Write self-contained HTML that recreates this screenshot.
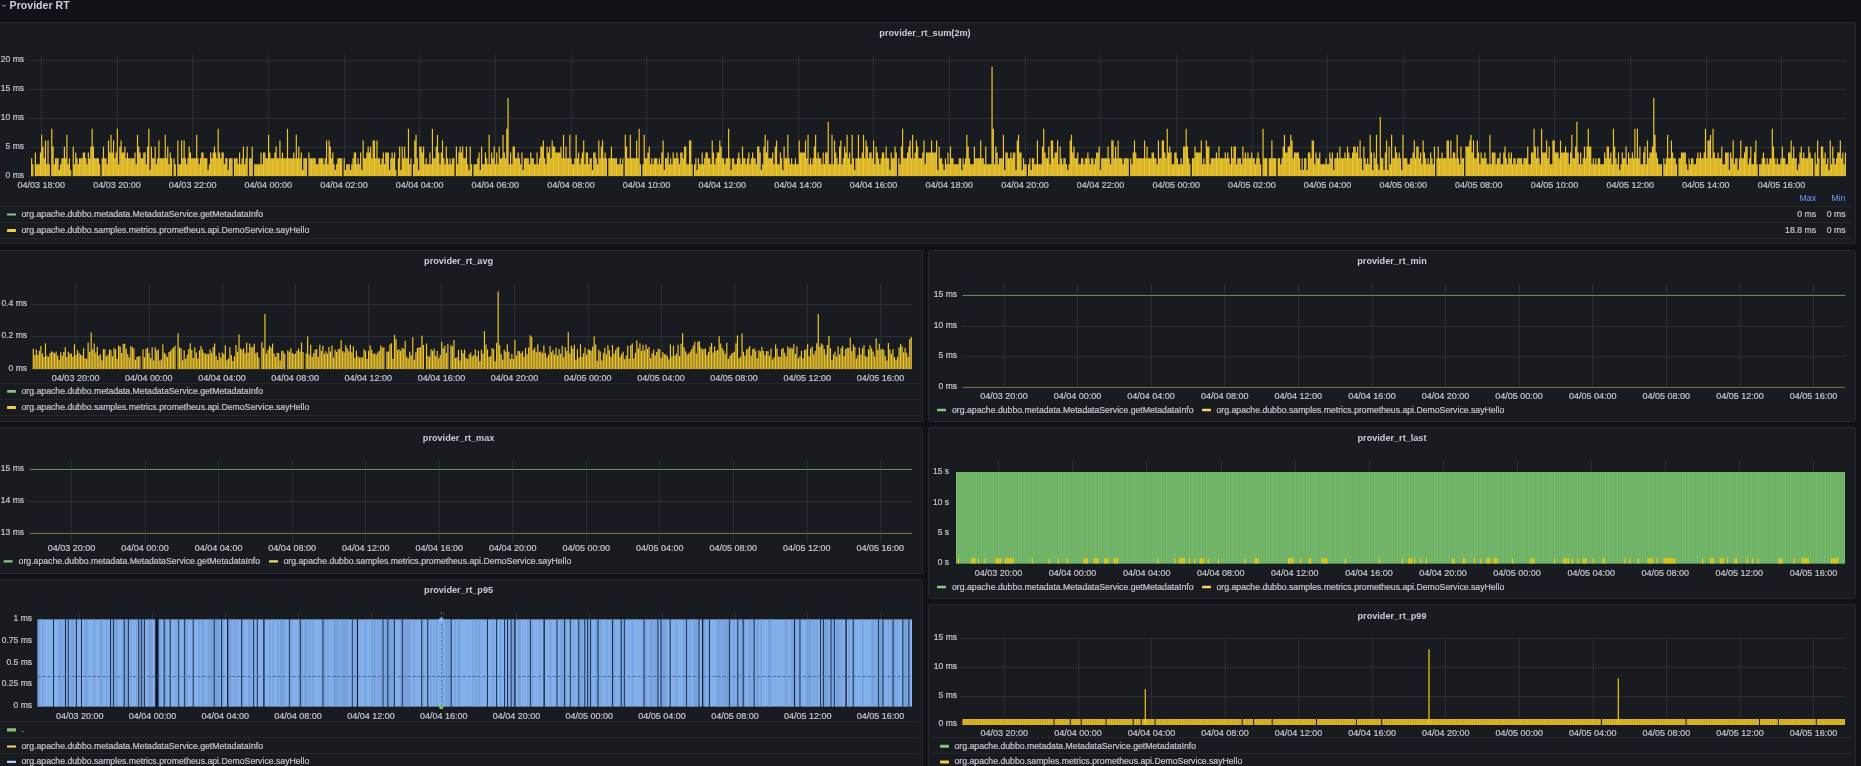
<!DOCTYPE html>
<html><head><meta charset="utf-8"><style>
html,body{margin:0;padding:0;background:#111217;width:1861px;height:766px;overflow:hidden}
</style></head><body>
<svg width="1861" height="766" viewBox="0 0 1861 766" font-family="'Liberation Sans', sans-serif" style="position:absolute;left:0;top:0;will-change:transform"><rect width="1861" height="766" fill="#111217"/><path d="M2.2 4.8 L4 6.6 L5.8 4.8" fill="none" stroke="#ccccdc" stroke-width="0.9"/><text x="9.6" y="9" font-size="10.6" font-weight="bold" fill="#ccccdc">Provider RT</text><rect x="-5.5" y="22.5" width="1861" height="221" rx="1.5" fill="#181b1f" stroke="#26282d" stroke-width="1"/><text x="925" y="36.3" font-size="9.15" font-weight="bold" text-anchor="middle" fill="#ccccdc">provider_rt_sum(2m)</text><line x1="28" y1="60.5" x2="1846.5" y2="60.5" stroke="#2c2e33" stroke-width="1"/><text x="24" y="59.1" font-size="8.5" text-anchor="end" fill="#c4c4cf" stroke="#c4c4cf" stroke-width="0.22" font-weight="normal" dominant-baseline="central">20 ms</text><line x1="28" y1="89.5" x2="1846.5" y2="89.5" stroke="#2c2e33" stroke-width="1"/><text x="24" y="88.1" font-size="8.5" text-anchor="end" fill="#c4c4cf" stroke="#c4c4cf" stroke-width="0.22" font-weight="normal" dominant-baseline="central">15 ms</text><line x1="28" y1="118.5" x2="1846.5" y2="118.5" stroke="#2c2e33" stroke-width="1"/><text x="24" y="117.1" font-size="8.5" text-anchor="end" fill="#c4c4cf" stroke="#c4c4cf" stroke-width="0.22" font-weight="normal" dominant-baseline="central">10 ms</text><line x1="28" y1="147.5" x2="1846.5" y2="147.5" stroke="#2c2e33" stroke-width="1"/><text x="24" y="146.1" font-size="8.5" text-anchor="end" fill="#c4c4cf" stroke="#c4c4cf" stroke-width="0.22" font-weight="normal" dominant-baseline="central">5 ms</text><line x1="28" y1="176.5" x2="1846.5" y2="176.5" stroke="#2c2e33" stroke-width="1"/><text x="24" y="175.1" font-size="8.5" text-anchor="end" fill="#c4c4cf" stroke="#c4c4cf" stroke-width="0.22" font-weight="normal" dominant-baseline="central">0 ms</text><line x1="41.5" y1="55" x2="41.5" y2="176" stroke="#2c2e33" stroke-width="1"/><text x="41.320000000000164" y="185" font-size="9" text-anchor="middle" fill="#c4c4cf" stroke="#c4c4cf" stroke-width="0.22" font-weight="normal" dominant-baseline="central">04/03 18:00</text><line x1="117.5" y1="55" x2="117.5" y2="176" stroke="#2c2e33" stroke-width="1"/><text x="116.98000000000002" y="185" font-size="9" text-anchor="middle" fill="#c4c4cf" stroke="#c4c4cf" stroke-width="0.22" font-weight="normal" dominant-baseline="central">04/03 20:00</text><line x1="192.5" y1="55" x2="192.5" y2="176" stroke="#2c2e33" stroke-width="1"/><text x="192.6400000000001" y="185" font-size="9" text-anchor="middle" fill="#c4c4cf" stroke="#c4c4cf" stroke-width="0.22" font-weight="normal" dominant-baseline="central">04/03 22:00</text><line x1="268.5" y1="55" x2="268.5" y2="176" stroke="#2c2e33" stroke-width="1"/><text x="268.3000000000002" y="185" font-size="9" text-anchor="middle" fill="#c4c4cf" stroke="#c4c4cf" stroke-width="0.22" font-weight="normal" dominant-baseline="central">04/04 00:00</text><line x1="344.5" y1="55" x2="344.5" y2="176" stroke="#2c2e33" stroke-width="1"/><text x="343.96000000000004" y="185" font-size="9" text-anchor="middle" fill="#c4c4cf" stroke="#c4c4cf" stroke-width="0.22" font-weight="normal" dominant-baseline="central">04/04 02:00</text><line x1="419.5" y1="55" x2="419.5" y2="176" stroke="#2c2e33" stroke-width="1"/><text x="419.6200000000001" y="185" font-size="9" text-anchor="middle" fill="#c4c4cf" stroke="#c4c4cf" stroke-width="0.22" font-weight="normal" dominant-baseline="central">04/04 04:00</text><line x1="495.5" y1="55" x2="495.5" y2="176" stroke="#2c2e33" stroke-width="1"/><text x="495.28" y="185" font-size="9" text-anchor="middle" fill="#c4c4cf" stroke="#c4c4cf" stroke-width="0.22" font-weight="normal" dominant-baseline="central">04/04 06:00</text><line x1="571.5" y1="55" x2="571.5" y2="176" stroke="#2c2e33" stroke-width="1"/><text x="570.94" y="185" font-size="9" text-anchor="middle" fill="#c4c4cf" stroke="#c4c4cf" stroke-width="0.22" font-weight="normal" dominant-baseline="central">04/04 08:00</text><line x1="646.5" y1="55" x2="646.5" y2="176" stroke="#2c2e33" stroke-width="1"/><text x="646.6000000000001" y="185" font-size="9" text-anchor="middle" fill="#c4c4cf" stroke="#c4c4cf" stroke-width="0.22" font-weight="normal" dominant-baseline="central">04/04 10:00</text><line x1="722.5" y1="55" x2="722.5" y2="176" stroke="#2c2e33" stroke-width="1"/><text x="722.26" y="185" font-size="9" text-anchor="middle" fill="#c4c4cf" stroke="#c4c4cf" stroke-width="0.22" font-weight="normal" dominant-baseline="central">04/04 12:00</text><line x1="798.5" y1="55" x2="798.5" y2="176" stroke="#2c2e33" stroke-width="1"/><text x="797.9200000000001" y="185" font-size="9" text-anchor="middle" fill="#c4c4cf" stroke="#c4c4cf" stroke-width="0.22" font-weight="normal" dominant-baseline="central">04/04 14:00</text><line x1="873.5" y1="55" x2="873.5" y2="176" stroke="#2c2e33" stroke-width="1"/><text x="873.58" y="185" font-size="9" text-anchor="middle" fill="#c4c4cf" stroke="#c4c4cf" stroke-width="0.22" font-weight="normal" dominant-baseline="central">04/04 16:00</text><line x1="949.5" y1="55" x2="949.5" y2="176" stroke="#2c2e33" stroke-width="1"/><text x="949.24" y="185" font-size="9" text-anchor="middle" fill="#c4c4cf" stroke="#c4c4cf" stroke-width="0.22" font-weight="normal" dominant-baseline="central">04/04 18:00</text><line x1="1025.5" y1="55" x2="1025.5" y2="176" stroke="#2c2e33" stroke-width="1"/><text x="1024.9" y="185" font-size="9" text-anchor="middle" fill="#c4c4cf" stroke="#c4c4cf" stroke-width="0.22" font-weight="normal" dominant-baseline="central">04/04 20:00</text><line x1="1100.5" y1="55" x2="1100.5" y2="176" stroke="#2c2e33" stroke-width="1"/><text x="1100.56" y="185" font-size="9" text-anchor="middle" fill="#c4c4cf" stroke="#c4c4cf" stroke-width="0.22" font-weight="normal" dominant-baseline="central">04/04 22:00</text><line x1="1176.5" y1="55" x2="1176.5" y2="176" stroke="#2c2e33" stroke-width="1"/><text x="1176.22" y="185" font-size="9" text-anchor="middle" fill="#c4c4cf" stroke="#c4c4cf" stroke-width="0.22" font-weight="normal" dominant-baseline="central">04/05 00:00</text><line x1="1252.5" y1="55" x2="1252.5" y2="176" stroke="#2c2e33" stroke-width="1"/><text x="1251.88" y="185" font-size="9" text-anchor="middle" fill="#c4c4cf" stroke="#c4c4cf" stroke-width="0.22" font-weight="normal" dominant-baseline="central">04/05 02:00</text><line x1="1327.5" y1="55" x2="1327.5" y2="176" stroke="#2c2e33" stroke-width="1"/><text x="1327.54" y="185" font-size="9" text-anchor="middle" fill="#c4c4cf" stroke="#c4c4cf" stroke-width="0.22" font-weight="normal" dominant-baseline="central">04/05 04:00</text><line x1="1403.5" y1="55" x2="1403.5" y2="176" stroke="#2c2e33" stroke-width="1"/><text x="1403.2" y="185" font-size="9" text-anchor="middle" fill="#c4c4cf" stroke="#c4c4cf" stroke-width="0.22" font-weight="normal" dominant-baseline="central">04/05 06:00</text><line x1="1479.5" y1="55" x2="1479.5" y2="176" stroke="#2c2e33" stroke-width="1"/><text x="1478.8600000000001" y="185" font-size="9" text-anchor="middle" fill="#c4c4cf" stroke="#c4c4cf" stroke-width="0.22" font-weight="normal" dominant-baseline="central">04/05 08:00</text><line x1="1554.5" y1="55" x2="1554.5" y2="176" stroke="#2c2e33" stroke-width="1"/><text x="1554.52" y="185" font-size="9" text-anchor="middle" fill="#c4c4cf" stroke="#c4c4cf" stroke-width="0.22" font-weight="normal" dominant-baseline="central">04/05 10:00</text><line x1="1630.5" y1="55" x2="1630.5" y2="176" stroke="#2c2e33" stroke-width="1"/><text x="1630.18" y="185" font-size="9" text-anchor="middle" fill="#c4c4cf" stroke="#c4c4cf" stroke-width="0.22" font-weight="normal" dominant-baseline="central">04/05 12:00</text><line x1="1706.5" y1="55" x2="1706.5" y2="176" stroke="#2c2e33" stroke-width="1"/><text x="1705.84" y="185" font-size="9" text-anchor="middle" fill="#c4c4cf" stroke="#c4c4cf" stroke-width="0.22" font-weight="normal" dominant-baseline="central">04/05 14:00</text><line x1="1781.5" y1="55" x2="1781.5" y2="176" stroke="#2c2e33" stroke-width="1"/><text x="1781.5" y="185" font-size="9" text-anchor="middle" fill="#c4c4cf" stroke="#c4c4cf" stroke-width="0.22" font-weight="normal" dominant-baseline="central">04/05 16:00</text><path d="M31.04 176V158.30h1.18V176ZM32.30 176V164.20h1.18V176ZM34.82 176V152.40h1.18V176ZM36.08 176V164.20h1.18V176ZM37.34 176V164.20h1.18V176ZM38.60 176V164.20h1.18V176ZM39.86 176V152.40h1.18V176ZM41.12 176V134.70h1.18V176ZM42.38 176V146.50h1.18V176ZM43.64 176V158.30h1.18V176ZM44.90 176V140.60h1.18V176ZM46.17 176V164.20h1.18V176ZM47.43 176V140.60h1.18V176ZM48.69 176V164.20h1.18V176ZM51.21 176V128.80h1.18V176ZM52.47 176V146.50h1.18V176ZM53.73 176V164.20h1.18V176ZM54.99 176V158.30h1.18V176ZM56.25 176V158.30h1.18V176ZM57.51 176V158.30h1.18V176ZM58.77 176V170.10h1.18V176ZM60.03 176V164.20h1.18V176ZM61.29 176V158.30h1.18V176ZM62.55 176V158.30h1.18V176ZM63.81 176V146.50h1.18V176ZM65.07 176V158.30h1.18V176ZM66.33 176V134.70h1.18V176ZM67.59 176V164.20h1.18V176ZM68.85 176V158.30h1.18V176ZM70.11 176V170.10h1.18V176ZM72.63 176V146.50h1.18V176ZM73.89 176V164.20h1.18V176ZM75.15 176V152.40h1.18V176ZM76.42 176V158.30h1.18V176ZM77.68 176V164.20h1.18V176ZM78.94 176V158.30h1.18V176ZM80.20 176V158.30h1.18V176ZM81.46 176V158.30h1.18V176ZM82.72 176V152.40h1.18V176ZM83.98 176V152.40h1.18V176ZM85.24 176V158.30h1.18V176ZM86.50 176V164.20h1.18V176ZM87.76 176V152.40h1.18V176ZM89.02 176V158.30h1.18V176ZM90.28 176V146.50h1.18V176ZM91.54 176V128.80h1.18V176ZM92.80 176V146.50h1.18V176ZM94.06 176V158.30h1.18V176ZM95.32 176V158.30h1.18V176ZM96.58 176V158.30h1.18V176ZM97.84 176V158.30h1.18V176ZM99.10 176V164.20h1.18V176ZM101.62 176V158.30h1.18V176ZM102.88 176V146.50h1.18V176ZM104.14 176V158.30h1.18V176ZM105.40 176V158.30h1.18V176ZM106.67 176V164.20h1.18V176ZM107.93 176V140.60h1.18V176ZM109.19 176V152.40h1.18V176ZM110.45 176V134.70h1.18V176ZM111.71 176V152.40h1.18V176ZM112.97 176V140.60h1.18V176ZM114.23 176V158.30h1.18V176ZM115.49 176V152.40h1.18V176ZM116.75 176V128.80h1.18V176ZM118.01 176V164.20h1.18V176ZM119.27 176V146.50h1.18V176ZM120.53 176V140.60h1.18V176ZM121.79 176V152.40h1.18V176ZM123.05 176V152.40h1.18V176ZM124.31 176V146.50h1.18V176ZM125.57 176V158.30h1.18V176ZM126.83 176V152.40h1.18V176ZM128.09 176V158.30h1.18V176ZM129.35 176V158.30h1.18V176ZM130.61 176V158.30h1.18V176ZM131.87 176V158.30h1.18V176ZM133.13 176V158.30h1.18V176ZM134.39 176V152.40h1.18V176ZM135.65 176V164.20h1.18V176ZM136.92 176V134.70h1.18V176ZM138.18 176V146.50h1.18V176ZM139.44 176V152.40h1.18V176ZM140.70 176V158.30h1.18V176ZM141.96 176V158.30h1.18V176ZM143.22 176V152.40h1.18V176ZM144.48 176V152.40h1.18V176ZM145.74 176V164.20h1.18V176ZM147.00 176V146.50h1.18V176ZM148.26 176V128.80h1.18V176ZM149.52 176V170.10h1.18V176ZM150.78 176V146.50h1.18V176ZM152.04 176V158.30h1.18V176ZM153.30 176V158.30h1.18V176ZM154.56 176V146.50h1.18V176ZM155.82 176V164.20h1.18V176ZM157.08 176V158.30h1.18V176ZM158.34 176V140.60h1.18V176ZM159.60 176V158.30h1.18V176ZM160.86 176V158.30h1.18V176ZM162.12 176V158.30h1.18V176ZM163.38 176V158.30h1.18V176ZM164.64 176V134.70h1.18V176ZM165.90 176V158.30h1.18V176ZM167.17 176V146.50h1.18V176ZM168.43 176V164.20h1.18V176ZM169.69 176V152.40h1.18V176ZM170.95 176V158.30h1.18V176ZM173.47 176V158.30h1.18V176ZM174.73 176V164.20h1.18V176ZM177.25 176V140.60h1.18V176ZM178.51 176V164.20h1.18V176ZM179.77 176V164.20h1.18V176ZM181.03 176V140.60h1.18V176ZM182.29 176V158.30h1.18V176ZM183.55 176V140.60h1.18V176ZM184.81 176V158.30h1.18V176ZM186.07 176V164.20h1.18V176ZM187.33 176V158.30h1.18V176ZM188.59 176V146.50h1.18V176ZM189.85 176V152.40h1.18V176ZM191.11 176V158.30h1.18V176ZM192.37 176V158.30h1.18V176ZM193.63 176V158.30h1.18V176ZM194.89 176V158.30h1.18V176ZM196.15 176V134.70h1.18V176ZM197.42 176V158.30h1.18V176ZM198.68 176V164.20h1.18V176ZM199.94 176V158.30h1.18V176ZM201.20 176V152.40h1.18V176ZM202.46 176V152.40h1.18V176ZM203.72 176V158.30h1.18V176ZM204.98 176V158.30h1.18V176ZM206.24 176V158.30h1.18V176ZM207.50 176V170.10h1.18V176ZM208.76 176V164.20h1.18V176ZM210.02 176V152.40h1.18V176ZM211.28 176V158.30h1.18V176ZM212.54 176V152.40h1.18V176ZM213.80 176V146.50h1.18V176ZM215.06 176V152.40h1.18V176ZM216.32 176V158.30h1.18V176ZM217.58 176V128.80h1.18V176ZM218.84 176V152.40h1.18V176ZM220.10 176V158.30h1.18V176ZM221.36 176V152.40h1.18V176ZM222.62 176V152.40h1.18V176ZM223.88 176V164.20h1.18V176ZM225.14 176V158.30h1.18V176ZM226.40 176V158.30h1.18V176ZM227.67 176V170.10h1.18V176ZM228.93 176V158.30h1.18V176ZM230.19 176V158.30h1.18V176ZM231.45 176V158.30h1.18V176ZM233.97 176V158.30h1.18V176ZM235.23 176V158.30h1.18V176ZM236.49 176V158.30h1.18V176ZM237.75 176V164.20h1.18V176ZM239.01 176V152.40h1.18V176ZM240.27 176V164.20h1.18V176ZM241.53 176V158.30h1.18V176ZM242.79 176V146.50h1.18V176ZM244.05 176V164.20h1.18V176ZM245.31 176V158.30h1.18V176ZM246.57 176V146.50h1.18V176ZM249.09 176V158.30h1.18V176ZM250.35 176V158.30h1.18V176ZM251.61 176V146.50h1.18V176ZM254.13 176V164.20h1.18V176ZM255.39 176V164.20h1.18V176ZM256.65 176V164.20h1.18V176ZM257.92 176V164.20h1.18V176ZM259.18 176V164.20h1.18V176ZM260.44 176V152.40h1.18V176ZM261.70 176V164.20h1.18V176ZM262.96 176V152.40h1.18V176ZM264.22 176V152.40h1.18V176ZM265.48 176V158.30h1.18V176ZM266.74 176V158.30h1.18V176ZM268.00 176V134.70h1.18V176ZM269.26 176V152.40h1.18V176ZM270.52 176V158.30h1.18V176ZM271.78 176V158.30h1.18V176ZM273.04 176V158.30h1.18V176ZM274.30 176V152.40h1.18V176ZM275.56 176V146.50h1.18V176ZM276.82 176V158.30h1.18V176ZM278.08 176V158.30h1.18V176ZM279.34 176V140.60h1.18V176ZM280.60 176V158.30h1.18V176ZM281.86 176V152.40h1.18V176ZM283.12 176V158.30h1.18V176ZM284.38 176V158.30h1.18V176ZM285.64 176V158.30h1.18V176ZM286.90 176V128.80h1.18V176ZM288.17 176V158.30h1.18V176ZM289.43 176V158.30h1.18V176ZM290.69 176V158.30h1.18V176ZM291.95 176V158.30h1.18V176ZM293.21 176V152.40h1.18V176ZM294.47 176V158.30h1.18V176ZM295.73 176V134.70h1.18V176ZM296.99 176V158.30h1.18V176ZM298.25 176V146.50h1.18V176ZM299.51 176V158.30h1.18V176ZM300.77 176V152.40h1.18V176ZM302.03 176V170.10h1.18V176ZM303.29 176V158.30h1.18V176ZM304.55 176V158.30h1.18V176ZM305.81 176V158.30h1.18V176ZM308.33 176V152.40h1.18V176ZM309.59 176V158.30h1.18V176ZM310.85 176V158.30h1.18V176ZM312.11 176V158.30h1.18V176ZM313.37 176V158.30h1.18V176ZM314.63 176V158.30h1.18V176ZM315.89 176V164.20h1.18V176ZM317.15 176V164.20h1.18V176ZM318.42 176V158.30h1.18V176ZM319.68 176V158.30h1.18V176ZM320.94 176V158.30h1.18V176ZM322.20 176V158.30h1.18V176ZM323.46 176V164.20h1.18V176ZM324.72 176V158.30h1.18V176ZM325.98 176V140.60h1.18V176ZM327.24 176V164.20h1.18V176ZM328.50 176V140.60h1.18V176ZM329.76 176V146.50h1.18V176ZM331.02 176V158.30h1.18V176ZM332.28 176V152.40h1.18V176ZM333.54 176V164.20h1.18V176ZM334.80 176V170.10h1.18V176ZM336.06 176V164.20h1.18V176ZM337.32 176V158.30h1.18V176ZM338.58 176V158.30h1.18V176ZM339.84 176V158.30h1.18V176ZM341.10 176V158.30h1.18V176ZM343.62 176V158.30h1.18V176ZM344.88 176V170.10h1.18V176ZM346.14 176V164.20h1.18V176ZM347.40 176V164.20h1.18V176ZM348.67 176V164.20h1.18V176ZM349.93 176V170.10h1.18V176ZM351.19 176V164.20h1.18V176ZM352.45 176V158.30h1.18V176ZM353.71 176V152.40h1.18V176ZM354.97 176V152.40h1.18V176ZM356.23 176V164.20h1.18V176ZM357.49 176V158.30h1.18V176ZM358.75 176V164.20h1.18V176ZM360.01 176V152.40h1.18V176ZM361.27 176V170.10h1.18V176ZM362.53 176V140.60h1.18V176ZM363.79 176V158.30h1.18V176ZM365.05 176V158.30h1.18V176ZM366.31 176V152.40h1.18V176ZM367.57 176V146.50h1.18V176ZM368.83 176V152.40h1.18V176ZM370.09 176V146.50h1.18V176ZM371.35 176V158.30h1.18V176ZM372.61 176V140.60h1.18V176ZM373.87 176V140.60h1.18V176ZM375.13 176V158.30h1.18V176ZM376.39 176V140.60h1.18V176ZM377.65 176V158.30h1.18V176ZM378.92 176V158.30h1.18V176ZM380.18 176V164.20h1.18V176ZM381.44 176V158.30h1.18V176ZM382.70 176V152.40h1.18V176ZM383.96 176V164.20h1.18V176ZM385.22 176V152.40h1.18V176ZM386.48 176V152.40h1.18V176ZM387.74 176V152.40h1.18V176ZM389.00 176V170.10h1.18V176ZM390.26 176V158.30h1.18V176ZM391.52 176V152.40h1.18V176ZM392.78 176V158.30h1.18V176ZM394.04 176V152.40h1.18V176ZM395.30 176V170.10h1.18V176ZM397.82 176V158.30h1.18V176ZM399.08 176V146.50h1.18V176ZM400.34 176V170.10h1.18V176ZM401.60 176V146.50h1.18V176ZM402.86 176V158.30h1.18V176ZM404.12 176V146.50h1.18V176ZM405.38 176V158.30h1.18V176ZM406.64 176V158.30h1.18V176ZM407.90 176V128.80h1.18V176ZM409.17 176V164.20h1.18V176ZM410.43 176V158.30h1.18V176ZM412.95 176V164.20h1.18V176ZM414.21 176V140.60h1.18V176ZM415.47 176V134.70h1.18V176ZM416.73 176V158.30h1.18V176ZM417.99 176V170.10h1.18V176ZM419.25 176V146.50h1.18V176ZM420.51 176V146.50h1.18V176ZM421.77 176V152.40h1.18V176ZM423.03 176V146.50h1.18V176ZM424.29 176V164.20h1.18V176ZM425.55 176V158.30h1.18V176ZM426.81 176V164.20h1.18V176ZM428.07 176V164.20h1.18V176ZM429.33 176V152.40h1.18V176ZM430.59 176V164.20h1.18V176ZM431.85 176V128.80h1.18V176ZM433.11 176V158.30h1.18V176ZM434.37 176V158.30h1.18V176ZM435.63 176V146.50h1.18V176ZM436.89 176V134.70h1.18V176ZM438.15 176V152.40h1.18V176ZM439.42 176V164.20h1.18V176ZM440.68 176V152.40h1.18V176ZM441.94 176V140.60h1.18V176ZM443.20 176V158.30h1.18V176ZM444.46 176V164.20h1.18V176ZM445.72 176V146.50h1.18V176ZM446.98 176V158.30h1.18V176ZM448.24 176V164.20h1.18V176ZM449.50 176V158.30h1.18V176ZM450.76 176V164.20h1.18V176ZM452.02 176V158.30h1.18V176ZM453.28 176V158.30h1.18V176ZM455.80 176V146.50h1.18V176ZM457.06 176V164.20h1.18V176ZM458.32 176V152.40h1.18V176ZM459.58 176V146.50h1.18V176ZM460.84 176V152.40h1.18V176ZM462.10 176V146.50h1.18V176ZM463.36 176V158.30h1.18V176ZM464.62 176V158.30h1.18V176ZM465.88 176V146.50h1.18V176ZM467.14 176V164.20h1.18V176ZM468.40 176V170.10h1.18V176ZM469.67 176V146.50h1.18V176ZM470.93 176V164.20h1.18V176ZM473.45 176V164.20h1.18V176ZM474.71 176V164.20h1.18V176ZM475.97 176V164.20h1.18V176ZM477.23 176V158.30h1.18V176ZM478.49 176V152.40h1.18V176ZM479.75 176V170.10h1.18V176ZM481.01 176V146.50h1.18V176ZM482.27 176V164.20h1.18V176ZM483.53 176V164.20h1.18V176ZM484.79 176V152.40h1.18V176ZM486.05 176V158.30h1.18V176ZM487.31 176V164.20h1.18V176ZM488.57 176V134.70h1.18V176ZM489.83 176V164.20h1.18V176ZM491.09 176V152.40h1.18V176ZM492.35 176V158.30h1.18V176ZM493.61 176V146.50h1.18V176ZM494.87 176V164.20h1.18V176ZM496.13 176V152.40h1.18V176ZM497.39 176V164.20h1.18V176ZM498.65 176V146.50h1.18V176ZM499.92 176V158.30h1.18V176ZM501.18 176V158.30h1.18V176ZM502.44 176V134.70h1.18V176ZM503.70 176V152.40h1.18V176ZM504.96 176V158.30h1.18V176ZM506.22 176V128.80h1.18V176ZM507.48 176V98.12h1.18V176ZM508.74 176V164.20h1.18V176ZM510.00 176V152.40h1.18V176ZM511.26 176V164.20h1.18V176ZM512.52 176V146.50h1.18V176ZM513.78 176V146.50h1.18V176ZM515.04 176V158.30h1.18V176ZM516.30 176V158.30h1.18V176ZM517.56 176V152.40h1.18V176ZM518.82 176V158.30h1.18V176ZM520.08 176V164.20h1.18V176ZM521.34 176V152.40h1.18V176ZM522.60 176V170.10h1.18V176ZM523.86 176V158.30h1.18V176ZM525.12 176V158.30h1.18V176ZM526.38 176V158.30h1.18V176ZM527.64 176V158.30h1.18V176ZM528.90 176V164.20h1.18V176ZM530.17 176V152.40h1.18V176ZM531.43 176V158.30h1.18V176ZM532.69 176V158.30h1.18V176ZM533.95 176V164.20h1.18V176ZM535.21 176V164.20h1.18V176ZM536.47 176V152.40h1.18V176ZM537.73 176V164.20h1.18V176ZM538.99 176V158.30h1.18V176ZM540.25 176V146.50h1.18V176ZM541.51 176V146.50h1.18V176ZM542.77 176V140.60h1.18V176ZM544.03 176V158.30h1.18V176ZM545.29 176V164.20h1.18V176ZM546.55 176V146.50h1.18V176ZM547.81 176V152.40h1.18V176ZM549.07 176V146.50h1.18V176ZM550.33 176V158.30h1.18V176ZM551.59 176V140.60h1.18V176ZM552.85 176V146.50h1.18V176ZM554.11 176V146.50h1.18V176ZM555.37 176V152.40h1.18V176ZM556.63 176V152.40h1.18V176ZM557.89 176V152.40h1.18V176ZM559.15 176V152.40h1.18V176ZM560.42 176V146.50h1.18V176ZM561.68 176V158.30h1.18V176ZM562.94 176V134.70h1.18V176ZM564.20 176V158.30h1.18V176ZM565.46 176V146.50h1.18V176ZM566.72 176V158.30h1.18V176ZM567.98 176V158.30h1.18V176ZM569.24 176V134.70h1.18V176ZM570.50 176V158.30h1.18V176ZM571.76 176V164.20h1.18V176ZM573.02 176V164.20h1.18V176ZM574.28 176V158.30h1.18V176ZM575.54 176V134.70h1.18V176ZM576.80 176V158.30h1.18V176ZM578.06 176V152.40h1.18V176ZM579.32 176V164.20h1.18V176ZM580.58 176V158.30h1.18V176ZM581.84 176V152.40h1.18V176ZM583.10 176V140.60h1.18V176ZM584.36 176V164.20h1.18V176ZM585.62 176V152.40h1.18V176ZM586.88 176V152.40h1.18V176ZM588.14 176V164.20h1.18V176ZM589.40 176V158.30h1.18V176ZM590.67 176V158.30h1.18V176ZM591.93 176V170.10h1.18V176ZM593.19 176V152.40h1.18V176ZM594.45 176V152.40h1.18V176ZM595.71 176V158.30h1.18V176ZM596.97 176V164.20h1.18V176ZM598.23 176V140.60h1.18V176ZM599.49 176V158.30h1.18V176ZM600.75 176V146.50h1.18V176ZM602.01 176V140.60h1.18V176ZM603.27 176V158.30h1.18V176ZM604.53 176V152.40h1.18V176ZM605.79 176V158.30h1.18V176ZM608.31 176V158.30h1.18V176ZM609.57 176V158.30h1.18V176ZM610.83 176V146.50h1.18V176ZM612.09 176V158.30h1.18V176ZM613.35 176V158.30h1.18V176ZM614.61 176V158.30h1.18V176ZM615.87 176V158.30h1.18V176ZM617.13 176V164.20h1.18V176ZM618.39 176V164.20h1.18V176ZM619.65 176V158.30h1.18V176ZM620.92 176V164.20h1.18V176ZM622.18 176V158.30h1.18V176ZM624.70 176V134.70h1.18V176ZM625.96 176V146.50h1.18V176ZM627.22 176V158.30h1.18V176ZM628.48 176V158.30h1.18V176ZM629.74 176V134.70h1.18V176ZM631.00 176V158.30h1.18V176ZM632.26 176V158.30h1.18V176ZM633.52 176V158.30h1.18V176ZM634.78 176V158.30h1.18V176ZM636.04 176V140.60h1.18V176ZM637.30 176V158.30h1.18V176ZM638.56 176V128.80h1.18V176ZM639.82 176V164.20h1.18V176ZM642.34 176V164.20h1.18V176ZM643.60 176V134.70h1.18V176ZM644.86 176V158.30h1.18V176ZM646.12 176V158.30h1.18V176ZM647.38 176V152.40h1.18V176ZM648.64 176V146.50h1.18V176ZM649.90 176V164.20h1.18V176ZM651.17 176V158.30h1.18V176ZM652.43 176V164.20h1.18V176ZM653.69 176V158.30h1.18V176ZM654.95 176V158.30h1.18V176ZM656.21 176V158.30h1.18V176ZM657.47 176V164.20h1.18V176ZM658.73 176V158.30h1.18V176ZM659.99 176V164.20h1.18V176ZM661.25 176V152.40h1.18V176ZM662.51 176V140.60h1.18V176ZM663.77 176V170.10h1.18V176ZM665.03 176V158.30h1.18V176ZM666.29 176V158.30h1.18V176ZM667.55 176V152.40h1.18V176ZM668.81 176V164.20h1.18V176ZM670.07 176V158.30h1.18V176ZM671.33 176V164.20h1.18V176ZM672.59 176V152.40h1.18V176ZM673.85 176V158.30h1.18V176ZM675.11 176V158.30h1.18V176ZM676.37 176V152.40h1.18V176ZM677.63 176V158.30h1.18V176ZM678.89 176V164.20h1.18V176ZM680.15 176V152.40h1.18V176ZM681.42 176V152.40h1.18V176ZM682.68 176V158.30h1.18V176ZM683.94 176V146.50h1.18V176ZM685.20 176V146.50h1.18V176ZM686.46 176V164.20h1.18V176ZM687.72 176V164.20h1.18V176ZM688.98 176V140.60h1.18V176ZM690.24 176V140.60h1.18V176ZM691.50 176V164.20h1.18V176ZM694.02 176V164.20h1.18V176ZM695.28 176V158.30h1.18V176ZM696.54 176V170.10h1.18V176ZM697.80 176V158.30h1.18V176ZM699.06 176V164.20h1.18V176ZM700.32 176V164.20h1.18V176ZM701.58 176V152.40h1.18V176ZM702.84 176V164.20h1.18V176ZM704.10 176V158.30h1.18V176ZM705.36 176V152.40h1.18V176ZM706.62 176V152.40h1.18V176ZM707.88 176V158.30h1.18V176ZM709.14 176V158.30h1.18V176ZM710.40 176V164.20h1.18V176ZM711.67 176V140.60h1.18V176ZM712.93 176V152.40h1.18V176ZM714.19 176V164.20h1.18V176ZM715.45 176V158.30h1.18V176ZM716.71 176V152.40h1.18V176ZM717.97 176V152.40h1.18V176ZM719.23 176V140.60h1.18V176ZM720.49 176V146.50h1.18V176ZM721.75 176V158.30h1.18V176ZM723.01 176V158.30h1.18V176ZM724.27 176V164.20h1.18V176ZM725.53 176V158.30h1.18V176ZM726.79 176V158.30h1.18V176ZM728.05 176V128.80h1.18V176ZM729.31 176V158.30h1.18V176ZM730.57 176V170.10h1.18V176ZM731.83 176V158.30h1.18V176ZM733.09 176V158.30h1.18V176ZM734.35 176V164.20h1.18V176ZM735.61 176V164.20h1.18V176ZM736.87 176V158.30h1.18V176ZM738.13 176V152.40h1.18V176ZM739.39 176V158.30h1.18V176ZM740.65 176V164.20h1.18V176ZM741.92 176V146.50h1.18V176ZM743.18 176V158.30h1.18V176ZM744.44 176V158.30h1.18V176ZM745.70 176V164.20h1.18V176ZM746.96 176V158.30h1.18V176ZM748.22 176V152.40h1.18V176ZM749.48 176V164.20h1.18V176ZM750.74 176V158.30h1.18V176ZM752.00 176V152.40h1.18V176ZM753.26 176V158.30h1.18V176ZM754.52 176V158.30h1.18V176ZM755.78 176V164.20h1.18V176ZM757.04 176V146.50h1.18V176ZM758.30 176V146.50h1.18V176ZM759.56 176V152.40h1.18V176ZM760.82 176V170.10h1.18V176ZM762.08 176V164.20h1.18V176ZM763.34 176V146.50h1.18V176ZM764.60 176V134.70h1.18V176ZM765.86 176V152.40h1.18V176ZM767.12 176V140.60h1.18V176ZM768.38 176V158.30h1.18V176ZM769.64 176V158.30h1.18V176ZM770.90 176V158.30h1.18V176ZM772.17 176V152.40h1.18V176ZM773.43 176V164.20h1.18V176ZM774.69 176V146.50h1.18V176ZM775.95 176V140.60h1.18V176ZM777.21 176V164.20h1.18V176ZM778.47 176V164.20h1.18V176ZM779.73 176V152.40h1.18V176ZM780.99 176V158.30h1.18V176ZM782.25 176V170.10h1.18V176ZM783.51 176V146.50h1.18V176ZM784.77 176V158.30h1.18V176ZM786.03 176V158.30h1.18V176ZM787.29 176V134.70h1.18V176ZM788.55 176V158.30h1.18V176ZM789.81 176V164.20h1.18V176ZM791.07 176V158.30h1.18V176ZM792.33 176V164.20h1.18V176ZM793.59 176V164.20h1.18V176ZM794.85 176V158.30h1.18V176ZM796.11 176V164.20h1.18V176ZM797.37 176V164.20h1.18V176ZM798.63 176V140.60h1.18V176ZM799.89 176V152.40h1.18V176ZM801.15 176V152.40h1.18V176ZM802.42 176V152.40h1.18V176ZM803.68 176V152.40h1.18V176ZM804.94 176V140.60h1.18V176ZM806.20 176V158.30h1.18V176ZM807.46 176V134.70h1.18V176ZM808.72 176V164.20h1.18V176ZM809.98 176V158.30h1.18V176ZM811.24 176V164.20h1.18V176ZM812.50 176V158.30h1.18V176ZM813.76 176V146.50h1.18V176ZM815.02 176V134.70h1.18V176ZM816.28 176V158.30h1.18V176ZM817.54 176V152.40h1.18V176ZM818.80 176V158.30h1.18V176ZM820.06 176V158.30h1.18V176ZM821.32 176V164.20h1.18V176ZM822.58 176V152.40h1.18V176ZM823.84 176V164.20h1.18V176ZM825.10 176V152.40h1.18V176ZM826.36 176V152.40h1.18V176ZM827.62 176V121.72h1.18V176ZM828.88 176V164.20h1.18V176ZM830.14 176V164.20h1.18V176ZM831.40 176V134.70h1.18V176ZM832.67 176V164.20h1.18V176ZM833.93 176V140.60h1.18V176ZM835.19 176V152.40h1.18V176ZM836.45 176V158.30h1.18V176ZM837.71 176V164.20h1.18V176ZM838.97 176V146.50h1.18V176ZM840.23 176V140.60h1.18V176ZM841.49 176V164.20h1.18V176ZM842.75 176V158.30h1.18V176ZM844.01 176V146.50h1.18V176ZM845.27 176V152.40h1.18V176ZM846.53 176V134.70h1.18V176ZM847.79 176V158.30h1.18V176ZM849.05 176V152.40h1.18V176ZM850.31 176V164.20h1.18V176ZM851.57 176V134.70h1.18V176ZM852.83 176V158.30h1.18V176ZM854.09 176V170.10h1.18V176ZM855.35 176V158.30h1.18V176ZM856.61 176V158.30h1.18V176ZM857.87 176V134.70h1.18V176ZM859.13 176V158.30h1.18V176ZM860.39 176V158.30h1.18V176ZM861.65 176V152.40h1.18V176ZM862.92 176V134.70h1.18V176ZM864.18 176V158.30h1.18V176ZM865.44 176V140.60h1.18V176ZM866.70 176V146.50h1.18V176ZM867.96 176V158.30h1.18V176ZM869.22 176V152.40h1.18V176ZM870.48 176V152.40h1.18V176ZM871.74 176V158.30h1.18V176ZM873.00 176V140.60h1.18V176ZM874.26 176V164.20h1.18V176ZM875.52 176V146.50h1.18V176ZM876.78 176V152.40h1.18V176ZM878.04 176V158.30h1.18V176ZM879.30 176V164.20h1.18V176ZM880.56 176V158.30h1.18V176ZM881.82 176V152.40h1.18V176ZM883.08 176V152.40h1.18V176ZM884.34 176V158.30h1.18V176ZM885.60 176V146.50h1.18V176ZM886.86 176V158.30h1.18V176ZM888.12 176V158.30h1.18V176ZM889.38 176V170.10h1.18V176ZM890.64 176V152.40h1.18V176ZM891.90 176V158.30h1.18V176ZM893.17 176V158.30h1.18V176ZM894.43 176V146.50h1.18V176ZM895.69 176V152.40h1.18V176ZM898.21 176V158.30h1.18V176ZM899.47 176V164.20h1.18V176ZM900.73 176V146.50h1.18V176ZM901.99 176V128.80h1.18V176ZM903.25 176V158.30h1.18V176ZM904.51 176V158.30h1.18V176ZM905.77 176V158.30h1.18V176ZM907.03 176V152.40h1.18V176ZM908.29 176V146.50h1.18V176ZM909.55 176V140.60h1.18V176ZM910.81 176V158.30h1.18V176ZM912.07 176V134.70h1.18V176ZM913.33 176V158.30h1.18V176ZM914.59 176V152.40h1.18V176ZM915.85 176V140.60h1.18V176ZM917.11 176V146.50h1.18V176ZM918.37 176V158.30h1.18V176ZM919.63 176V158.30h1.18V176ZM920.89 176V158.30h1.18V176ZM922.15 176V152.40h1.18V176ZM923.42 176V140.60h1.18V176ZM924.68 176V164.20h1.18V176ZM925.94 176V152.40h1.18V176ZM927.20 176V152.40h1.18V176ZM928.46 176V152.40h1.18V176ZM929.72 176V152.40h1.18V176ZM930.98 176V140.60h1.18V176ZM932.24 176V152.40h1.18V176ZM933.50 176V152.40h1.18V176ZM934.76 176V152.40h1.18V176ZM936.02 176V140.60h1.18V176ZM937.28 176V170.10h1.18V176ZM938.54 176V146.50h1.18V176ZM939.80 176V158.30h1.18V176ZM941.06 176V158.30h1.18V176ZM942.32 176V164.20h1.18V176ZM943.58 176V170.10h1.18V176ZM944.84 176V158.30h1.18V176ZM946.10 176V164.20h1.18V176ZM947.36 176V152.40h1.18V176ZM948.62 176V164.20h1.18V176ZM949.88 176V146.50h1.18V176ZM951.14 176V158.30h1.18V176ZM952.40 176V158.30h1.18V176ZM953.67 176V164.20h1.18V176ZM954.93 176V164.20h1.18V176ZM956.19 176V164.20h1.18V176ZM957.45 176V164.20h1.18V176ZM958.71 176V158.30h1.18V176ZM959.97 176V158.30h1.18V176ZM961.23 176V170.10h1.18V176ZM962.49 176V158.30h1.18V176ZM963.75 176V164.20h1.18V176ZM965.01 176V158.30h1.18V176ZM966.27 176V134.70h1.18V176ZM967.53 176V146.50h1.18V176ZM968.79 176V158.30h1.18V176ZM970.05 176V164.20h1.18V176ZM971.31 176V164.20h1.18V176ZM972.57 176V164.20h1.18V176ZM973.83 176V146.50h1.18V176ZM975.09 176V158.30h1.18V176ZM976.35 176V158.30h1.18V176ZM977.61 176V158.30h1.18V176ZM978.87 176V158.30h1.18V176ZM980.13 176V140.60h1.18V176ZM981.39 176V158.30h1.18V176ZM982.65 176V158.30h1.18V176ZM983.92 176V164.20h1.18V176ZM985.18 176V146.50h1.18V176ZM986.44 176V164.20h1.18V176ZM987.70 176V164.20h1.18V176ZM988.96 176V164.20h1.18V176ZM990.22 176V164.20h1.18V176ZM991.48 176V66.85h1.18V176ZM992.74 176V128.80h1.18V176ZM994.00 176V164.20h1.18V176ZM995.26 176V146.50h1.18V176ZM996.52 176V152.40h1.18V176ZM997.78 176V164.20h1.18V176ZM999.04 176V158.30h1.18V176ZM1000.30 176V158.30h1.18V176ZM1001.56 176V158.30h1.18V176ZM1002.82 176V134.70h1.18V176ZM1004.08 176V170.10h1.18V176ZM1005.34 176V152.40h1.18V176ZM1006.60 176V152.40h1.18V176ZM1007.86 176V158.30h1.18V176ZM1009.12 176V158.30h1.18V176ZM1010.38 176V152.40h1.18V176ZM1011.64 176V158.30h1.18V176ZM1012.90 176V152.40h1.18V176ZM1014.17 176V152.40h1.18V176ZM1015.43 176V170.10h1.18V176ZM1016.69 176V140.60h1.18V176ZM1017.95 176V134.70h1.18V176ZM1019.21 176V152.40h1.18V176ZM1020.47 176V152.40h1.18V176ZM1021.73 176V170.10h1.18V176ZM1022.99 176V158.30h1.18V176ZM1024.25 176V164.20h1.18V176ZM1025.51 176V164.20h1.18V176ZM1028.03 176V164.20h1.18V176ZM1029.29 176V158.30h1.18V176ZM1030.55 176V170.10h1.18V176ZM1031.81 176V158.30h1.18V176ZM1033.07 176V158.30h1.18V176ZM1034.33 176V164.20h1.18V176ZM1035.59 176V164.20h1.18V176ZM1036.85 176V140.60h1.18V176ZM1038.11 176V164.20h1.18V176ZM1039.37 176V164.20h1.18V176ZM1040.63 176V164.20h1.18V176ZM1041.89 176V146.50h1.18V176ZM1043.15 176V128.80h1.18V176ZM1044.42 176V152.40h1.18V176ZM1045.68 176V158.30h1.18V176ZM1046.94 176V158.30h1.18V176ZM1048.20 176V146.50h1.18V176ZM1049.46 176V164.20h1.18V176ZM1050.72 176V140.60h1.18V176ZM1051.98 176V140.60h1.18V176ZM1053.24 176V158.30h1.18V176ZM1054.50 176V152.40h1.18V176ZM1055.76 176V152.40h1.18V176ZM1057.02 176V140.60h1.18V176ZM1058.28 176V164.20h1.18V176ZM1059.54 176V146.50h1.18V176ZM1060.80 176V158.30h1.18V176ZM1062.06 176V164.20h1.18V176ZM1063.32 176V158.30h1.18V176ZM1064.58 176V158.30h1.18V176ZM1065.84 176V164.20h1.18V176ZM1067.10 176V170.10h1.18V176ZM1068.36 176V164.20h1.18V176ZM1069.62 176V140.60h1.18V176ZM1070.88 176V134.70h1.18V176ZM1072.14 176V152.40h1.18V176ZM1073.40 176V146.50h1.18V176ZM1074.67 176V158.30h1.18V176ZM1075.93 176V158.30h1.18V176ZM1077.19 176V152.40h1.18V176ZM1078.45 176V164.20h1.18V176ZM1079.71 176V164.20h1.18V176ZM1080.97 176V158.30h1.18V176ZM1082.23 176V158.30h1.18V176ZM1083.49 176V164.20h1.18V176ZM1084.75 176V158.30h1.18V176ZM1086.01 176V158.30h1.18V176ZM1087.27 176V152.40h1.18V176ZM1088.53 176V158.30h1.18V176ZM1089.79 176V164.20h1.18V176ZM1091.05 176V158.30h1.18V176ZM1092.31 176V158.30h1.18V176ZM1093.57 176V164.20h1.18V176ZM1094.83 176V158.30h1.18V176ZM1096.09 176V152.40h1.18V176ZM1097.35 176V152.40h1.18V176ZM1098.61 176V146.50h1.18V176ZM1099.87 176V170.10h1.18V176ZM1101.13 176V158.30h1.18V176ZM1102.39 176V158.30h1.18V176ZM1103.65 176V158.30h1.18V176ZM1104.92 176V158.30h1.18V176ZM1106.18 176V158.30h1.18V176ZM1107.44 176V146.50h1.18V176ZM1108.70 176V158.30h1.18V176ZM1109.96 176V164.20h1.18V176ZM1111.22 176V140.60h1.18V176ZM1112.48 176V140.60h1.18V176ZM1113.74 176V158.30h1.18V176ZM1115.00 176V146.50h1.18V176ZM1116.26 176V158.30h1.18V176ZM1117.52 176V140.60h1.18V176ZM1118.78 176V158.30h1.18V176ZM1120.04 176V158.30h1.18V176ZM1121.30 176V158.30h1.18V176ZM1122.56 176V164.20h1.18V176ZM1123.82 176V158.30h1.18V176ZM1125.08 176V158.30h1.18V176ZM1126.34 176V158.30h1.18V176ZM1127.60 176V158.30h1.18V176ZM1130.12 176V158.30h1.18V176ZM1131.38 176V164.20h1.18V176ZM1132.64 176V152.40h1.18V176ZM1133.90 176V140.60h1.18V176ZM1135.17 176V152.40h1.18V176ZM1136.43 176V158.30h1.18V176ZM1137.69 176V158.30h1.18V176ZM1138.95 176V158.30h1.18V176ZM1140.21 176V158.30h1.18V176ZM1141.47 176V158.30h1.18V176ZM1142.73 176V158.30h1.18V176ZM1143.99 176V140.60h1.18V176ZM1145.25 176V158.30h1.18V176ZM1146.51 176V146.50h1.18V176ZM1147.77 176V158.30h1.18V176ZM1149.03 176V158.30h1.18V176ZM1150.29 176V158.30h1.18V176ZM1151.55 176V152.40h1.18V176ZM1152.81 176V152.40h1.18V176ZM1154.07 176V158.30h1.18V176ZM1155.33 176V158.30h1.18V176ZM1156.59 176V164.20h1.18V176ZM1157.85 176V140.60h1.18V176ZM1159.11 176V158.30h1.18V176ZM1160.37 176V158.30h1.18V176ZM1161.63 176V140.60h1.18V176ZM1162.89 176V140.60h1.18V176ZM1164.15 176V152.40h1.18V176ZM1165.42 176V158.30h1.18V176ZM1166.68 176V128.80h1.18V176ZM1167.94 176V152.40h1.18V176ZM1169.20 176V146.50h1.18V176ZM1170.46 176V152.40h1.18V176ZM1171.72 176V164.20h1.18V176ZM1172.98 176V164.20h1.18V176ZM1174.24 176V152.40h1.18V176ZM1175.50 176V152.40h1.18V176ZM1176.76 176V158.30h1.18V176ZM1178.02 176V164.20h1.18V176ZM1179.28 176V164.20h1.18V176ZM1180.54 176V158.30h1.18V176ZM1181.80 176V164.20h1.18V176ZM1183.06 176V146.50h1.18V176ZM1184.32 176V146.50h1.18V176ZM1185.58 176V128.80h1.18V176ZM1186.84 176V146.50h1.18V176ZM1188.10 176V158.30h1.18V176ZM1189.36 176V164.20h1.18V176ZM1191.88 176V158.30h1.18V176ZM1193.14 176V158.30h1.18V176ZM1194.40 176V146.50h1.18V176ZM1195.67 176V152.40h1.18V176ZM1196.93 176V152.40h1.18V176ZM1198.19 176V152.40h1.18V176ZM1199.45 176V152.40h1.18V176ZM1200.71 176V140.60h1.18V176ZM1201.97 176V164.20h1.18V176ZM1203.23 176V158.30h1.18V176ZM1204.49 176V164.20h1.18V176ZM1205.75 176V140.60h1.18V176ZM1207.01 176V146.50h1.18V176ZM1208.27 176V146.50h1.18V176ZM1209.53 176V164.20h1.18V176ZM1210.79 176V158.30h1.18V176ZM1212.05 176V158.30h1.18V176ZM1213.31 176V158.30h1.18V176ZM1214.57 176V158.30h1.18V176ZM1215.83 176V152.40h1.18V176ZM1217.09 176V158.30h1.18V176ZM1218.35 176V146.50h1.18V176ZM1219.61 176V158.30h1.18V176ZM1220.87 176V158.30h1.18V176ZM1222.13 176V158.30h1.18V176ZM1223.39 176V158.30h1.18V176ZM1224.65 176V152.40h1.18V176ZM1225.92 176V158.30h1.18V176ZM1227.18 176V152.40h1.18V176ZM1228.44 176V158.30h1.18V176ZM1229.70 176V164.20h1.18V176ZM1230.96 176V146.50h1.18V176ZM1232.22 176V158.30h1.18V176ZM1233.48 176V146.50h1.18V176ZM1234.74 176V146.50h1.18V176ZM1236.00 176V164.20h1.18V176ZM1237.26 176V158.30h1.18V176ZM1238.52 176V158.30h1.18V176ZM1239.78 176V158.30h1.18V176ZM1241.04 176V164.20h1.18V176ZM1242.30 176V146.50h1.18V176ZM1243.56 176V158.30h1.18V176ZM1244.82 176V152.40h1.18V176ZM1246.08 176V158.30h1.18V176ZM1247.34 176V152.40h1.18V176ZM1248.60 176V158.30h1.18V176ZM1249.86 176V158.30h1.18V176ZM1251.12 176V152.40h1.18V176ZM1252.38 176V158.30h1.18V176ZM1253.64 176V158.30h1.18V176ZM1254.90 176V164.20h1.18V176ZM1256.17 176V158.30h1.18V176ZM1257.43 176V152.40h1.18V176ZM1258.69 176V158.30h1.18V176ZM1259.95 176V164.20h1.18V176ZM1262.47 176V128.80h1.18V176ZM1263.73 176V158.30h1.18V176ZM1264.99 176V158.30h1.18V176ZM1266.25 176V158.30h1.18V176ZM1268.77 176V158.30h1.18V176ZM1270.03 176V158.30h1.18V176ZM1271.29 176V140.60h1.18V176ZM1272.55 176V158.30h1.18V176ZM1273.81 176V158.30h1.18V176ZM1275.07 176V158.30h1.18V176ZM1277.59 176V158.30h1.18V176ZM1278.85 176V158.30h1.18V176ZM1280.11 176V164.20h1.18V176ZM1281.37 176V158.30h1.18V176ZM1282.63 176V146.50h1.18V176ZM1283.89 176V134.70h1.18V176ZM1285.15 176V152.40h1.18V176ZM1286.42 176V152.40h1.18V176ZM1287.68 176V146.50h1.18V176ZM1288.94 176V146.50h1.18V176ZM1290.20 176V134.70h1.18V176ZM1291.46 176V140.60h1.18V176ZM1292.72 176V158.30h1.18V176ZM1293.98 176V152.40h1.18V176ZM1295.24 176V152.40h1.18V176ZM1296.50 176V152.40h1.18V176ZM1297.76 176V152.40h1.18V176ZM1299.02 176V158.30h1.18V176ZM1300.28 176V170.10h1.18V176ZM1301.54 176V158.30h1.18V176ZM1302.80 176V170.10h1.18V176ZM1304.06 176V158.30h1.18V176ZM1305.32 176V158.30h1.18V176ZM1306.58 176V170.10h1.18V176ZM1307.84 176V152.40h1.18V176ZM1309.10 176V152.40h1.18V176ZM1310.36 176V158.30h1.18V176ZM1311.62 176V140.60h1.18V176ZM1312.88 176V140.60h1.18V176ZM1314.14 176V164.20h1.18V176ZM1315.40 176V152.40h1.18V176ZM1316.67 176V158.30h1.18V176ZM1317.93 176V158.30h1.18V176ZM1319.19 176V152.40h1.18V176ZM1320.45 176V164.20h1.18V176ZM1321.71 176V164.20h1.18V176ZM1322.97 176V164.20h1.18V176ZM1324.23 176V164.20h1.18V176ZM1325.49 176V158.30h1.18V176ZM1326.75 176V164.20h1.18V176ZM1328.01 176V164.20h1.18V176ZM1329.27 176V152.40h1.18V176ZM1330.53 176V158.30h1.18V176ZM1331.79 176V152.40h1.18V176ZM1333.05 176V170.10h1.18V176ZM1334.31 176V158.30h1.18V176ZM1335.57 176V158.30h1.18V176ZM1336.83 176V152.40h1.18V176ZM1338.09 176V158.30h1.18V176ZM1339.35 176V146.50h1.18V176ZM1340.61 176V158.30h1.18V176ZM1341.87 176V158.30h1.18V176ZM1343.13 176V158.30h1.18V176ZM1344.39 176V152.40h1.18V176ZM1345.65 176V158.30h1.18V176ZM1346.92 176V146.50h1.18V176ZM1348.18 176V152.40h1.18V176ZM1349.44 176V158.30h1.18V176ZM1350.70 176V158.30h1.18V176ZM1351.96 176V152.40h1.18V176ZM1353.22 176V146.50h1.18V176ZM1354.48 176V146.50h1.18V176ZM1355.74 176V152.40h1.18V176ZM1357.00 176V146.50h1.18V176ZM1358.26 176V158.30h1.18V176ZM1359.52 176V140.60h1.18V176ZM1360.78 176V158.30h1.18V176ZM1362.04 176V170.10h1.18V176ZM1363.30 176V146.50h1.18V176ZM1364.56 176V158.30h1.18V176ZM1365.82 176V164.20h1.18V176ZM1367.08 176V158.30h1.18V176ZM1368.34 176V164.20h1.18V176ZM1369.60 176V134.70h1.18V176ZM1370.86 176V152.40h1.18V176ZM1372.12 176V170.10h1.18V176ZM1373.38 176V152.40h1.18V176ZM1374.64 176V158.30h1.18V176ZM1375.90 176V134.70h1.18V176ZM1377.17 176V164.20h1.18V176ZM1378.43 176V170.10h1.18V176ZM1379.69 176V117.00h1.18V176ZM1380.95 176V158.30h1.18V176ZM1382.21 176V158.30h1.18V176ZM1383.47 176V170.10h1.18V176ZM1384.73 176V152.40h1.18V176ZM1385.99 176V140.60h1.18V176ZM1387.25 176V170.10h1.18V176ZM1388.51 176V146.50h1.18V176ZM1389.77 176V164.20h1.18V176ZM1391.03 176V134.70h1.18V176ZM1392.29 176V158.30h1.18V176ZM1393.55 176V158.30h1.18V176ZM1394.81 176V146.50h1.18V176ZM1396.07 176V152.40h1.18V176ZM1397.33 176V158.30h1.18V176ZM1398.59 176V152.40h1.18V176ZM1399.85 176V158.30h1.18V176ZM1401.11 176V170.10h1.18V176ZM1402.37 176V134.70h1.18V176ZM1403.63 176V158.30h1.18V176ZM1404.89 176V158.30h1.18V176ZM1406.15 176V158.30h1.18V176ZM1407.42 176V164.20h1.18V176ZM1408.68 176V164.20h1.18V176ZM1409.94 176V158.30h1.18V176ZM1411.20 176V158.30h1.18V176ZM1412.46 176V152.40h1.18V176ZM1413.72 176V140.60h1.18V176ZM1414.98 176V158.30h1.18V176ZM1416.24 176V146.50h1.18V176ZM1417.50 176V146.50h1.18V176ZM1418.76 176V158.30h1.18V176ZM1420.02 176V152.40h1.18V176ZM1421.28 176V164.20h1.18V176ZM1422.54 176V140.60h1.18V176ZM1423.80 176V152.40h1.18V176ZM1425.06 176V158.30h1.18V176ZM1426.32 176V164.20h1.18V176ZM1427.58 176V158.30h1.18V176ZM1428.84 176V164.20h1.18V176ZM1430.10 176V152.40h1.18V176ZM1431.36 176V158.30h1.18V176ZM1432.62 176V164.20h1.18V176ZM1433.88 176V146.50h1.18V176ZM1436.40 176V158.30h1.18V176ZM1437.67 176V146.50h1.18V176ZM1438.93 176V158.30h1.18V176ZM1440.19 176V158.30h1.18V176ZM1441.45 176V152.40h1.18V176ZM1442.71 176V158.30h1.18V176ZM1443.97 176V158.30h1.18V176ZM1445.23 176V158.30h1.18V176ZM1446.49 176V140.60h1.18V176ZM1447.75 176V140.60h1.18V176ZM1449.01 176V158.30h1.18V176ZM1450.27 176V140.60h1.18V176ZM1451.53 176V158.30h1.18V176ZM1452.79 176V152.40h1.18V176ZM1454.05 176V152.40h1.18V176ZM1455.31 176V158.30h1.18V176ZM1456.57 176V134.70h1.18V176ZM1457.83 176V158.30h1.18V176ZM1459.09 176V164.20h1.18V176ZM1460.35 176V146.50h1.18V176ZM1461.61 176V158.30h1.18V176ZM1462.87 176V158.30h1.18V176ZM1465.39 176V146.50h1.18V176ZM1466.65 176V146.50h1.18V176ZM1467.92 176V146.50h1.18V176ZM1469.18 176V140.60h1.18V176ZM1470.44 176V134.70h1.18V176ZM1471.70 176V152.40h1.18V176ZM1472.96 176V140.60h1.18V176ZM1474.22 176V158.30h1.18V176ZM1475.48 176V158.30h1.18V176ZM1476.74 176V140.60h1.18V176ZM1478.00 176V152.40h1.18V176ZM1479.26 176V164.20h1.18V176ZM1480.52 176V152.40h1.18V176ZM1481.78 176V158.30h1.18V176ZM1483.04 176V158.30h1.18V176ZM1484.30 176V152.40h1.18V176ZM1485.56 176V158.30h1.18V176ZM1486.82 176V164.20h1.18V176ZM1488.08 176V164.20h1.18V176ZM1489.34 176V134.70h1.18V176ZM1490.60 176V164.20h1.18V176ZM1491.86 176V152.40h1.18V176ZM1493.12 176V152.40h1.18V176ZM1494.38 176V152.40h1.18V176ZM1495.64 176V164.20h1.18V176ZM1496.90 176V158.30h1.18V176ZM1498.17 176V158.30h1.18V176ZM1499.43 176V152.40h1.18V176ZM1500.69 176V164.20h1.18V176ZM1501.95 176V164.20h1.18V176ZM1503.21 176V152.40h1.18V176ZM1504.47 176V146.50h1.18V176ZM1505.73 176V158.30h1.18V176ZM1506.99 176V164.20h1.18V176ZM1508.25 176V152.40h1.18V176ZM1509.51 176V158.30h1.18V176ZM1510.77 176V152.40h1.18V176ZM1512.03 176V164.20h1.18V176ZM1513.29 176V158.30h1.18V176ZM1514.55 176V158.30h1.18V176ZM1515.81 176V164.20h1.18V176ZM1517.07 176V158.30h1.18V176ZM1518.33 176V158.30h1.18V176ZM1519.59 176V158.30h1.18V176ZM1520.85 176V158.30h1.18V176ZM1522.11 176V164.20h1.18V176ZM1523.37 176V158.30h1.18V176ZM1524.63 176V158.30h1.18V176ZM1525.89 176V158.30h1.18V176ZM1527.15 176V146.50h1.18V176ZM1528.42 176V164.20h1.18V176ZM1529.68 176V164.20h1.18V176ZM1530.94 176V152.40h1.18V176ZM1532.20 176V152.40h1.18V176ZM1533.46 176V128.80h1.18V176ZM1534.72 176V146.50h1.18V176ZM1535.98 176V158.30h1.18V176ZM1537.24 176V146.50h1.18V176ZM1538.50 176V158.30h1.18V176ZM1539.76 176V164.20h1.18V176ZM1541.02 176V128.80h1.18V176ZM1542.28 176V152.40h1.18V176ZM1543.54 176V152.40h1.18V176ZM1544.80 176V152.40h1.18V176ZM1546.06 176V140.60h1.18V176ZM1547.32 176V158.30h1.18V176ZM1548.58 176V146.50h1.18V176ZM1549.84 176V164.20h1.18V176ZM1551.10 176V164.20h1.18V176ZM1552.36 176V140.60h1.18V176ZM1553.62 176V140.60h1.18V176ZM1554.88 176V152.40h1.18V176ZM1556.14 176V152.40h1.18V176ZM1557.40 176V152.40h1.18V176ZM1558.67 176V158.30h1.18V176ZM1559.93 176V140.60h1.18V176ZM1561.19 176V152.40h1.18V176ZM1562.45 176V152.40h1.18V176ZM1563.71 176V152.40h1.18V176ZM1564.97 176V146.50h1.18V176ZM1566.23 176V152.40h1.18V176ZM1567.49 176V152.40h1.18V176ZM1568.75 176V164.20h1.18V176ZM1570.01 176V152.40h1.18V176ZM1571.27 176V134.70h1.18V176ZM1572.53 176V158.30h1.18V176ZM1573.79 176V158.30h1.18V176ZM1575.05 176V146.50h1.18V176ZM1576.31 176V121.72h1.18V176ZM1577.57 176V152.40h1.18V176ZM1578.83 176V164.20h1.18V176ZM1580.09 176V152.40h1.18V176ZM1581.35 176V164.20h1.18V176ZM1582.61 176V158.30h1.18V176ZM1583.87 176V146.50h1.18V176ZM1585.13 176V158.30h1.18V176ZM1586.39 176V146.50h1.18V176ZM1587.65 176V128.80h1.18V176ZM1588.92 176V146.50h1.18V176ZM1590.18 176V146.50h1.18V176ZM1591.44 176V164.20h1.18V176ZM1592.70 176V158.30h1.18V176ZM1593.96 176V164.20h1.18V176ZM1595.22 176V158.30h1.18V176ZM1596.48 176V164.20h1.18V176ZM1597.74 176V158.30h1.18V176ZM1599.00 176V158.30h1.18V176ZM1600.26 176V164.20h1.18V176ZM1601.52 176V164.20h1.18V176ZM1602.78 176V164.20h1.18V176ZM1604.04 176V152.40h1.18V176ZM1605.30 176V158.30h1.18V176ZM1606.56 176V146.50h1.18V176ZM1607.82 176V146.50h1.18V176ZM1609.08 176V158.30h1.18V176ZM1610.34 176V152.40h1.18V176ZM1611.60 176V164.20h1.18V176ZM1612.86 176V128.80h1.18V176ZM1614.12 176V146.50h1.18V176ZM1615.38 176V158.30h1.18V176ZM1616.64 176V164.20h1.18V176ZM1617.90 176V152.40h1.18V176ZM1619.17 176V170.10h1.18V176ZM1620.43 176V164.20h1.18V176ZM1621.69 176V152.40h1.18V176ZM1622.95 176V158.30h1.18V176ZM1624.21 176V158.30h1.18V176ZM1625.47 176V146.50h1.18V176ZM1626.73 176V164.20h1.18V176ZM1627.99 176V152.40h1.18V176ZM1629.25 176V158.30h1.18V176ZM1630.51 176V158.30h1.18V176ZM1631.77 176V152.40h1.18V176ZM1633.03 176V158.30h1.18V176ZM1634.29 176V128.80h1.18V176ZM1635.55 176V158.30h1.18V176ZM1636.81 176V128.80h1.18V176ZM1638.07 176V158.30h1.18V176ZM1639.33 176V146.50h1.18V176ZM1640.59 176V164.20h1.18V176ZM1641.85 176V164.20h1.18V176ZM1643.11 176V152.40h1.18V176ZM1644.37 176V146.50h1.18V176ZM1645.63 176V164.20h1.18V176ZM1646.89 176V140.60h1.18V176ZM1648.15 176V158.30h1.18V176ZM1649.42 176V152.40h1.18V176ZM1650.68 176V152.40h1.18V176ZM1651.94 176V146.50h1.18V176ZM1653.20 176V98.12h1.18V176ZM1654.46 176V134.70h1.18V176ZM1655.72 176V152.40h1.18V176ZM1656.98 176V158.30h1.18V176ZM1658.24 176V164.20h1.18V176ZM1659.50 176V164.20h1.18V176ZM1660.76 176V164.20h1.18V176ZM1663.28 176V158.30h1.18V176ZM1664.54 176V164.20h1.18V176ZM1665.80 176V158.30h1.18V176ZM1667.06 176V134.70h1.18V176ZM1668.32 176V158.30h1.18V176ZM1669.58 176V158.30h1.18V176ZM1670.84 176V140.60h1.18V176ZM1672.10 176V152.40h1.18V176ZM1673.36 176V158.30h1.18V176ZM1674.62 176V158.30h1.18V176ZM1675.88 176V164.20h1.18V176ZM1678.40 176V158.30h1.18V176ZM1679.67 176V158.30h1.18V176ZM1680.93 176V152.40h1.18V176ZM1682.19 176V152.40h1.18V176ZM1683.45 176V152.40h1.18V176ZM1684.71 176V152.40h1.18V176ZM1685.97 176V164.20h1.18V176ZM1687.23 176V170.10h1.18V176ZM1688.49 176V158.30h1.18V176ZM1689.75 176V164.20h1.18V176ZM1691.01 176V158.30h1.18V176ZM1692.27 176V158.30h1.18V176ZM1693.53 176V164.20h1.18V176ZM1694.79 176V164.20h1.18V176ZM1696.05 176V158.30h1.18V176ZM1697.31 176V152.40h1.18V176ZM1698.57 176V158.30h1.18V176ZM1699.83 176V152.40h1.18V176ZM1701.09 176V158.30h1.18V176ZM1702.35 176V158.30h1.18V176ZM1703.61 176V152.40h1.18V176ZM1704.87 176V128.80h1.18V176ZM1706.13 176V158.30h1.18V176ZM1707.39 176V140.60h1.18V176ZM1708.65 176V140.60h1.18V176ZM1709.92 176V134.70h1.18V176ZM1711.18 176V158.30h1.18V176ZM1712.44 176V128.80h1.18V176ZM1713.70 176V152.40h1.18V176ZM1714.96 176V158.30h1.18V176ZM1716.22 176V158.30h1.18V176ZM1717.48 176V152.40h1.18V176ZM1718.74 176V158.30h1.18V176ZM1720.00 176V158.30h1.18V176ZM1721.26 176V146.50h1.18V176ZM1722.52 176V164.20h1.18V176ZM1723.78 176V164.20h1.18V176ZM1725.04 176V152.40h1.18V176ZM1726.30 176V152.40h1.18V176ZM1727.56 176V152.40h1.18V176ZM1728.82 176V170.10h1.18V176ZM1730.08 176V152.40h1.18V176ZM1731.34 176V158.30h1.18V176ZM1732.60 176V140.60h1.18V176ZM1733.86 176V164.20h1.18V176ZM1735.12 176V158.30h1.18V176ZM1736.38 176V158.30h1.18V176ZM1737.64 176V170.10h1.18V176ZM1738.90 176V158.30h1.18V176ZM1740.17 176V140.60h1.18V176ZM1741.43 176V158.30h1.18V176ZM1742.69 176V158.30h1.18V176ZM1743.95 176V152.40h1.18V176ZM1745.21 176V146.50h1.18V176ZM1746.47 176V146.50h1.18V176ZM1747.73 176V164.20h1.18V176ZM1748.99 176V158.30h1.18V176ZM1750.25 176V146.50h1.18V176ZM1751.51 176V164.20h1.18V176ZM1752.77 176V164.20h1.18V176ZM1754.03 176V152.40h1.18V176ZM1755.29 176V140.60h1.18V176ZM1756.55 176V164.20h1.18V176ZM1759.07 176V164.20h1.18V176ZM1760.33 176V164.20h1.18V176ZM1761.59 176V158.30h1.18V176ZM1762.85 176V152.40h1.18V176ZM1764.11 176V158.30h1.18V176ZM1765.37 176V164.20h1.18V176ZM1766.63 176V158.30h1.18V176ZM1767.89 176V164.20h1.18V176ZM1769.15 176V158.30h1.18V176ZM1770.42 176V158.30h1.18V176ZM1771.68 176V128.80h1.18V176ZM1772.94 176V146.50h1.18V176ZM1774.20 176V158.30h1.18V176ZM1775.46 176V164.20h1.18V176ZM1776.72 176V158.30h1.18V176ZM1777.98 176V164.20h1.18V176ZM1779.24 176V164.20h1.18V176ZM1780.50 176V158.30h1.18V176ZM1781.76 176V146.50h1.18V176ZM1783.02 176V158.30h1.18V176ZM1784.28 176V158.30h1.18V176ZM1785.54 176V164.20h1.18V176ZM1786.80 176V164.20h1.18V176ZM1788.06 176V152.40h1.18V176ZM1789.32 176V152.40h1.18V176ZM1790.58 176V140.60h1.18V176ZM1791.84 176V158.30h1.18V176ZM1793.10 176V146.50h1.18V176ZM1794.36 176V158.30h1.18V176ZM1795.62 176V158.30h1.18V176ZM1796.88 176V170.10h1.18V176ZM1798.14 176V164.20h1.18V176ZM1799.40 176V152.40h1.18V176ZM1800.67 176V146.50h1.18V176ZM1801.93 176V158.30h1.18V176ZM1803.19 176V152.40h1.18V176ZM1804.45 176V158.30h1.18V176ZM1805.71 176V158.30h1.18V176ZM1806.97 176V158.30h1.18V176ZM1808.23 176V146.50h1.18V176ZM1809.49 176V152.40h1.18V176ZM1810.75 176V158.30h1.18V176ZM1812.01 176V158.30h1.18V176ZM1814.53 176V152.40h1.18V176ZM1815.79 176V164.20h1.18V176ZM1817.05 176V140.60h1.18V176ZM1818.31 176V158.30h1.18V176ZM1820.83 176V146.50h1.18V176ZM1822.09 176V146.50h1.18V176ZM1823.35 176V158.30h1.18V176ZM1824.61 176V152.40h1.18V176ZM1825.87 176V164.20h1.18V176ZM1827.13 176V158.30h1.18V176ZM1828.39 176V170.10h1.18V176ZM1829.65 176V140.60h1.18V176ZM1830.92 176V164.20h1.18V176ZM1832.18 176V146.50h1.18V176ZM1833.44 176V158.30h1.18V176ZM1834.70 176V164.20h1.18V176ZM1835.96 176V158.30h1.18V176ZM1837.22 176V152.40h1.18V176ZM1838.48 176V152.40h1.18V176ZM1839.74 176V140.60h1.18V176ZM1841.00 176V158.30h1.18V176ZM1842.26 176V152.40h1.18V176ZM1843.52 176V164.20h1.18V176ZM1844.78 176V152.40h1.18V176Z" fill="#ECC52E"/><text x="1816" y="198.3" font-size="8.7" text-anchor="end" fill="#6E9FFF" dominant-baseline="central">Max</text><text x="1845.5" y="198.3" font-size="8.7" text-anchor="end" fill="#6E9FFF" dominant-baseline="central">Min</text><line x1="0" y1="206.5" x2="1851" y2="206.5" stroke="#24262b" stroke-width="1"/><line x1="0" y1="222.5" x2="1851" y2="222.5" stroke="#24262b" stroke-width="1"/><line x1="0" y1="238.5" x2="1851" y2="238.5" stroke="#24262b" stroke-width="1"/><rect x="7" y="213.4" width="9" height="2.2" rx="0.4" fill="#8cc585"/><text x="21.5" y="213.7" font-size="8.7" text-anchor="start" fill="#c4c4cf" stroke="#c4c4cf" stroke-width="0.22" font-weight="normal" dominant-baseline="central">org.apache.dubbo.metadata.MetadataService.getMetadataInfo</text><rect x="7" y="229.0" width="9" height="3" rx="0.4" fill="#f0cf48"/><text x="21.5" y="229.7" font-size="8.7" text-anchor="start" fill="#c4c4cf" stroke="#c4c4cf" stroke-width="0.22" font-weight="normal" dominant-baseline="central">org.apache.dubbo.samples.metrics.prometheus.api.DemoService.sayHello</text><text x="1816" y="213.8" font-size="8.7" text-anchor="end" fill="#c4c4cf" stroke="#c4c4cf" stroke-width="0.22" font-weight="normal" dominant-baseline="central">0 ms</text><text x="1845.5" y="213.8" font-size="8.7" text-anchor="end" fill="#c4c4cf" stroke="#c4c4cf" stroke-width="0.22" font-weight="normal" dominant-baseline="central">0 ms</text><text x="1816" y="229.8" font-size="8.7" text-anchor="end" fill="#c4c4cf" stroke="#c4c4cf" stroke-width="0.22" font-weight="normal" dominant-baseline="central">18.8 ms</text><text x="1845.5" y="229.8" font-size="8.7" text-anchor="end" fill="#c4c4cf" stroke="#c4c4cf" stroke-width="0.22" font-weight="normal" dominant-baseline="central">0 ms</text><rect x="-5.5" y="250.5" width="928" height="171" rx="1.5" fill="#181b1f" stroke="#26282d" stroke-width="1"/><text x="458.6" y="264" font-size="9.15" font-weight="bold" text-anchor="middle" fill="#ccccdc">provider_rt_avg</text><line x1="31" y1="304.5" x2="912" y2="304.5" stroke="#2c2e33" stroke-width="1"/><text x="27" y="303.1" font-size="8.5" text-anchor="end" fill="#c4c4cf" stroke="#c4c4cf" stroke-width="0.22" font-weight="normal" dominant-baseline="central">0.4 ms</text><line x1="31" y1="336.5" x2="912" y2="336.5" stroke="#2c2e33" stroke-width="1"/><text x="27" y="335.1" font-size="8.5" text-anchor="end" fill="#c4c4cf" stroke="#c4c4cf" stroke-width="0.22" font-weight="normal" dominant-baseline="central">0.2 ms</text><line x1="31" y1="369.5" x2="912" y2="369.5" stroke="#2c2e33" stroke-width="1"/><text x="27" y="368.1" font-size="8.5" text-anchor="end" fill="#c4c4cf" stroke="#c4c4cf" stroke-width="0.22" font-weight="normal" dominant-baseline="central">0 ms</text><line x1="75.5" y1="283" x2="75.5" y2="369" stroke="#2c2e33" stroke-width="1"/><text x="75.63999999999999" y="377.7" font-size="9" text-anchor="middle" fill="#c4c4cf" stroke="#c4c4cf" stroke-width="0.22" font-weight="normal" dominant-baseline="central">04/03 20:00</text><line x1="149.5" y1="283" x2="149.5" y2="369" stroke="#2c2e33" stroke-width="1"/><text x="148.80000000000007" y="377.7" font-size="9" text-anchor="middle" fill="#c4c4cf" stroke="#c4c4cf" stroke-width="0.22" font-weight="normal" dominant-baseline="central">04/04 00:00</text><line x1="222.5" y1="283" x2="222.5" y2="369" stroke="#2c2e33" stroke-width="1"/><text x="221.96000000000004" y="377.7" font-size="9" text-anchor="middle" fill="#c4c4cf" stroke="#c4c4cf" stroke-width="0.22" font-weight="normal" dominant-baseline="central">04/04 04:00</text><line x1="295.5" y1="283" x2="295.5" y2="369" stroke="#2c2e33" stroke-width="1"/><text x="295.12" y="377.7" font-size="9" text-anchor="middle" fill="#c4c4cf" stroke="#c4c4cf" stroke-width="0.22" font-weight="normal" dominant-baseline="central">04/04 08:00</text><line x1="368.5" y1="283" x2="368.5" y2="369" stroke="#2c2e33" stroke-width="1"/><text x="368.28" y="377.7" font-size="9" text-anchor="middle" fill="#c4c4cf" stroke="#c4c4cf" stroke-width="0.22" font-weight="normal" dominant-baseline="central">04/04 12:00</text><line x1="441.5" y1="283" x2="441.5" y2="369" stroke="#2c2e33" stroke-width="1"/><text x="441.44" y="377.7" font-size="9" text-anchor="middle" fill="#c4c4cf" stroke="#c4c4cf" stroke-width="0.22" font-weight="normal" dominant-baseline="central">04/04 16:00</text><line x1="514.5" y1="283" x2="514.5" y2="369" stroke="#2c2e33" stroke-width="1"/><text x="514.6" y="377.7" font-size="9" text-anchor="middle" fill="#c4c4cf" stroke="#c4c4cf" stroke-width="0.22" font-weight="normal" dominant-baseline="central">04/04 20:00</text><line x1="588.5" y1="283" x2="588.5" y2="369" stroke="#2c2e33" stroke-width="1"/><text x="587.76" y="377.7" font-size="9" text-anchor="middle" fill="#c4c4cf" stroke="#c4c4cf" stroke-width="0.22" font-weight="normal" dominant-baseline="central">04/05 00:00</text><line x1="661.5" y1="283" x2="661.5" y2="369" stroke="#2c2e33" stroke-width="1"/><text x="660.92" y="377.7" font-size="9" text-anchor="middle" fill="#c4c4cf" stroke="#c4c4cf" stroke-width="0.22" font-weight="normal" dominant-baseline="central">04/05 04:00</text><line x1="734.5" y1="283" x2="734.5" y2="369" stroke="#2c2e33" stroke-width="1"/><text x="734.0799999999999" y="377.7" font-size="9" text-anchor="middle" fill="#c4c4cf" stroke="#c4c4cf" stroke-width="0.22" font-weight="normal" dominant-baseline="central">04/05 08:00</text><line x1="807.5" y1="283" x2="807.5" y2="369" stroke="#2c2e33" stroke-width="1"/><text x="807.24" y="377.7" font-size="9" text-anchor="middle" fill="#c4c4cf" stroke="#c4c4cf" stroke-width="0.22" font-weight="normal" dominant-baseline="central">04/05 12:00</text><line x1="880.5" y1="283" x2="880.5" y2="369" stroke="#2c2e33" stroke-width="1"/><text x="880.4" y="377.7" font-size="9" text-anchor="middle" fill="#c4c4cf" stroke="#c4c4cf" stroke-width="0.22" font-weight="normal" dominant-baseline="central">04/05 16:00</text><path d="M32.66 369V348.63h1.20V369ZM34.19 369V355.08h1.20V369ZM35.71 369V349.59h1.20V369ZM37.23 369V354.75h1.20V369ZM38.76 369V350.86h1.20V369ZM40.28 369V346.00h1.20V369ZM41.81 369V353.42h1.20V369ZM43.33 369V357.11h1.20V369ZM44.86 369V343.16h1.20V369ZM46.38 369V355.87h1.20V369ZM47.90 369V356.82h1.20V369ZM49.43 369V352.95h1.20V369ZM50.95 369V351.17h1.20V369ZM52.48 369V352.13h1.20V369ZM54.00 369V353.34h1.20V369ZM55.53 369V351.48h1.20V369ZM57.05 369V355.41h1.20V369ZM58.57 369V359.76h1.20V369ZM60.10 369V352.19h1.20V369ZM61.62 369V355.62h1.20V369ZM63.15 369V352.03h1.20V369ZM64.67 369V347.15h1.20V369ZM66.20 369V356.91h1.20V369ZM67.72 369V351.65h1.20V369ZM69.24 369V353.52h1.20V369ZM70.77 369V353.48h1.20V369ZM72.29 369V356.82h1.20V369ZM73.82 369V344.34h1.20V369ZM75.34 369V354.90h1.20V369ZM76.87 369V350.03h1.20V369ZM78.39 369V352.85h1.20V369ZM79.91 369V354.48h1.20V369ZM81.44 369V355.51h1.20V369ZM82.96 369V348.28h1.20V369ZM84.49 369V358.22h1.20V369ZM86.01 369V358.73h1.20V369ZM87.54 369V342.56h1.20V369ZM89.06 369V351.72h1.20V369ZM90.58 369V332.60h1.20V369ZM92.11 369V349.25h1.20V369ZM93.63 369V343.50h1.20V369ZM95.16 369V352.86h1.20V369ZM96.68 369V346.84h1.20V369ZM98.21 369V355.68h1.20V369ZM99.73 369V354.13h1.20V369ZM101.25 369V360.20h1.20V369ZM102.78 369V349.22h1.20V369ZM104.30 369V349.36h1.20V369ZM105.83 369V356.22h1.20V369ZM107.35 369V354.79h1.20V369ZM108.88 369V349.14h1.20V369ZM110.40 369V350.22h1.20V369ZM111.92 369V356.16h1.20V369ZM113.45 369V347.93h1.20V369ZM114.97 369V349.27h1.20V369ZM116.50 369V358.78h1.20V369ZM118.02 369V345.53h1.20V369ZM119.55 369V346.42h1.20V369ZM121.07 369V352.92h1.20V369ZM122.59 369V343.71h1.20V369ZM124.12 369V343.79h1.20V369ZM125.64 369V348.85h1.20V369ZM127.17 369V353.88h1.20V369ZM128.69 369V357.28h1.20V369ZM130.21 369V346.22h1.20V369ZM131.74 369V347.11h1.20V369ZM133.26 369V348.40h1.20V369ZM134.79 369V359.84h1.20V369ZM136.31 369V356.77h1.20V369ZM137.84 369V356.57h1.20V369ZM139.36 369V356.03h1.20V369ZM142.41 369V349.19h1.20V369ZM143.93 369V357.18h1.20V369ZM145.46 369V348.82h1.20V369ZM146.98 369V347.85h1.20V369ZM148.51 369V353.08h1.20V369ZM150.03 369V358.28h1.20V369ZM151.55 369V347.18h1.20V369ZM153.08 369V360.41h1.20V369ZM154.60 369V347.22h1.20V369ZM156.13 369V350.59h1.20V369ZM157.65 369V349.43h1.20V369ZM159.18 369V360.49h1.20V369ZM160.70 369V359.50h1.20V369ZM162.22 369V344.35h1.20V369ZM163.75 369V352.75h1.20V369ZM165.27 369V354.29h1.20V369ZM166.80 369V357.01h1.20V369ZM168.32 369V352.10h1.20V369ZM169.85 369V351.02h1.20V369ZM171.37 369V348.78h1.20V369ZM172.89 369V347.60h1.20V369ZM174.42 369V345.67h1.20V369ZM177.47 369V333.14h1.20V369ZM178.99 369V347.22h1.20V369ZM180.52 369V348.54h1.20V369ZM182.04 369V360.19h1.20V369ZM183.56 369V350.15h1.20V369ZM185.09 369V358.71h1.20V369ZM186.61 369V354.63h1.20V369ZM188.14 369V349.14h1.20V369ZM189.66 369V343.29h1.20V369ZM191.19 369V349.68h1.20V369ZM192.71 369V358.07h1.20V369ZM194.23 369V347.56h1.20V369ZM195.76 369V352.60h1.20V369ZM197.28 369V358.55h1.20V369ZM198.81 369V350.24h1.20V369ZM200.33 369V346.11h1.20V369ZM201.86 369V349.36h1.20V369ZM203.38 369V352.74h1.20V369ZM204.90 369V354.00h1.20V369ZM206.43 369V353.71h1.20V369ZM207.95 369V354.30h1.20V369ZM209.48 369V349.38h1.20V369ZM211.00 369V352.82h1.20V369ZM212.53 369V347.08h1.20V369ZM214.05 369V343.55h1.20V369ZM215.57 369V355.70h1.20V369ZM217.10 369V359.96h1.20V369ZM218.62 369V352.87h1.20V369ZM220.15 369V357.46h1.20V369ZM221.67 369V352.45h1.20V369ZM223.20 369V354.08h1.20V369ZM224.72 369V345.13h1.20V369ZM226.24 369V360.28h1.20V369ZM227.77 369V358.41h1.20V369ZM229.29 369V347.20h1.20V369ZM230.82 369V354.88h1.20V369ZM232.34 369V361.01h1.20V369ZM233.86 369V356.13h1.20V369ZM235.39 369V345.02h1.20V369ZM236.91 369V351.84h1.20V369ZM238.44 369V334.41h1.20V369ZM239.96 369V348.49h1.20V369ZM241.49 369V349.65h1.20V369ZM243.01 369V348.26h1.20V369ZM244.53 369V353.23h1.20V369ZM246.06 369V342.51h1.20V369ZM247.58 369V352.51h1.20V369ZM249.11 369V343.46h1.20V369ZM250.63 369V347.52h1.20V369ZM252.16 369V346.69h1.20V369ZM253.68 369V343.67h1.20V369ZM255.20 369V353.14h1.20V369ZM256.73 369V352.17h1.20V369ZM258.25 369V357.55h1.20V369ZM261.30 369V342.34h1.20V369ZM262.83 369V347.95h1.20V369ZM264.35 369V314.00h1.20V369ZM265.87 369V353.44h1.20V369ZM267.40 369V349.58h1.20V369ZM268.92 369V345.72h1.20V369ZM270.45 369V347.44h1.20V369ZM271.97 369V343.59h1.20V369ZM273.50 369V353.54h1.20V369ZM275.02 369V356.63h1.20V369ZM276.54 369V352.69h1.20V369ZM278.07 369V352.91h1.20V369ZM279.59 369V360.59h1.20V369ZM281.12 369V350.67h1.20V369ZM282.64 369V351.30h1.20V369ZM284.17 369V353.83h1.20V369ZM287.21 369V350.34h1.20V369ZM288.74 369V351.66h1.20V369ZM290.26 369V348.15h1.20V369ZM291.79 369V353.12h1.20V369ZM293.31 369V354.03h1.20V369ZM294.84 369V353.70h1.20V369ZM296.36 369V350.92h1.20V369ZM297.88 369V348.54h1.20V369ZM299.41 369V351.51h1.20V369ZM300.93 369V342.45h1.20V369ZM302.46 369V351.96h1.20V369ZM305.51 369V353.25h1.20V369ZM307.03 369V336.38h1.20V369ZM308.55 369V354.47h1.20V369ZM310.08 369V344.63h1.20V369ZM311.60 369V356.67h1.20V369ZM313.13 369V352.96h1.20V369ZM314.65 369V349.59h1.20V369ZM316.18 369V349.20h1.20V369ZM317.70 369V356.75h1.20V369ZM319.22 369V344.74h1.20V369ZM320.75 369V350.76h1.20V369ZM322.27 369V345.65h1.20V369ZM323.80 369V353.83h1.20V369ZM325.32 369V351.23h1.20V369ZM326.84 369V353.46h1.20V369ZM328.37 369V347.05h1.20V369ZM329.89 369V351.54h1.20V369ZM331.42 369V345.50h1.20V369ZM332.94 369V357.43h1.20V369ZM334.47 369V349.70h1.20V369ZM335.99 369V352.03h1.20V369ZM337.51 369V349.29h1.20V369ZM339.04 369V348.87h1.20V369ZM340.56 369V340.33h1.20V369ZM342.09 369V350.91h1.20V369ZM343.61 369V352.42h1.20V369ZM345.14 369V345.32h1.20V369ZM346.66 369V348.22h1.20V369ZM348.18 369V351.19h1.20V369ZM349.71 369V344.81h1.20V369ZM351.23 369V352.27h1.20V369ZM352.76 369V346.18h1.20V369ZM354.28 369V357.66h1.20V369ZM355.81 369V350.74h1.20V369ZM357.33 369V356.31h1.20V369ZM358.85 369V357.48h1.20V369ZM360.38 369V357.17h1.20V369ZM361.90 369V357.38h1.20V369ZM363.43 369V349.36h1.20V369ZM364.95 369V351.01h1.20V369ZM366.48 369V358.99h1.20V369ZM368.00 369V351.04h1.20V369ZM369.52 369V345.31h1.20V369ZM371.05 369V349.57h1.20V369ZM372.57 369V353.63h1.20V369ZM374.10 369V353.36h1.20V369ZM375.62 369V354.74h1.20V369ZM377.15 369V352.58h1.20V369ZM378.67 369V350.71h1.20V369ZM380.19 369V345.60h1.20V369ZM381.72 369V347.66h1.20V369ZM383.24 369V347.21h1.20V369ZM386.29 369V351.62h1.20V369ZM387.82 369V351.40h1.20V369ZM389.34 369V344.54h1.20V369ZM390.86 369V343.34h1.20V369ZM392.39 369V358.63h1.20V369ZM393.91 369V334.72h1.20V369ZM395.44 369V338.96h1.20V369ZM396.96 369V349.93h1.20V369ZM398.49 369V349.35h1.20V369ZM400.01 369V350.85h1.20V369ZM401.53 369V347.78h1.20V369ZM403.06 369V348.83h1.20V369ZM404.58 369V340.64h1.20V369ZM406.11 369V356.81h1.20V369ZM407.63 369V358.29h1.20V369ZM409.16 369V351.74h1.20V369ZM410.68 369V355.27h1.20V369ZM412.20 369V337.37h1.20V369ZM413.73 369V359.65h1.20V369ZM415.25 369V352.37h1.20V369ZM416.78 369V347.90h1.20V369ZM418.30 369V347.54h1.20V369ZM419.83 369V347.15h1.20V369ZM421.35 369V335.85h1.20V369ZM422.87 369V344.95h1.20V369ZM425.92 369V343.38h1.20V369ZM427.45 369V355.68h1.20V369ZM428.97 369V356.73h1.20V369ZM430.49 369V349.28h1.20V369ZM432.02 369V350.94h1.20V369ZM433.54 369V348.56h1.20V369ZM435.07 369V356.01h1.20V369ZM436.59 369V350.81h1.20V369ZM438.12 369V358.20h1.20V369ZM439.64 369V355.09h1.20V369ZM441.16 369V341.86h1.20V369ZM442.69 369V348.31h1.20V369ZM444.21 369V345.81h1.20V369ZM445.74 369V352.76h1.20V369ZM447.26 369V343.85h1.20V369ZM450.31 369V345.34h1.20V369ZM451.83 369V346.46h1.20V369ZM453.36 369V340.07h1.20V369ZM454.88 369V357.91h1.20V369ZM456.41 369V357.34h1.20V369ZM457.93 369V349.81h1.20V369ZM459.46 369V360.43h1.20V369ZM460.98 369V349.69h1.20V369ZM462.50 369V353.28h1.20V369ZM464.03 369V349.45h1.20V369ZM465.55 369V358.05h1.20V369ZM467.08 369V358.93h1.20V369ZM468.60 369V354.48h1.20V369ZM470.13 369V352.60h1.20V369ZM471.65 369V356.62h1.20V369ZM473.17 369V355.07h1.20V369ZM474.70 369V349.20h1.20V369ZM476.22 369V356.29h1.20V369ZM477.75 369V350.75h1.20V369ZM479.27 369V360.94h1.20V369ZM480.80 369V349.69h1.20V369ZM482.32 369V353.51h1.20V369ZM483.84 369V331.17h1.20V369ZM485.37 369V344.43h1.20V369ZM486.89 369V349.58h1.20V369ZM488.42 369V356.89h1.20V369ZM489.94 369V355.97h1.20V369ZM491.47 369V347.97h1.20V369ZM492.99 369V348.99h1.20V369ZM494.51 369V361.35h1.20V369ZM496.04 369V342.95h1.20V369ZM497.56 369V291.50h1.20V369ZM499.09 369V344.89h1.20V369ZM500.61 369V353.93h1.20V369ZM502.14 369V359.64h1.20V369ZM503.66 369V349.64h1.20V369ZM505.18 369V351.75h1.20V369ZM506.71 369V344.27h1.20V369ZM508.23 369V351.75h1.20V369ZM509.76 369V358.94h1.20V369ZM511.28 369V353.71h1.20V369ZM512.81 369V359.01h1.20V369ZM514.33 369V339.97h1.20V369ZM515.85 369V355.55h1.20V369ZM517.38 369V350.77h1.20V369ZM518.90 369V351.19h1.20V369ZM520.43 369V353.27h1.20V369ZM521.95 369V351.28h1.20V369ZM523.47 369V356.72h1.20V369ZM525.00 369V348.08h1.20V369ZM526.52 369V354.20h1.20V369ZM528.05 369V347.52h1.20V369ZM529.57 369V335.23h1.20V369ZM531.10 369V336.66h1.20V369ZM532.62 369V349.98h1.20V369ZM534.14 369V347.80h1.20V369ZM535.67 369V352.18h1.20V369ZM537.19 369V344.19h1.20V369ZM538.72 369V351.71h1.20V369ZM540.24 369V351.49h1.20V369ZM541.77 369V353.23h1.20V369ZM543.29 369V345.49h1.20V369ZM544.81 369V352.91h1.20V369ZM546.34 369V357.48h1.20V369ZM547.86 369V354.66h1.20V369ZM549.39 369V346.06h1.20V369ZM550.91 369V352.18h1.20V369ZM552.44 369V350.03h1.20V369ZM553.96 369V354.38h1.20V369ZM555.48 369V347.51h1.20V369ZM557.01 369V355.58h1.20V369ZM558.53 369V349.04h1.20V369ZM560.06 369V353.72h1.20V369ZM561.58 369V345.68h1.20V369ZM563.11 369V357.21h1.20V369ZM564.63 369V347.36h1.20V369ZM566.15 369V351.04h1.20V369ZM567.68 369V332.37h1.20V369ZM569.20 369V353.58h1.20V369ZM570.73 369V345.84h1.20V369ZM572.25 369V348.43h1.20V369ZM573.78 369V344.81h1.20V369ZM575.30 369V359.72h1.20V369ZM576.82 369V349.22h1.20V369ZM578.35 369V357.61h1.20V369ZM579.87 369V344.22h1.20V369ZM581.40 369V356.63h1.20V369ZM582.92 369V353.33h1.20V369ZM584.45 369V347.46h1.20V369ZM585.97 369V354.76h1.20V369ZM587.49 369V349.19h1.20V369ZM589.02 369V349.78h1.20V369ZM590.54 369V350.64h1.20V369ZM592.07 369V346.83h1.20V369ZM593.59 369V336.49h1.20V369ZM595.12 369V344.54h1.20V369ZM596.64 369V360.75h1.20V369ZM598.16 369V349.69h1.20V369ZM599.69 369V351.55h1.20V369ZM601.21 369V360.45h1.20V369ZM602.74 369V352.65h1.20V369ZM604.26 369V347.73h1.20V369ZM605.79 369V354.28h1.20V369ZM607.31 369V345.18h1.20V369ZM608.83 369V350.23h1.20V369ZM610.36 369V356.67h1.20V369ZM611.88 369V344.98h1.20V369ZM613.41 369V353.79h1.20V369ZM614.93 369V350.17h1.20V369ZM616.46 369V347.82h1.20V369ZM617.98 369V346.69h1.20V369ZM619.50 369V356.71h1.20V369ZM621.03 369V353.75h1.20V369ZM622.55 369V351.83h1.20V369ZM624.08 369V359.13h1.20V369ZM625.60 369V355.49h1.20V369ZM627.12 369V345.87h1.20V369ZM628.65 369V358.74h1.20V369ZM630.17 369V345.21h1.20V369ZM631.70 369V343.41h1.20V369ZM633.22 369V358.28h1.20V369ZM634.75 369V352.64h1.20V369ZM636.27 369V340.58h1.20V369ZM637.79 369V348.45h1.20V369ZM639.32 369V343.37h1.20V369ZM640.84 369V350.73h1.20V369ZM642.37 369V344.76h1.20V369ZM643.89 369V350.43h1.20V369ZM645.42 369V344.48h1.20V369ZM646.94 369V348.75h1.20V369ZM648.46 369V347.08h1.20V369ZM649.99 369V358.28h1.20V369ZM651.51 369V353.23h1.20V369ZM653.04 369V349.52h1.20V369ZM654.56 369V355.24h1.20V369ZM656.09 369V352.12h1.20V369ZM657.61 369V348.71h1.20V369ZM659.13 369V349.31h1.20V369ZM660.66 369V357.96h1.20V369ZM662.18 369V352.01h1.20V369ZM663.71 369V354.45h1.20V369ZM665.23 369V353.90h1.20V369ZM666.76 369V355.90h1.20V369ZM668.28 369V359.37h1.20V369ZM669.80 369V344.48h1.20V369ZM671.33 369V356.55h1.20V369ZM672.85 369V345.85h1.20V369ZM674.38 369V355.45h1.20V369ZM675.90 369V353.38h1.20V369ZM677.43 369V344.86h1.20V369ZM678.95 369V356.10h1.20V369ZM680.47 369V343.83h1.20V369ZM682.00 369V333.03h1.20V369ZM683.52 369V347.60h1.20V369ZM685.05 369V351.33h1.20V369ZM686.57 369V354.54h1.20V369ZM688.10 369V353.40h1.20V369ZM689.62 369V351.49h1.20V369ZM691.14 369V349.02h1.20V369ZM692.67 369V345.57h1.20V369ZM694.19 369V341.69h1.20V369ZM695.72 369V353.39h1.20V369ZM697.24 369V341.87h1.20V369ZM698.77 369V340.88h1.20V369ZM700.29 369V347.43h1.20V369ZM701.81 369V349.47h1.20V369ZM703.34 369V349.09h1.20V369ZM704.86 369V348.46h1.20V369ZM706.39 369V355.15h1.20V369ZM707.91 369V351.79h1.20V369ZM709.44 369V346.48h1.20V369ZM710.96 369V343.06h1.20V369ZM712.48 369V352.54h1.20V369ZM714.01 369V346.62h1.20V369ZM715.53 369V351.10h1.20V369ZM717.06 369V350.03h1.20V369ZM718.58 369V336.20h1.20V369ZM720.10 369V343.46h1.20V369ZM721.63 369V348.06h1.20V369ZM723.15 369V350.38h1.20V369ZM724.68 369V354.09h1.20V369ZM726.20 369V342.77h1.20V369ZM727.73 369V358.97h1.20V369ZM729.25 369V356.07h1.20V369ZM730.77 369V353.81h1.20V369ZM732.30 369V352.63h1.20V369ZM733.82 369V351.82h1.20V369ZM735.35 369V343.15h1.20V369ZM736.87 369V335.41h1.20V369ZM738.40 369V358.30h1.20V369ZM739.92 369V356.63h1.20V369ZM741.44 369V333.40h1.20V369ZM742.97 369V351.71h1.20V369ZM744.49 369V355.70h1.20V369ZM746.02 369V349.36h1.20V369ZM747.54 369V348.49h1.20V369ZM749.07 369V345.94h1.20V369ZM750.59 369V355.43h1.20V369ZM752.11 369V349.01h1.20V369ZM753.64 369V348.47h1.20V369ZM755.16 369V350.68h1.20V369ZM756.69 369V358.14h1.20V369ZM758.21 369V350.17h1.20V369ZM759.74 369V351.23h1.20V369ZM761.26 369V346.68h1.20V369ZM762.78 369V350.75h1.20V369ZM764.31 369V355.26h1.20V369ZM765.83 369V351.05h1.20V369ZM767.36 369V351.28h1.20V369ZM768.88 369V355.80h1.20V369ZM770.41 369V348.56h1.20V369ZM771.93 369V359.49h1.20V369ZM773.45 369V357.34h1.20V369ZM774.98 369V344.45h1.20V369ZM776.50 369V348.61h1.20V369ZM778.03 369V356.56h1.20V369ZM779.55 369V356.66h1.20V369ZM781.08 369V348.93h1.20V369ZM782.60 369V347.90h1.20V369ZM784.12 369V352.72h1.20V369ZM785.65 369V356.35h1.20V369ZM787.17 369V346.16h1.20V369ZM788.70 369V348.52h1.20V369ZM790.22 369V347.75h1.20V369ZM791.75 369V348.48h1.20V369ZM793.27 369V344.21h1.20V369ZM794.79 369V353.88h1.20V369ZM796.32 369V346.28h1.20V369ZM797.84 369V358.20h1.20V369ZM799.37 369V355.94h1.20V369ZM800.89 369V350.79h1.20V369ZM802.42 369V358.31h1.20V369ZM803.94 369V349.98h1.20V369ZM805.46 369V349.28h1.20V369ZM806.99 369V344.33h1.20V369ZM808.51 369V356.29h1.20V369ZM810.04 369V348.28h1.20V369ZM811.56 369V346.55h1.20V369ZM813.09 369V354.52h1.20V369ZM814.61 369V350.93h1.20V369ZM816.13 369V343.36h1.20V369ZM817.66 369V314.00h1.20V369ZM819.18 369V346.66h1.20V369ZM820.71 369V343.40h1.20V369ZM822.23 369V344.80h1.20V369ZM823.75 369V349.15h1.20V369ZM825.28 369V354.58h1.20V369ZM826.80 369V344.95h1.20V369ZM828.33 369V335.98h1.20V369ZM829.85 369V348.14h1.20V369ZM831.38 369V359.92h1.20V369ZM832.90 369V354.27h1.20V369ZM834.42 369V351.48h1.20V369ZM835.95 369V356.50h1.20V369ZM837.47 369V346.33h1.20V369ZM839.00 369V354.56h1.20V369ZM840.52 369V348.00h1.20V369ZM842.05 369V345.93h1.20V369ZM843.57 369V356.22h1.20V369ZM845.09 369V348.90h1.20V369ZM846.62 369V347.78h1.20V369ZM848.14 369V348.02h1.20V369ZM849.67 369V337.63h1.20V369ZM851.19 369V351.14h1.20V369ZM852.72 369V344.48h1.20V369ZM854.24 369V347.03h1.20V369ZM855.76 369V358.45h1.20V369ZM857.29 369V355.23h1.20V369ZM858.81 369V347.59h1.20V369ZM860.34 369V354.56h1.20V369ZM861.86 369V348.13h1.20V369ZM863.39 369V345.27h1.20V369ZM864.91 369V355.99h1.20V369ZM866.43 369V356.90h1.20V369ZM867.96 369V349.52h1.20V369ZM869.48 369V345.31h1.20V369ZM871.01 369V348.26h1.20V369ZM872.53 369V351.62h1.20V369ZM874.06 369V356.53h1.20V369ZM875.58 369V338.34h1.20V369ZM877.10 369V349.91h1.20V369ZM878.63 369V343.70h1.20V369ZM880.15 369V349.45h1.20V369ZM881.68 369V348.77h1.20V369ZM883.20 369V350.03h1.20V369ZM884.73 369V355.65h1.20V369ZM886.25 369V360.48h1.20V369ZM887.77 369V343.08h1.20V369ZM889.30 369V349.45h1.20V369ZM890.82 369V353.82h1.20V369ZM892.35 369V349.32h1.20V369ZM893.87 369V356.99h1.20V369ZM895.40 369V359.72h1.20V369ZM896.92 369V356.77h1.20V369ZM898.44 369V347.55h1.20V369ZM899.97 369V344.12h1.20V369ZM901.49 369V346.32h1.20V369ZM903.02 369V352.27h1.20V369ZM904.54 369V347.63h1.20V369ZM906.07 369V352.80h1.20V369ZM907.59 369V356.79h1.20V369ZM909.11 369V339.30h1.20V369ZM910.64 369V337.03h1.20V369Z" fill="#ECC52E"/><line x1="0" y1="383.5" x2="919" y2="383.5" stroke="#24262b" stroke-width="1"/><line x1="0" y1="399.5" x2="919" y2="399.5" stroke="#24262b" stroke-width="1"/><line x1="0" y1="415.5" x2="919" y2="415.5" stroke="#24262b" stroke-width="1"/><rect x="7" y="390.09999999999997" width="9" height="2.6" rx="0.4" fill="#84c47c"/><text x="21.5" y="390.59999999999997" font-size="8.7" text-anchor="start" fill="#c4c4cf" stroke="#c4c4cf" stroke-width="0.22" font-weight="normal" dominant-baseline="central">org.apache.dubbo.metadata.MetadataService.getMetadataInfo</text><rect x="7" y="406.0" width="9" height="3" rx="0.4" fill="#f0cf48"/><text x="21.5" y="406.7" font-size="8.7" text-anchor="start" fill="#c4c4cf" stroke="#c4c4cf" stroke-width="0.22" font-weight="normal" dominant-baseline="central">org.apache.dubbo.samples.metrics.prometheus.api.DemoService.sayHello</text><rect x="928.5" y="250.5" width="927" height="171" rx="1.5" fill="#181b1f" stroke="#26282d" stroke-width="1"/><text x="1392" y="264" font-size="9.15" font-weight="bold" text-anchor="middle" fill="#ccccdc">provider_rt_min</text><line x1="961" y1="295.5" x2="1845" y2="295.5" stroke="#2c2e33" stroke-width="1"/><text x="957" y="294.1" font-size="8.5" text-anchor="end" fill="#c4c4cf" stroke="#c4c4cf" stroke-width="0.22" font-weight="normal" dominant-baseline="central">15 ms</text><line x1="961" y1="326.5" x2="1845" y2="326.5" stroke="#2c2e33" stroke-width="1"/><text x="957" y="325.1" font-size="8.5" text-anchor="end" fill="#c4c4cf" stroke="#c4c4cf" stroke-width="0.22" font-weight="normal" dominant-baseline="central">10 ms</text><line x1="961" y1="356.5" x2="1845" y2="356.5" stroke="#2c2e33" stroke-width="1"/><text x="957" y="355.1" font-size="8.5" text-anchor="end" fill="#c4c4cf" stroke="#c4c4cf" stroke-width="0.22" font-weight="normal" dominant-baseline="central">5 ms</text><line x1="961" y1="387.5" x2="1845" y2="387.5" stroke="#2c2e33" stroke-width="1"/><text x="957" y="386.1" font-size="8.5" text-anchor="end" fill="#c4c4cf" stroke="#c4c4cf" stroke-width="0.22" font-weight="normal" dominant-baseline="central">0 ms</text><line x1="1004.5" y1="283" x2="1004.5" y2="387" stroke="#2c2e33" stroke-width="1"/><text x="1003.9000000000001" y="396.3" font-size="9" text-anchor="middle" fill="#c4c4cf" stroke="#c4c4cf" stroke-width="0.22" font-weight="normal" dominant-baseline="central">04/03 20:00</text><line x1="1077.5" y1="283" x2="1077.5" y2="387" stroke="#2c2e33" stroke-width="1"/><text x="1077.5" y="396.3" font-size="9" text-anchor="middle" fill="#c4c4cf" stroke="#c4c4cf" stroke-width="0.22" font-weight="normal" dominant-baseline="central">04/04 00:00</text><line x1="1151.5" y1="283" x2="1151.5" y2="387" stroke="#2c2e33" stroke-width="1"/><text x="1151.1" y="396.3" font-size="9" text-anchor="middle" fill="#c4c4cf" stroke="#c4c4cf" stroke-width="0.22" font-weight="normal" dominant-baseline="central">04/04 04:00</text><line x1="1224.5" y1="283" x2="1224.5" y2="387" stroke="#2c2e33" stroke-width="1"/><text x="1224.7" y="396.3" font-size="9" text-anchor="middle" fill="#c4c4cf" stroke="#c4c4cf" stroke-width="0.22" font-weight="normal" dominant-baseline="central">04/04 08:00</text><line x1="1298.5" y1="283" x2="1298.5" y2="387" stroke="#2c2e33" stroke-width="1"/><text x="1298.3000000000002" y="396.3" font-size="9" text-anchor="middle" fill="#c4c4cf" stroke="#c4c4cf" stroke-width="0.22" font-weight="normal" dominant-baseline="central">04/04 12:00</text><line x1="1372.5" y1="283" x2="1372.5" y2="387" stroke="#2c2e33" stroke-width="1"/><text x="1371.9" y="396.3" font-size="9" text-anchor="middle" fill="#c4c4cf" stroke="#c4c4cf" stroke-width="0.22" font-weight="normal" dominant-baseline="central">04/04 16:00</text><line x1="1445.5" y1="283" x2="1445.5" y2="387" stroke="#2c2e33" stroke-width="1"/><text x="1445.5" y="396.3" font-size="9" text-anchor="middle" fill="#c4c4cf" stroke="#c4c4cf" stroke-width="0.22" font-weight="normal" dominant-baseline="central">04/04 20:00</text><line x1="1519.5" y1="283" x2="1519.5" y2="387" stroke="#2c2e33" stroke-width="1"/><text x="1519.1" y="396.3" font-size="9" text-anchor="middle" fill="#c4c4cf" stroke="#c4c4cf" stroke-width="0.22" font-weight="normal" dominant-baseline="central">04/05 00:00</text><line x1="1592.5" y1="283" x2="1592.5" y2="387" stroke="#2c2e33" stroke-width="1"/><text x="1592.7" y="396.3" font-size="9" text-anchor="middle" fill="#c4c4cf" stroke="#c4c4cf" stroke-width="0.22" font-weight="normal" dominant-baseline="central">04/05 04:00</text><line x1="1666.5" y1="283" x2="1666.5" y2="387" stroke="#2c2e33" stroke-width="1"/><text x="1666.3" y="396.3" font-size="9" text-anchor="middle" fill="#c4c4cf" stroke="#c4c4cf" stroke-width="0.22" font-weight="normal" dominant-baseline="central">04/05 08:00</text><line x1="1740.5" y1="283" x2="1740.5" y2="387" stroke="#2c2e33" stroke-width="1"/><text x="1739.9" y="396.3" font-size="9" text-anchor="middle" fill="#c4c4cf" stroke="#c4c4cf" stroke-width="0.22" font-weight="normal" dominant-baseline="central">04/05 12:00</text><line x1="1813.5" y1="283" x2="1813.5" y2="387" stroke="#2c2e33" stroke-width="1"/><text x="1813.5" y="396.3" font-size="9" text-anchor="middle" fill="#c4c4cf" stroke="#c4c4cf" stroke-width="0.22" font-weight="normal" dominant-baseline="central">04/05 16:00</text><line x1="963" y1="294.5" x2="1845" y2="294.5" stroke="#1e2c20" stroke-width="1"/><line x1="963" y1="295.5" x2="1845" y2="295.5" stroke="#66846a" stroke-width="1"/><line x1="963" y1="386.5" x2="1845" y2="386.5" stroke="#2a2614" stroke-width="1"/><line x1="963" y1="387.5" x2="1845" y2="387.5" stroke="#736842" stroke-width="1"/><rect x="937" y="408.8" width="9" height="2.4" rx="0.4" fill="#8ac884"/><text x="952" y="410" font-size="8.7" text-anchor="start" fill="#c4c4cf" stroke="#c4c4cf" stroke-width="0.22" font-weight="normal" dominant-baseline="central">org.apache.dubbo.metadata.MetadataService.getMetadataInfo</text><rect x="1202" y="408.8" width="9" height="2.4" rx="0.4" fill="#f0d870"/><text x="1216.5" y="410" font-size="8.7" text-anchor="start" fill="#c4c4cf" stroke="#c4c4cf" stroke-width="0.22" font-weight="normal" dominant-baseline="central">org.apache.dubbo.samples.metrics.prometheus.api.DemoService.sayHello</text><rect x="-5.5" y="427.5" width="928" height="146" rx="1.5" fill="#181b1f" stroke="#26282d" stroke-width="1"/><text x="458.6" y="441" font-size="9.15" font-weight="bold" text-anchor="middle" fill="#ccccdc">provider_rt_max</text><line x1="28.5" y1="469.5" x2="912" y2="469.5" stroke="#2c2e33" stroke-width="1"/><text x="24" y="468.1" font-size="8.5" text-anchor="end" fill="#c4c4cf" stroke="#c4c4cf" stroke-width="0.22" font-weight="normal" dominant-baseline="central">15 ms</text><line x1="28.5" y1="501.5" x2="912" y2="501.5" stroke="#2c2e33" stroke-width="1"/><text x="24" y="500.1" font-size="8.5" text-anchor="end" fill="#c4c4cf" stroke="#c4c4cf" stroke-width="0.22" font-weight="normal" dominant-baseline="central">14 ms</text><line x1="28.5" y1="533.5" x2="912" y2="533.5" stroke="#2c2e33" stroke-width="1"/><text x="24" y="532.1" font-size="8.5" text-anchor="end" fill="#c4c4cf" stroke="#c4c4cf" stroke-width="0.22" font-weight="normal" dominant-baseline="central">13 ms</text><line x1="71.5" y1="460" x2="71.5" y2="543" stroke="#2c2e33" stroke-width="1"/><text x="71.58000000000004" y="548" font-size="9" text-anchor="middle" fill="#c4c4cf" stroke="#c4c4cf" stroke-width="0.22" font-weight="normal" dominant-baseline="central">04/03 20:00</text><line x1="145.5" y1="460" x2="145.5" y2="543" stroke="#2c2e33" stroke-width="1"/><text x="145.10000000000002" y="548" font-size="9" text-anchor="middle" fill="#c4c4cf" stroke="#c4c4cf" stroke-width="0.22" font-weight="normal" dominant-baseline="central">04/04 00:00</text><line x1="218.5" y1="460" x2="218.5" y2="543" stroke="#2c2e33" stroke-width="1"/><text x="218.62" y="548" font-size="9" text-anchor="middle" fill="#c4c4cf" stroke="#c4c4cf" stroke-width="0.22" font-weight="normal" dominant-baseline="central">04/04 04:00</text><line x1="292.5" y1="460" x2="292.5" y2="543" stroke="#2c2e33" stroke-width="1"/><text x="292.14" y="548" font-size="9" text-anchor="middle" fill="#c4c4cf" stroke="#c4c4cf" stroke-width="0.22" font-weight="normal" dominant-baseline="central">04/04 08:00</text><line x1="365.5" y1="460" x2="365.5" y2="543" stroke="#2c2e33" stroke-width="1"/><text x="365.65999999999997" y="548" font-size="9" text-anchor="middle" fill="#c4c4cf" stroke="#c4c4cf" stroke-width="0.22" font-weight="normal" dominant-baseline="central">04/04 12:00</text><line x1="439.5" y1="460" x2="439.5" y2="543" stroke="#2c2e33" stroke-width="1"/><text x="439.17999999999995" y="548" font-size="9" text-anchor="middle" fill="#c4c4cf" stroke="#c4c4cf" stroke-width="0.22" font-weight="normal" dominant-baseline="central">04/04 16:00</text><line x1="512.5" y1="460" x2="512.5" y2="543" stroke="#2c2e33" stroke-width="1"/><text x="512.7" y="548" font-size="9" text-anchor="middle" fill="#c4c4cf" stroke="#c4c4cf" stroke-width="0.22" font-weight="normal" dominant-baseline="central">04/04 20:00</text><line x1="586.5" y1="460" x2="586.5" y2="543" stroke="#2c2e33" stroke-width="1"/><text x="586.22" y="548" font-size="9" text-anchor="middle" fill="#c4c4cf" stroke="#c4c4cf" stroke-width="0.22" font-weight="normal" dominant-baseline="central">04/05 00:00</text><line x1="659.5" y1="460" x2="659.5" y2="543" stroke="#2c2e33" stroke-width="1"/><text x="659.74" y="548" font-size="9" text-anchor="middle" fill="#c4c4cf" stroke="#c4c4cf" stroke-width="0.22" font-weight="normal" dominant-baseline="central">04/05 04:00</text><line x1="733.5" y1="460" x2="733.5" y2="543" stroke="#2c2e33" stroke-width="1"/><text x="733.26" y="548" font-size="9" text-anchor="middle" fill="#c4c4cf" stroke="#c4c4cf" stroke-width="0.22" font-weight="normal" dominant-baseline="central">04/05 08:00</text><line x1="807.5" y1="460" x2="807.5" y2="543" stroke="#2c2e33" stroke-width="1"/><text x="806.78" y="548" font-size="9" text-anchor="middle" fill="#c4c4cf" stroke="#c4c4cf" stroke-width="0.22" font-weight="normal" dominant-baseline="central">04/05 12:00</text><line x1="880.5" y1="460" x2="880.5" y2="543" stroke="#2c2e33" stroke-width="1"/><text x="880.3" y="548" font-size="9" text-anchor="middle" fill="#c4c4cf" stroke="#c4c4cf" stroke-width="0.22" font-weight="normal" dominant-baseline="central">04/05 16:00</text><line x1="30" y1="468.5" x2="912" y2="468.5" stroke="#1e2c20" stroke-width="1"/><line x1="30" y1="469.5" x2="912" y2="469.5" stroke="#66846a" stroke-width="1"/><line x1="30" y1="532.5" x2="912" y2="532.5" stroke="#2a2614" stroke-width="1"/><line x1="30" y1="533.5" x2="912" y2="533.5" stroke="#736842" stroke-width="1"/><rect x="3.6" y="560.1999999999999" width="9" height="2.4" rx="0.4" fill="#8ac884"/><text x="18.6" y="561.4" font-size="8.7" text-anchor="start" fill="#c4c4cf" stroke="#c4c4cf" stroke-width="0.22" font-weight="normal" dominant-baseline="central">org.apache.dubbo.metadata.MetadataService.getMetadataInfo</text><rect x="269" y="560.1999999999999" width="9" height="2.4" rx="0.4" fill="#f0d870"/><text x="283.5" y="561.4" font-size="8.7" text-anchor="start" fill="#c4c4cf" stroke="#c4c4cf" stroke-width="0.22" font-weight="normal" dominant-baseline="central">org.apache.dubbo.samples.metrics.prometheus.api.DemoService.sayHello</text><rect x="928.5" y="427.5" width="927" height="171" rx="1.5" fill="#181b1f" stroke="#26282d" stroke-width="1"/><text x="1392" y="441" font-size="9.15" font-weight="bold" text-anchor="middle" fill="#ccccdc">provider_rt_last</text><line x1="956" y1="472.5" x2="1845" y2="472.5" stroke="#2c2e33" stroke-width="1"/><text x="949" y="471.1" font-size="8.5" text-anchor="end" fill="#c4c4cf" stroke="#c4c4cf" stroke-width="0.22" font-weight="normal" dominant-baseline="central">15 s</text><line x1="956" y1="503.5" x2="1845" y2="503.5" stroke="#2c2e33" stroke-width="1"/><text x="949" y="502.1" font-size="8.5" text-anchor="end" fill="#c4c4cf" stroke="#c4c4cf" stroke-width="0.22" font-weight="normal" dominant-baseline="central">10 s</text><line x1="956" y1="533.5" x2="1845" y2="533.5" stroke="#2c2e33" stroke-width="1"/><text x="949" y="532.1" font-size="8.5" text-anchor="end" fill="#c4c4cf" stroke="#c4c4cf" stroke-width="0.22" font-weight="normal" dominant-baseline="central">5 s</text><line x1="956" y1="563.5" x2="1845" y2="563.5" stroke="#2c2e33" stroke-width="1"/><text x="949" y="562.1" font-size="8.5" text-anchor="end" fill="#c4c4cf" stroke="#c4c4cf" stroke-width="0.22" font-weight="normal" dominant-baseline="central">0 s</text><line x1="998.5" y1="460" x2="998.5" y2="563" stroke="#2c2e33" stroke-width="1"/><text x="998.5200000000001" y="573.3" font-size="9" text-anchor="middle" fill="#c4c4cf" stroke="#c4c4cf" stroke-width="0.22" font-weight="normal" dominant-baseline="central">04/03 20:00</text><line x1="1072.5" y1="460" x2="1072.5" y2="563" stroke="#2c2e33" stroke-width="1"/><text x="1072.6000000000001" y="573.3" font-size="9" text-anchor="middle" fill="#c4c4cf" stroke="#c4c4cf" stroke-width="0.22" font-weight="normal" dominant-baseline="central">04/04 00:00</text><line x1="1146.5" y1="460" x2="1146.5" y2="563" stroke="#2c2e33" stroke-width="1"/><text x="1146.68" y="573.3" font-size="9" text-anchor="middle" fill="#c4c4cf" stroke="#c4c4cf" stroke-width="0.22" font-weight="normal" dominant-baseline="central">04/04 04:00</text><line x1="1221.5" y1="460" x2="1221.5" y2="563" stroke="#2c2e33" stroke-width="1"/><text x="1220.7600000000002" y="573.3" font-size="9" text-anchor="middle" fill="#c4c4cf" stroke="#c4c4cf" stroke-width="0.22" font-weight="normal" dominant-baseline="central">04/04 08:00</text><line x1="1295.5" y1="460" x2="1295.5" y2="563" stroke="#2c2e33" stroke-width="1"/><text x="1294.8400000000001" y="573.3" font-size="9" text-anchor="middle" fill="#c4c4cf" stroke="#c4c4cf" stroke-width="0.22" font-weight="normal" dominant-baseline="central">04/04 12:00</text><line x1="1369.5" y1="460" x2="1369.5" y2="563" stroke="#2c2e33" stroke-width="1"/><text x="1368.92" y="573.3" font-size="9" text-anchor="middle" fill="#c4c4cf" stroke="#c4c4cf" stroke-width="0.22" font-weight="normal" dominant-baseline="central">04/04 16:00</text><line x1="1443.5" y1="460" x2="1443.5" y2="563" stroke="#2c2e33" stroke-width="1"/><text x="1443.0" y="573.3" font-size="9" text-anchor="middle" fill="#c4c4cf" stroke="#c4c4cf" stroke-width="0.22" font-weight="normal" dominant-baseline="central">04/04 20:00</text><line x1="1517.5" y1="460" x2="1517.5" y2="563" stroke="#2c2e33" stroke-width="1"/><text x="1517.0800000000002" y="573.3" font-size="9" text-anchor="middle" fill="#c4c4cf" stroke="#c4c4cf" stroke-width="0.22" font-weight="normal" dominant-baseline="central">04/05 00:00</text><line x1="1591.5" y1="460" x2="1591.5" y2="563" stroke="#2c2e33" stroke-width="1"/><text x="1591.16" y="573.3" font-size="9" text-anchor="middle" fill="#c4c4cf" stroke="#c4c4cf" stroke-width="0.22" font-weight="normal" dominant-baseline="central">04/05 04:00</text><line x1="1665.5" y1="460" x2="1665.5" y2="563" stroke="#2c2e33" stroke-width="1"/><text x="1665.24" y="573.3" font-size="9" text-anchor="middle" fill="#c4c4cf" stroke="#c4c4cf" stroke-width="0.22" font-weight="normal" dominant-baseline="central">04/05 08:00</text><line x1="1739.5" y1="460" x2="1739.5" y2="563" stroke="#2c2e33" stroke-width="1"/><text x="1739.3200000000002" y="573.3" font-size="9" text-anchor="middle" fill="#c4c4cf" stroke="#c4c4cf" stroke-width="0.22" font-weight="normal" dominant-baseline="central">04/05 12:00</text><line x1="1813.5" y1="460" x2="1813.5" y2="563" stroke="#2c2e33" stroke-width="1"/><text x="1813.4" y="573.3" font-size="9" text-anchor="middle" fill="#c4c4cf" stroke="#c4c4cf" stroke-width="0.22" font-weight="normal" dominant-baseline="central">04/05 16:00</text><rect x="956" y="472" width="889" height="91.5" fill="#7DC173"/><path d="M957.54 472V563.5M959.08 472V563.5M960.62 472V563.5M962.16 472V563.5M963.70 472V563.5M965.24 472V563.5M966.79 472V563.5M968.33 472V563.5M969.87 472V563.5M971.41 472V563.5M972.95 472V563.5M974.49 472V563.5M976.03 472V563.5M977.57 472V563.5M979.11 472V563.5M980.65 472V563.5M982.19 472V563.5M983.73 472V563.5M985.27 472V563.5M986.81 472V563.5M988.36 472V563.5M989.90 472V563.5M991.44 472V563.5M992.98 472V563.5M994.52 472V563.5M996.06 472V563.5M997.60 472V563.5M999.14 472V563.5M1000.68 472V563.5M1002.22 472V563.5M1003.76 472V563.5M1005.30 472V563.5M1006.84 472V563.5M1008.38 472V563.5M1009.93 472V563.5M1011.47 472V563.5M1013.01 472V563.5M1014.55 472V563.5M1016.09 472V563.5M1017.63 472V563.5M1019.17 472V563.5M1020.71 472V563.5M1022.25 472V563.5M1023.79 472V563.5M1025.33 472V563.5M1026.87 472V563.5M1028.41 472V563.5M1029.95 472V563.5M1031.50 472V563.5M1033.04 472V563.5M1034.58 472V563.5M1036.12 472V563.5M1037.66 472V563.5M1039.20 472V563.5M1040.74 472V563.5M1042.28 472V563.5M1043.82 472V563.5M1045.36 472V563.5M1046.90 472V563.5M1048.44 472V563.5M1049.98 472V563.5M1051.53 472V563.5M1053.07 472V563.5M1054.61 472V563.5M1056.15 472V563.5M1057.69 472V563.5M1059.23 472V563.5M1060.77 472V563.5M1062.31 472V563.5M1063.85 472V563.5M1065.39 472V563.5M1066.93 472V563.5M1068.47 472V563.5M1070.01 472V563.5M1071.55 472V563.5M1073.10 472V563.5M1074.64 472V563.5M1076.18 472V563.5M1077.72 472V563.5M1079.26 472V563.5M1080.80 472V563.5M1082.34 472V563.5M1083.88 472V563.5M1085.42 472V563.5M1086.96 472V563.5M1088.50 472V563.5M1090.04 472V563.5M1091.58 472V563.5M1093.12 472V563.5M1094.67 472V563.5M1096.21 472V563.5M1097.75 472V563.5M1099.29 472V563.5M1100.83 472V563.5M1102.37 472V563.5M1103.91 472V563.5M1105.45 472V563.5M1106.99 472V563.5M1108.53 472V563.5M1110.07 472V563.5M1111.61 472V563.5M1113.15 472V563.5M1114.69 472V563.5M1116.24 472V563.5M1117.78 472V563.5M1119.32 472V563.5M1120.86 472V563.5M1122.40 472V563.5M1123.94 472V563.5M1125.48 472V563.5M1127.02 472V563.5M1128.56 472V563.5M1130.10 472V563.5M1131.64 472V563.5M1133.18 472V563.5M1134.72 472V563.5M1136.27 472V563.5M1137.81 472V563.5M1139.35 472V563.5M1140.89 472V563.5M1142.43 472V563.5M1143.97 472V563.5M1145.51 472V563.5M1147.05 472V563.5M1148.59 472V563.5M1150.13 472V563.5M1151.67 472V563.5M1153.21 472V563.5M1154.75 472V563.5M1156.29 472V563.5M1157.84 472V563.5M1159.38 472V563.5M1160.92 472V563.5M1162.46 472V563.5M1164.00 472V563.5M1165.54 472V563.5M1167.08 472V563.5M1168.62 472V563.5M1170.16 472V563.5M1171.70 472V563.5M1173.24 472V563.5M1174.78 472V563.5M1176.32 472V563.5M1177.86 472V563.5M1179.41 472V563.5M1180.95 472V563.5M1182.49 472V563.5M1184.03 472V563.5M1185.57 472V563.5M1187.11 472V563.5M1188.65 472V563.5M1190.19 472V563.5M1191.73 472V563.5M1193.27 472V563.5M1194.81 472V563.5M1196.35 472V563.5M1197.89 472V563.5M1199.44 472V563.5M1200.98 472V563.5M1202.52 472V563.5M1204.06 472V563.5M1205.60 472V563.5M1207.14 472V563.5M1208.68 472V563.5M1210.22 472V563.5M1211.76 472V563.5M1213.30 472V563.5M1214.84 472V563.5M1216.38 472V563.5M1217.92 472V563.5M1219.46 472V563.5M1221.01 472V563.5M1222.55 472V563.5M1224.09 472V563.5M1225.63 472V563.5M1227.17 472V563.5M1228.71 472V563.5M1230.25 472V563.5M1231.79 472V563.5M1233.33 472V563.5M1234.87 472V563.5M1236.41 472V563.5M1237.95 472V563.5M1239.49 472V563.5M1241.03 472V563.5M1242.58 472V563.5M1244.12 472V563.5M1245.66 472V563.5M1247.20 472V563.5M1248.74 472V563.5M1250.28 472V563.5M1251.82 472V563.5M1253.36 472V563.5M1254.90 472V563.5M1256.44 472V563.5M1257.98 472V563.5M1259.52 472V563.5M1261.06 472V563.5M1262.60 472V563.5M1264.15 472V563.5M1265.69 472V563.5M1267.23 472V563.5M1268.77 472V563.5M1270.31 472V563.5M1271.85 472V563.5M1273.39 472V563.5M1274.93 472V563.5M1276.47 472V563.5M1278.01 472V563.5M1279.55 472V563.5M1281.09 472V563.5M1282.63 472V563.5M1284.18 472V563.5M1285.72 472V563.5M1287.26 472V563.5M1288.80 472V563.5M1290.34 472V563.5M1291.88 472V563.5M1293.42 472V563.5M1294.96 472V563.5M1296.50 472V563.5M1298.04 472V563.5M1299.58 472V563.5M1301.12 472V563.5M1302.66 472V563.5M1304.20 472V563.5M1305.75 472V563.5M1307.29 472V563.5M1308.83 472V563.5M1310.37 472V563.5M1311.91 472V563.5M1313.45 472V563.5M1314.99 472V563.5M1316.53 472V563.5M1318.07 472V563.5M1319.61 472V563.5M1321.15 472V563.5M1322.69 472V563.5M1324.23 472V563.5M1325.77 472V563.5M1327.32 472V563.5M1328.86 472V563.5M1330.40 472V563.5M1331.94 472V563.5M1333.48 472V563.5M1335.02 472V563.5M1336.56 472V563.5M1338.10 472V563.5M1339.64 472V563.5M1341.18 472V563.5M1342.72 472V563.5M1344.26 472V563.5M1345.80 472V563.5M1347.34 472V563.5M1348.89 472V563.5M1350.43 472V563.5M1351.97 472V563.5M1353.51 472V563.5M1355.05 472V563.5M1356.59 472V563.5M1358.13 472V563.5M1359.67 472V563.5M1361.21 472V563.5M1362.75 472V563.5M1364.29 472V563.5M1365.83 472V563.5M1367.37 472V563.5M1368.92 472V563.5M1370.46 472V563.5M1372.00 472V563.5M1373.54 472V563.5M1375.08 472V563.5M1376.62 472V563.5M1378.16 472V563.5M1379.70 472V563.5M1381.24 472V563.5M1382.78 472V563.5M1384.32 472V563.5M1385.86 472V563.5M1387.40 472V563.5M1388.94 472V563.5M1390.49 472V563.5M1392.03 472V563.5M1393.57 472V563.5M1395.11 472V563.5M1396.65 472V563.5M1398.19 472V563.5M1399.73 472V563.5M1401.27 472V563.5M1402.81 472V563.5M1404.35 472V563.5M1405.89 472V563.5M1407.43 472V563.5M1408.97 472V563.5M1410.51 472V563.5M1412.06 472V563.5M1413.60 472V563.5M1415.14 472V563.5M1416.68 472V563.5M1418.22 472V563.5M1419.76 472V563.5M1421.30 472V563.5M1422.84 472V563.5M1424.38 472V563.5M1425.92 472V563.5M1427.46 472V563.5M1429.00 472V563.5M1430.54 472V563.5M1432.08 472V563.5M1433.63 472V563.5M1435.17 472V563.5M1436.71 472V563.5M1438.25 472V563.5M1439.79 472V563.5M1441.33 472V563.5M1442.87 472V563.5M1444.41 472V563.5M1445.95 472V563.5M1447.49 472V563.5M1449.03 472V563.5M1450.57 472V563.5M1452.11 472V563.5M1453.66 472V563.5M1455.20 472V563.5M1456.74 472V563.5M1458.28 472V563.5M1459.82 472V563.5M1461.36 472V563.5M1462.90 472V563.5M1464.44 472V563.5M1465.98 472V563.5M1467.52 472V563.5M1469.06 472V563.5M1470.60 472V563.5M1472.14 472V563.5M1473.68 472V563.5M1475.23 472V563.5M1476.77 472V563.5M1478.31 472V563.5M1479.85 472V563.5M1481.39 472V563.5M1482.93 472V563.5M1484.47 472V563.5M1486.01 472V563.5M1487.55 472V563.5M1489.09 472V563.5M1490.63 472V563.5M1492.17 472V563.5M1493.71 472V563.5M1495.25 472V563.5M1496.80 472V563.5M1498.34 472V563.5M1499.88 472V563.5M1501.42 472V563.5M1502.96 472V563.5M1504.50 472V563.5M1506.04 472V563.5M1507.58 472V563.5M1509.12 472V563.5M1510.66 472V563.5M1512.20 472V563.5M1513.74 472V563.5M1515.28 472V563.5M1516.82 472V563.5M1518.37 472V563.5M1519.91 472V563.5M1521.45 472V563.5M1522.99 472V563.5M1524.53 472V563.5M1526.07 472V563.5M1527.61 472V563.5M1529.15 472V563.5M1530.69 472V563.5M1532.23 472V563.5M1533.77 472V563.5M1535.31 472V563.5M1536.85 472V563.5M1538.40 472V563.5M1539.94 472V563.5M1541.48 472V563.5M1543.02 472V563.5M1544.56 472V563.5M1546.10 472V563.5M1547.64 472V563.5M1549.18 472V563.5M1550.72 472V563.5M1552.26 472V563.5M1553.80 472V563.5M1555.34 472V563.5M1556.88 472V563.5M1558.42 472V563.5M1559.97 472V563.5M1561.51 472V563.5M1563.05 472V563.5M1564.59 472V563.5M1566.13 472V563.5M1567.67 472V563.5M1569.21 472V563.5M1570.75 472V563.5M1572.29 472V563.5M1573.83 472V563.5M1575.37 472V563.5M1576.91 472V563.5M1578.45 472V563.5M1579.99 472V563.5M1581.54 472V563.5M1583.08 472V563.5M1584.62 472V563.5M1586.16 472V563.5M1587.70 472V563.5M1589.24 472V563.5M1590.78 472V563.5M1592.32 472V563.5M1593.86 472V563.5M1595.40 472V563.5M1596.94 472V563.5M1598.48 472V563.5M1600.02 472V563.5M1601.56 472V563.5M1603.11 472V563.5M1604.65 472V563.5M1606.19 472V563.5M1607.73 472V563.5M1609.27 472V563.5M1610.81 472V563.5M1612.35 472V563.5M1613.89 472V563.5M1615.43 472V563.5M1616.97 472V563.5M1618.51 472V563.5M1620.05 472V563.5M1621.59 472V563.5M1623.14 472V563.5M1624.68 472V563.5M1626.22 472V563.5M1627.76 472V563.5M1629.30 472V563.5M1630.84 472V563.5M1632.38 472V563.5M1633.92 472V563.5M1635.46 472V563.5M1637.00 472V563.5M1638.54 472V563.5M1640.08 472V563.5M1641.62 472V563.5M1643.16 472V563.5M1644.71 472V563.5M1646.25 472V563.5M1647.79 472V563.5M1649.33 472V563.5M1650.87 472V563.5M1652.41 472V563.5M1653.95 472V563.5M1655.49 472V563.5M1657.03 472V563.5M1658.57 472V563.5M1660.11 472V563.5M1661.65 472V563.5M1663.19 472V563.5M1664.73 472V563.5M1666.28 472V563.5M1667.82 472V563.5M1669.36 472V563.5M1670.90 472V563.5M1672.44 472V563.5M1673.98 472V563.5M1675.52 472V563.5M1677.06 472V563.5M1678.60 472V563.5M1680.14 472V563.5M1681.68 472V563.5M1683.22 472V563.5M1684.76 472V563.5M1686.31 472V563.5M1687.85 472V563.5M1689.39 472V563.5M1690.93 472V563.5M1692.47 472V563.5M1694.01 472V563.5M1695.55 472V563.5M1697.09 472V563.5M1698.63 472V563.5M1700.17 472V563.5M1701.71 472V563.5M1703.25 472V563.5M1704.79 472V563.5M1706.33 472V563.5M1707.88 472V563.5M1709.42 472V563.5M1710.96 472V563.5M1712.50 472V563.5M1714.04 472V563.5M1715.58 472V563.5M1717.12 472V563.5M1718.66 472V563.5M1720.20 472V563.5M1721.74 472V563.5M1723.28 472V563.5M1724.82 472V563.5M1726.36 472V563.5M1727.90 472V563.5M1729.45 472V563.5M1730.99 472V563.5M1732.53 472V563.5M1734.07 472V563.5M1735.61 472V563.5M1737.15 472V563.5M1738.69 472V563.5M1740.23 472V563.5M1741.77 472V563.5M1743.31 472V563.5M1744.85 472V563.5M1746.39 472V563.5M1747.93 472V563.5M1749.47 472V563.5M1751.02 472V563.5M1752.56 472V563.5M1754.10 472V563.5M1755.64 472V563.5M1757.18 472V563.5M1758.72 472V563.5M1760.26 472V563.5M1761.80 472V563.5M1763.34 472V563.5M1764.88 472V563.5M1766.42 472V563.5M1767.96 472V563.5M1769.50 472V563.5M1771.05 472V563.5M1772.59 472V563.5M1774.13 472V563.5M1775.67 472V563.5M1777.21 472V563.5M1778.75 472V563.5M1780.29 472V563.5M1781.83 472V563.5M1783.37 472V563.5M1784.91 472V563.5M1786.45 472V563.5M1787.99 472V563.5M1789.53 472V563.5M1791.07 472V563.5M1792.62 472V563.5M1794.16 472V563.5M1795.70 472V563.5M1797.24 472V563.5M1798.78 472V563.5M1800.32 472V563.5M1801.86 472V563.5M1803.40 472V563.5M1804.94 472V563.5M1806.48 472V563.5M1808.02 472V563.5M1809.56 472V563.5M1811.10 472V563.5M1812.64 472V563.5M1814.19 472V563.5M1815.73 472V563.5M1817.27 472V563.5M1818.81 472V563.5M1820.35 472V563.5M1821.89 472V563.5M1823.43 472V563.5M1824.97 472V563.5M1826.51 472V563.5M1828.05 472V563.5M1829.59 472V563.5M1831.13 472V563.5M1832.67 472V563.5M1834.21 472V563.5M1835.76 472V563.5M1837.30 472V563.5M1838.84 472V563.5M1840.38 472V563.5M1841.92 472V563.5M1843.46 472V563.5" stroke="#64A55B" stroke-width="0.7" fill="none"/><path d="M958.00 558h1.1v5.5h-1.1ZM971.30 558h1.1v5.5h-1.1ZM972.83 558h1.1v5.5h-1.1ZM974.36 558h1.1v5.5h-1.1ZM978.00 558h1.1v5.5h-1.1ZM984.50 558h1.1v5.5h-1.1ZM995.50 558h1.1v5.5h-1.1ZM997.03 558h1.1v5.5h-1.1ZM998.56 558h1.1v5.5h-1.1ZM1000.09 558h1.1v5.5h-1.1ZM1005.10 558h1.1v5.5h-1.1ZM1006.63 558h1.1v5.5h-1.1ZM1008.16 558h1.1v5.5h-1.1ZM1009.69 558h1.1v5.5h-1.1ZM1011.22 558h1.1v5.5h-1.1ZM1012.75 558h1.1v5.5h-1.1ZM1031.70 558h1.1v5.5h-1.1ZM1048.60 558h1.1v5.5h-1.1ZM1057.80 558h1.1v5.5h-1.1ZM1066.80 558h1.1v5.5h-1.1ZM1083.70 558h1.1v5.5h-1.1ZM1085.23 558h1.1v5.5h-1.1ZM1086.76 558h1.1v5.5h-1.1ZM1094.10 558h1.1v5.5h-1.1ZM1095.63 558h1.1v5.5h-1.1ZM1097.16 558h1.1v5.5h-1.1ZM1104.20 558h1.1v5.5h-1.1ZM1105.73 558h1.1v5.5h-1.1ZM1107.26 558h1.1v5.5h-1.1ZM1113.90 558h1.1v5.5h-1.1ZM1115.43 558h1.1v5.5h-1.1ZM1116.96 558h1.1v5.5h-1.1ZM1157.50 558h1.1v5.5h-1.1ZM1174.40 558h1.1v5.5h-1.1ZM1179.20 558h1.1v5.5h-1.1ZM1180.73 558h1.1v5.5h-1.1ZM1182.26 558h1.1v5.5h-1.1ZM1183.79 558h1.1v5.5h-1.1ZM1188.90 558h1.1v5.5h-1.1ZM1194.20 558h1.1v5.5h-1.1ZM1199.70 558h1.1v5.5h-1.1ZM1201.23 558h1.1v5.5h-1.1ZM1202.76 558h1.1v5.5h-1.1ZM1207.70 558h1.1v5.5h-1.1ZM1217.90 558h1.1v5.5h-1.1ZM1244.50 558h1.1v5.5h-1.1ZM1254.60 558h1.1v5.5h-1.1ZM1256.13 558h1.1v5.5h-1.1ZM1257.66 558h1.1v5.5h-1.1ZM1288.00 558h1.1v5.5h-1.1ZM1289.53 558h1.1v5.5h-1.1ZM1291.06 558h1.1v5.5h-1.1ZM1292.59 558h1.1v5.5h-1.1ZM1300.10 558h1.1v5.5h-1.1ZM1308.50 558h1.1v5.5h-1.1ZM1310.03 558h1.1v5.5h-1.1ZM1321.80 558h1.1v5.5h-1.1ZM1323.33 558h1.1v5.5h-1.1ZM1324.86 558h1.1v5.5h-1.1ZM1326.39 558h1.1v5.5h-1.1ZM1344.80 558h1.1v5.5h-1.1ZM1378.70 558h1.1v5.5h-1.1ZM1401.83 558h1.1v5.5h-1.1ZM1407.95 558h1.1v5.5h-1.1ZM1409.48 558h1.1v5.5h-1.1ZM1411.01 558h1.1v5.5h-1.1ZM1414.06 558h1.1v5.5h-1.1ZM1420.17 558h1.1v5.5h-1.1ZM1425.80 558h1.1v5.5h-1.1ZM1451.96 558h1.1v5.5h-1.1ZM1453.49 558h1.1v5.5h-1.1ZM1462.96 558h1.1v5.5h-1.1ZM1464.49 558h1.1v5.5h-1.1ZM1473.96 558h1.1v5.5h-1.1ZM1480.07 558h1.1v5.5h-1.1ZM1486.19 558h1.1v5.5h-1.1ZM1487.72 558h1.1v5.5h-1.1ZM1489.25 558h1.1v5.5h-1.1ZM1493.52 558h1.1v5.5h-1.1ZM1495.05 558h1.1v5.5h-1.1ZM1496.58 558h1.1v5.5h-1.1ZM1511.86 558h1.1v5.5h-1.1ZM1530.20 558h1.1v5.5h-1.1ZM1531.73 558h1.1v5.5h-1.1ZM1533.26 558h1.1v5.5h-1.1ZM1553.91 558h1.1v5.5h-1.1ZM1563.20 558h1.1v5.5h-1.1ZM1564.73 558h1.1v5.5h-1.1ZM1566.26 558h1.1v5.5h-1.1ZM1568.09 558h1.1v5.5h-1.1ZM1571.76 558h1.1v5.5h-1.1ZM1577.39 558h1.1v5.5h-1.1ZM1582.76 558h1.1v5.5h-1.1ZM1584.29 558h1.1v5.5h-1.1ZM1585.82 558h1.1v5.5h-1.1ZM1592.54 558h1.1v5.5h-1.1ZM1602.32 558h1.1v5.5h-1.1ZM1603.85 558h1.1v5.5h-1.1ZM1624.33 558h1.1v5.5h-1.1ZM1629.22 558h1.1v5.5h-1.1ZM1637.78 558h1.1v5.5h-1.1ZM1647.56 558h1.1v5.5h-1.1ZM1649.09 558h1.1v5.5h-1.1ZM1650.62 558h1.1v5.5h-1.1ZM1652.15 558h1.1v5.5h-1.1ZM1656.60 558h1.1v5.5h-1.1ZM1663.45 558h1.1v5.5h-1.1ZM1664.98 558h1.1v5.5h-1.1ZM1666.51 558h1.1v5.5h-1.1ZM1668.04 558h1.1v5.5h-1.1ZM1669.57 558h1.1v5.5h-1.1ZM1671.10 558h1.1v5.5h-1.1ZM1672.63 558h1.1v5.5h-1.1ZM1674.16 558h1.1v5.5h-1.1ZM1702.08 558h1.1v5.5h-1.1ZM1709.90 558h1.1v5.5h-1.1ZM1711.43 558h1.1v5.5h-1.1ZM1712.96 558h1.1v5.5h-1.1ZM1719.68 558h1.1v5.5h-1.1ZM1721.21 558h1.1v5.5h-1.1ZM1722.74 558h1.1v5.5h-1.1ZM1727.02 558h1.1v5.5h-1.1ZM1734.35 558h1.1v5.5h-1.1ZM1735.88 558h1.1v5.5h-1.1ZM1746.58 558h1.1v5.5h-1.1ZM1751.96 558h1.1v5.5h-1.1ZM1757.58 558h1.1v5.5h-1.1ZM1778.36 558h1.1v5.5h-1.1ZM1779.89 558h1.1v5.5h-1.1ZM1781.42 558h1.1v5.5h-1.1ZM1793.52 558h1.1v5.5h-1.1ZM1801.59 558h1.1v5.5h-1.1ZM1803.12 558h1.1v5.5h-1.1ZM1804.65 558h1.1v5.5h-1.1ZM1806.18 558h1.1v5.5h-1.1ZM1807.71 558h1.1v5.5h-1.1ZM1830.93 558h1.1v5.5h-1.1ZM1832.46 558h1.1v5.5h-1.1ZM1833.99 558h1.1v5.5h-1.1ZM1835.52 558h1.1v5.5h-1.1ZM1837.05 558h1.1v5.5h-1.1Z" fill="#F2CC0C"/><rect x="937" y="585.8" width="9" height="2.4" rx="0.4" fill="#8ac884"/><text x="952" y="587" font-size="8.7" text-anchor="start" fill="#c4c4cf" stroke="#c4c4cf" stroke-width="0.22" font-weight="normal" dominant-baseline="central">org.apache.dubbo.metadata.MetadataService.getMetadataInfo</text><rect x="1202" y="585.8" width="9" height="2.4" rx="0.4" fill="#f0d870"/><text x="1216.5" y="587" font-size="8.7" text-anchor="start" fill="#c4c4cf" stroke="#c4c4cf" stroke-width="0.22" font-weight="normal" dominant-baseline="central">org.apache.dubbo.samples.metrics.prometheus.api.DemoService.sayHello</text><rect x="-5.5" y="579.5" width="928" height="241" rx="1.5" fill="#181b1f" stroke="#26282d" stroke-width="1"/><text x="458.6" y="593" font-size="9.15" font-weight="bold" text-anchor="middle" fill="#ccccdc">provider_rt_p95</text><line x1="37" y1="619.5" x2="912" y2="619.5" stroke="#2c2e33" stroke-width="1"/><text x="32" y="618.1" font-size="8.5" text-anchor="end" fill="#c4c4cf" stroke="#c4c4cf" stroke-width="0.22" font-weight="normal" dominant-baseline="central">1 ms</text><line x1="37" y1="641.5" x2="912" y2="641.5" stroke="#2c2e33" stroke-width="1"/><text x="32" y="640.1" font-size="8.5" text-anchor="end" fill="#c4c4cf" stroke="#c4c4cf" stroke-width="0.22" font-weight="normal" dominant-baseline="central">0.75 ms</text><line x1="37" y1="663.5" x2="912" y2="663.5" stroke="#2c2e33" stroke-width="1"/><text x="32" y="662.1" font-size="8.5" text-anchor="end" fill="#c4c4cf" stroke="#c4c4cf" stroke-width="0.22" font-weight="normal" dominant-baseline="central">0.5 ms</text><line x1="37" y1="684.5" x2="912" y2="684.5" stroke="#2c2e33" stroke-width="1"/><text x="32" y="683.1" font-size="8.5" text-anchor="end" fill="#c4c4cf" stroke="#c4c4cf" stroke-width="0.22" font-weight="normal" dominant-baseline="central">0.25 ms</text><line x1="37" y1="706.5" x2="912" y2="706.5" stroke="#2c2e33" stroke-width="1"/><text x="32" y="705.1" font-size="8.5" text-anchor="end" fill="#c4c4cf" stroke="#c4c4cf" stroke-width="0.22" font-weight="normal" dominant-baseline="central">0 ms</text><line x1="79.5" y1="612" x2="79.5" y2="706" stroke="#2c2e33" stroke-width="1"/><text x="79.70000000000005" y="715.8" font-size="9" text-anchor="middle" fill="#c4c4cf" stroke="#c4c4cf" stroke-width="0.22" font-weight="normal" dominant-baseline="central">04/03 20:00</text><line x1="152.5" y1="612" x2="152.5" y2="706" stroke="#2c2e33" stroke-width="1"/><text x="152.5" y="715.8" font-size="9" text-anchor="middle" fill="#c4c4cf" stroke="#c4c4cf" stroke-width="0.22" font-weight="normal" dominant-baseline="central">04/04 00:00</text><line x1="225.5" y1="612" x2="225.5" y2="706" stroke="#2c2e33" stroke-width="1"/><text x="225.30000000000007" y="715.8" font-size="9" text-anchor="middle" fill="#c4c4cf" stroke="#c4c4cf" stroke-width="0.22" font-weight="normal" dominant-baseline="central">04/04 04:00</text><line x1="298.5" y1="612" x2="298.5" y2="706" stroke="#2c2e33" stroke-width="1"/><text x="298.1" y="715.8" font-size="9" text-anchor="middle" fill="#c4c4cf" stroke="#c4c4cf" stroke-width="0.22" font-weight="normal" dominant-baseline="central">04/04 08:00</text><line x1="371.5" y1="612" x2="371.5" y2="706" stroke="#2c2e33" stroke-width="1"/><text x="370.90000000000003" y="715.8" font-size="9" text-anchor="middle" fill="#c4c4cf" stroke="#c4c4cf" stroke-width="0.22" font-weight="normal" dominant-baseline="central">04/04 12:00</text><line x1="443.5" y1="612" x2="443.5" y2="706" stroke="#2c2e33" stroke-width="1"/><text x="443.70000000000005" y="715.8" font-size="9" text-anchor="middle" fill="#c4c4cf" stroke="#c4c4cf" stroke-width="0.22" font-weight="normal" dominant-baseline="central">04/04 16:00</text><line x1="516.5" y1="612" x2="516.5" y2="706" stroke="#2c2e33" stroke-width="1"/><text x="516.5" y="715.8" font-size="9" text-anchor="middle" fill="#c4c4cf" stroke="#c4c4cf" stroke-width="0.22" font-weight="normal" dominant-baseline="central">04/04 20:00</text><line x1="589.5" y1="612" x2="589.5" y2="706" stroke="#2c2e33" stroke-width="1"/><text x="589.3" y="715.8" font-size="9" text-anchor="middle" fill="#c4c4cf" stroke="#c4c4cf" stroke-width="0.22" font-weight="normal" dominant-baseline="central">04/05 00:00</text><line x1="662.5" y1="612" x2="662.5" y2="706" stroke="#2c2e33" stroke-width="1"/><text x="662.1" y="715.8" font-size="9" text-anchor="middle" fill="#c4c4cf" stroke="#c4c4cf" stroke-width="0.22" font-weight="normal" dominant-baseline="central">04/05 04:00</text><line x1="735.5" y1="612" x2="735.5" y2="706" stroke="#2c2e33" stroke-width="1"/><text x="734.9" y="715.8" font-size="9" text-anchor="middle" fill="#c4c4cf" stroke="#c4c4cf" stroke-width="0.22" font-weight="normal" dominant-baseline="central">04/05 08:00</text><line x1="807.5" y1="612" x2="807.5" y2="706" stroke="#2c2e33" stroke-width="1"/><text x="807.7" y="715.8" font-size="9" text-anchor="middle" fill="#c4c4cf" stroke="#c4c4cf" stroke-width="0.22" font-weight="normal" dominant-baseline="central">04/05 12:00</text><line x1="880.5" y1="612" x2="880.5" y2="706" stroke="#2c2e33" stroke-width="1"/><text x="880.5" y="715.8" font-size="9" text-anchor="middle" fill="#c4c4cf" stroke="#c4c4cf" stroke-width="0.22" font-weight="normal" dominant-baseline="central">04/05 16:00</text><rect x="37.6" y="619.5" width="874.4" height="87" fill="#8AB8F5"/><path d="M37.60 619.5h1.52V706.5h-1.52ZM39.12 619.5h1.52V706.5h-1.52ZM42.15 619.5h1.52V706.5h-1.52ZM58.82 619.5h1.52V706.5h-1.52ZM60.33 619.5h1.52V706.5h-1.52ZM63.36 619.5h1.52V706.5h-1.52ZM70.94 619.5h1.52V706.5h-1.52ZM72.45 619.5h1.52V706.5h-1.52ZM75.49 619.5h1.52V706.5h-1.52ZM84.58 619.5h1.52V706.5h-1.52ZM86.09 619.5h1.52V706.5h-1.52ZM93.67 619.5h1.52V706.5h-1.52ZM99.73 619.5h1.52V706.5h-1.52ZM101.25 619.5h1.52V706.5h-1.52ZM105.79 619.5h1.52V706.5h-1.52ZM110.34 619.5h1.52V706.5h-1.52ZM113.37 619.5h1.52V706.5h-1.52ZM114.89 619.5h1.52V706.5h-1.52ZM116.40 619.5h1.52V706.5h-1.52ZM122.46 619.5h1.52V706.5h-1.52ZM125.49 619.5h1.52V706.5h-1.52ZM127.01 619.5h1.52V706.5h-1.52ZM130.04 619.5h1.52V706.5h-1.52ZM136.10 619.5h1.52V706.5h-1.52ZM139.13 619.5h1.52V706.5h-1.52ZM140.65 619.5h1.52V706.5h-1.52ZM148.23 619.5h1.52V706.5h-1.52ZM149.74 619.5h1.52V706.5h-1.52ZM151.26 619.5h1.52V706.5h-1.52ZM154.29 619.5h1.52V706.5h-1.52ZM158.83 619.5h1.52V706.5h-1.52ZM163.38 619.5h1.52V706.5h-1.52ZM164.90 619.5h1.52V706.5h-1.52ZM175.50 619.5h1.52V706.5h-1.52ZM183.08 619.5h1.52V706.5h-1.52ZM186.11 619.5h1.52V706.5h-1.52ZM198.24 619.5h1.52V706.5h-1.52ZM201.27 619.5h1.52V706.5h-1.52ZM202.78 619.5h1.52V706.5h-1.52ZM207.33 619.5h1.52V706.5h-1.52ZM208.84 619.5h1.52V706.5h-1.52ZM210.36 619.5h1.52V706.5h-1.52ZM211.87 619.5h1.52V706.5h-1.52ZM214.90 619.5h1.52V706.5h-1.52ZM216.42 619.5h1.52V706.5h-1.52ZM217.94 619.5h1.52V706.5h-1.52ZM220.97 619.5h1.52V706.5h-1.52ZM222.48 619.5h1.52V706.5h-1.52ZM228.54 619.5h1.52V706.5h-1.52ZM230.06 619.5h1.52V706.5h-1.52ZM233.09 619.5h1.52V706.5h-1.52ZM236.12 619.5h1.52V706.5h-1.52ZM242.18 619.5h1.52V706.5h-1.52ZM248.24 619.5h1.52V706.5h-1.52ZM249.76 619.5h1.52V706.5h-1.52ZM263.40 619.5h1.52V706.5h-1.52ZM269.46 619.5h1.52V706.5h-1.52ZM272.49 619.5h1.52V706.5h-1.52ZM277.04 619.5h1.52V706.5h-1.52ZM280.07 619.5h1.52V706.5h-1.52ZM281.58 619.5h1.52V706.5h-1.52ZM283.10 619.5h1.52V706.5h-1.52ZM290.68 619.5h1.52V706.5h-1.52ZM298.25 619.5h1.52V706.5h-1.52ZM299.77 619.5h1.52V706.5h-1.52ZM301.28 619.5h1.52V706.5h-1.52ZM304.31 619.5h1.52V706.5h-1.52ZM305.83 619.5h1.52V706.5h-1.52ZM308.86 619.5h1.52V706.5h-1.52ZM311.89 619.5h1.52V706.5h-1.52ZM320.98 619.5h1.52V706.5h-1.52ZM324.02 619.5h1.52V706.5h-1.52ZM327.05 619.5h1.52V706.5h-1.52ZM333.11 619.5h1.52V706.5h-1.52ZM334.62 619.5h1.52V706.5h-1.52ZM336.14 619.5h1.52V706.5h-1.52ZM337.65 619.5h1.52V706.5h-1.52ZM340.68 619.5h1.52V706.5h-1.52ZM342.20 619.5h1.52V706.5h-1.52ZM343.72 619.5h1.52V706.5h-1.52ZM345.23 619.5h1.52V706.5h-1.52ZM346.75 619.5h1.52V706.5h-1.52ZM354.32 619.5h1.52V706.5h-1.52ZM364.93 619.5h1.52V706.5h-1.52ZM370.99 619.5h1.52V706.5h-1.52ZM372.51 619.5h1.52V706.5h-1.52ZM374.02 619.5h1.52V706.5h-1.52ZM377.06 619.5h1.52V706.5h-1.52ZM380.09 619.5h1.52V706.5h-1.52ZM384.63 619.5h1.52V706.5h-1.52ZM386.15 619.5h1.52V706.5h-1.52ZM387.66 619.5h1.52V706.5h-1.52ZM389.18 619.5h1.52V706.5h-1.52ZM390.69 619.5h1.52V706.5h-1.52ZM392.21 619.5h1.52V706.5h-1.52ZM399.79 619.5h1.52V706.5h-1.52ZM402.82 619.5h1.52V706.5h-1.52ZM404.33 619.5h1.52V706.5h-1.52ZM405.85 619.5h1.52V706.5h-1.52ZM407.36 619.5h1.52V706.5h-1.52ZM408.88 619.5h1.52V706.5h-1.52ZM413.43 619.5h1.52V706.5h-1.52ZM422.52 619.5h1.52V706.5h-1.52ZM427.06 619.5h1.52V706.5h-1.52ZM430.09 619.5h1.52V706.5h-1.52ZM433.13 619.5h1.52V706.5h-1.52ZM436.16 619.5h1.52V706.5h-1.52ZM442.22 619.5h1.52V706.5h-1.52ZM445.25 619.5h1.52V706.5h-1.52ZM446.76 619.5h1.52V706.5h-1.52ZM448.28 619.5h1.52V706.5h-1.52ZM449.80 619.5h1.52V706.5h-1.52ZM454.34 619.5h1.52V706.5h-1.52ZM457.37 619.5h1.52V706.5h-1.52ZM458.89 619.5h1.52V706.5h-1.52ZM472.53 619.5h1.52V706.5h-1.52ZM475.56 619.5h1.52V706.5h-1.52ZM478.59 619.5h1.52V706.5h-1.52ZM492.23 619.5h1.52V706.5h-1.52ZM499.80 619.5h1.52V706.5h-1.52ZM507.38 619.5h1.52V706.5h-1.52ZM511.93 619.5h1.52V706.5h-1.52ZM513.44 619.5h1.52V706.5h-1.52ZM517.99 619.5h1.52V706.5h-1.52ZM519.51 619.5h1.52V706.5h-1.52ZM527.08 619.5h1.52V706.5h-1.52ZM531.63 619.5h1.52V706.5h-1.52ZM539.21 619.5h1.52V706.5h-1.52ZM549.81 619.5h1.52V706.5h-1.52ZM560.42 619.5h1.52V706.5h-1.52ZM561.94 619.5h1.52V706.5h-1.52ZM564.97 619.5h1.52V706.5h-1.52ZM572.54 619.5h1.52V706.5h-1.52ZM577.09 619.5h1.52V706.5h-1.52ZM580.12 619.5h1.52V706.5h-1.52ZM581.64 619.5h1.52V706.5h-1.52ZM586.18 619.5h1.52V706.5h-1.52ZM589.21 619.5h1.52V706.5h-1.52ZM595.28 619.5h1.52V706.5h-1.52ZM596.79 619.5h1.52V706.5h-1.52ZM599.82 619.5h1.52V706.5h-1.52ZM605.88 619.5h1.52V706.5h-1.52ZM610.43 619.5h1.52V706.5h-1.52ZM613.46 619.5h1.52V706.5h-1.52ZM619.52 619.5h1.52V706.5h-1.52ZM624.07 619.5h1.52V706.5h-1.52ZM631.65 619.5h1.52V706.5h-1.52ZM642.25 619.5h1.52V706.5h-1.52ZM645.29 619.5h1.52V706.5h-1.52ZM649.83 619.5h1.52V706.5h-1.52ZM651.35 619.5h1.52V706.5h-1.52ZM654.38 619.5h1.52V706.5h-1.52ZM655.89 619.5h1.52V706.5h-1.52ZM660.44 619.5h1.52V706.5h-1.52ZM661.95 619.5h1.52V706.5h-1.52ZM663.47 619.5h1.52V706.5h-1.52ZM664.99 619.5h1.52V706.5h-1.52ZM675.59 619.5h1.52V706.5h-1.52ZM683.17 619.5h1.52V706.5h-1.52ZM686.20 619.5h1.52V706.5h-1.52ZM689.23 619.5h1.52V706.5h-1.52ZM693.78 619.5h1.52V706.5h-1.52ZM695.29 619.5h1.52V706.5h-1.52ZM696.81 619.5h1.52V706.5h-1.52ZM704.39 619.5h1.52V706.5h-1.52ZM708.93 619.5h1.52V706.5h-1.52ZM716.51 619.5h1.52V706.5h-1.52ZM718.03 619.5h1.52V706.5h-1.52ZM719.54 619.5h1.52V706.5h-1.52ZM722.57 619.5h1.52V706.5h-1.52ZM724.09 619.5h1.52V706.5h-1.52ZM725.60 619.5h1.52V706.5h-1.52ZM727.12 619.5h1.52V706.5h-1.52ZM730.15 619.5h1.52V706.5h-1.52ZM733.18 619.5h1.52V706.5h-1.52ZM736.21 619.5h1.52V706.5h-1.52ZM740.76 619.5h1.52V706.5h-1.52ZM742.27 619.5h1.52V706.5h-1.52ZM743.79 619.5h1.52V706.5h-1.52ZM748.33 619.5h1.52V706.5h-1.52ZM749.85 619.5h1.52V706.5h-1.52ZM752.88 619.5h1.52V706.5h-1.52ZM755.91 619.5h1.52V706.5h-1.52ZM757.43 619.5h1.52V706.5h-1.52ZM760.46 619.5h1.52V706.5h-1.52ZM768.03 619.5h1.52V706.5h-1.52ZM769.55 619.5h1.52V706.5h-1.52ZM784.70 619.5h1.52V706.5h-1.52ZM786.22 619.5h1.52V706.5h-1.52ZM790.77 619.5h1.52V706.5h-1.52ZM792.28 619.5h1.52V706.5h-1.52ZM793.80 619.5h1.52V706.5h-1.52ZM795.31 619.5h1.52V706.5h-1.52ZM798.34 619.5h1.52V706.5h-1.52ZM805.92 619.5h1.52V706.5h-1.52ZM807.44 619.5h1.52V706.5h-1.52ZM808.95 619.5h1.52V706.5h-1.52ZM810.47 619.5h1.52V706.5h-1.52ZM813.50 619.5h1.52V706.5h-1.52ZM816.53 619.5h1.52V706.5h-1.52ZM822.59 619.5h1.52V706.5h-1.52ZM824.11 619.5h1.52V706.5h-1.52ZM825.62 619.5h1.52V706.5h-1.52ZM827.14 619.5h1.52V706.5h-1.52ZM831.68 619.5h1.52V706.5h-1.52ZM836.23 619.5h1.52V706.5h-1.52ZM837.74 619.5h1.52V706.5h-1.52ZM840.78 619.5h1.52V706.5h-1.52ZM848.35 619.5h1.52V706.5h-1.52ZM852.90 619.5h1.52V706.5h-1.52ZM861.99 619.5h1.52V706.5h-1.52ZM871.08 619.5h1.52V706.5h-1.52ZM872.60 619.5h1.52V706.5h-1.52ZM875.63 619.5h1.52V706.5h-1.52ZM877.15 619.5h1.52V706.5h-1.52ZM880.18 619.5h1.52V706.5h-1.52ZM881.69 619.5h1.52V706.5h-1.52ZM887.75 619.5h1.52V706.5h-1.52ZM890.78 619.5h1.52V706.5h-1.52ZM892.30 619.5h1.52V706.5h-1.52ZM893.81 619.5h1.52V706.5h-1.52ZM896.85 619.5h1.52V706.5h-1.52ZM902.91 619.5h1.52V706.5h-1.52ZM904.42 619.5h1.52V706.5h-1.52ZM905.94 619.5h1.52V706.5h-1.52ZM908.97 619.5h1.52V706.5h-1.52Z" fill="#6f98d0" opacity="0.6"/><path d="M39.12 619.5V706.5M40.63 619.5V706.5M42.15 619.5V706.5M43.66 619.5V706.5M45.18 619.5V706.5M46.69 619.5V706.5M48.21 619.5V706.5M49.72 619.5V706.5M51.24 619.5V706.5M52.75 619.5V706.5M54.27 619.5V706.5M55.79 619.5V706.5M57.30 619.5V706.5M58.82 619.5V706.5M60.33 619.5V706.5M61.85 619.5V706.5M63.36 619.5V706.5M64.88 619.5V706.5M66.39 619.5V706.5M67.91 619.5V706.5M69.42 619.5V706.5M70.94 619.5V706.5M72.45 619.5V706.5M73.97 619.5V706.5M75.49 619.5V706.5M77.00 619.5V706.5M78.52 619.5V706.5M80.03 619.5V706.5M81.55 619.5V706.5M83.06 619.5V706.5M84.58 619.5V706.5M86.09 619.5V706.5M87.61 619.5V706.5M89.12 619.5V706.5M90.64 619.5V706.5M92.16 619.5V706.5M93.67 619.5V706.5M95.19 619.5V706.5M96.70 619.5V706.5M98.22 619.5V706.5M99.73 619.5V706.5M101.25 619.5V706.5M102.76 619.5V706.5M104.28 619.5V706.5M105.79 619.5V706.5M107.31 619.5V706.5M108.82 619.5V706.5M110.34 619.5V706.5M111.86 619.5V706.5M113.37 619.5V706.5M114.89 619.5V706.5M116.40 619.5V706.5M117.92 619.5V706.5M119.43 619.5V706.5M120.95 619.5V706.5M122.46 619.5V706.5M123.98 619.5V706.5M125.49 619.5V706.5M127.01 619.5V706.5M128.53 619.5V706.5M130.04 619.5V706.5M131.56 619.5V706.5M133.07 619.5V706.5M134.59 619.5V706.5M136.10 619.5V706.5M137.62 619.5V706.5M139.13 619.5V706.5M140.65 619.5V706.5M142.16 619.5V706.5M143.68 619.5V706.5M145.20 619.5V706.5M146.71 619.5V706.5M148.23 619.5V706.5M149.74 619.5V706.5M151.26 619.5V706.5M152.77 619.5V706.5M154.29 619.5V706.5M155.80 619.5V706.5M157.32 619.5V706.5M158.83 619.5V706.5M160.35 619.5V706.5M161.86 619.5V706.5M163.38 619.5V706.5M164.90 619.5V706.5M166.41 619.5V706.5M167.93 619.5V706.5M169.44 619.5V706.5M170.96 619.5V706.5M172.47 619.5V706.5M173.99 619.5V706.5M175.50 619.5V706.5M177.02 619.5V706.5M178.53 619.5V706.5M180.05 619.5V706.5M181.57 619.5V706.5M183.08 619.5V706.5M184.60 619.5V706.5M186.11 619.5V706.5M187.63 619.5V706.5M189.14 619.5V706.5M190.66 619.5V706.5M192.17 619.5V706.5M193.69 619.5V706.5M195.20 619.5V706.5M196.72 619.5V706.5M198.24 619.5V706.5M199.75 619.5V706.5M201.27 619.5V706.5M202.78 619.5V706.5M204.30 619.5V706.5M205.81 619.5V706.5M207.33 619.5V706.5M208.84 619.5V706.5M210.36 619.5V706.5M211.87 619.5V706.5M213.39 619.5V706.5M214.90 619.5V706.5M216.42 619.5V706.5M217.94 619.5V706.5M219.45 619.5V706.5M220.97 619.5V706.5M222.48 619.5V706.5M224.00 619.5V706.5M225.51 619.5V706.5M227.03 619.5V706.5M228.54 619.5V706.5M230.06 619.5V706.5M231.57 619.5V706.5M233.09 619.5V706.5M234.61 619.5V706.5M236.12 619.5V706.5M237.64 619.5V706.5M239.15 619.5V706.5M240.67 619.5V706.5M242.18 619.5V706.5M243.70 619.5V706.5M245.21 619.5V706.5M246.73 619.5V706.5M248.24 619.5V706.5M249.76 619.5V706.5M251.27 619.5V706.5M252.79 619.5V706.5M254.31 619.5V706.5M255.82 619.5V706.5M257.34 619.5V706.5M258.85 619.5V706.5M260.37 619.5V706.5M261.88 619.5V706.5M263.40 619.5V706.5M264.91 619.5V706.5M266.43 619.5V706.5M267.94 619.5V706.5M269.46 619.5V706.5M270.98 619.5V706.5M272.49 619.5V706.5M274.01 619.5V706.5M275.52 619.5V706.5M277.04 619.5V706.5M278.55 619.5V706.5M280.07 619.5V706.5M281.58 619.5V706.5M283.10 619.5V706.5M284.61 619.5V706.5M286.13 619.5V706.5M287.65 619.5V706.5M289.16 619.5V706.5M290.68 619.5V706.5M292.19 619.5V706.5M293.71 619.5V706.5M295.22 619.5V706.5M296.74 619.5V706.5M298.25 619.5V706.5M299.77 619.5V706.5M301.28 619.5V706.5M302.80 619.5V706.5M304.31 619.5V706.5M305.83 619.5V706.5M307.35 619.5V706.5M308.86 619.5V706.5M310.38 619.5V706.5M311.89 619.5V706.5M313.41 619.5V706.5M314.92 619.5V706.5M316.44 619.5V706.5M317.95 619.5V706.5M319.47 619.5V706.5M320.98 619.5V706.5M322.50 619.5V706.5M324.02 619.5V706.5M325.53 619.5V706.5M327.05 619.5V706.5M328.56 619.5V706.5M330.08 619.5V706.5M331.59 619.5V706.5M333.11 619.5V706.5M334.62 619.5V706.5M336.14 619.5V706.5M337.65 619.5V706.5M339.17 619.5V706.5M340.68 619.5V706.5M342.20 619.5V706.5M343.72 619.5V706.5M345.23 619.5V706.5M346.75 619.5V706.5M348.26 619.5V706.5M349.78 619.5V706.5M351.29 619.5V706.5M352.81 619.5V706.5M354.32 619.5V706.5M355.84 619.5V706.5M357.35 619.5V706.5M358.87 619.5V706.5M360.39 619.5V706.5M361.90 619.5V706.5M363.42 619.5V706.5M364.93 619.5V706.5M366.45 619.5V706.5M367.96 619.5V706.5M369.48 619.5V706.5M370.99 619.5V706.5M372.51 619.5V706.5M374.02 619.5V706.5M375.54 619.5V706.5M377.06 619.5V706.5M378.57 619.5V706.5M380.09 619.5V706.5M381.60 619.5V706.5M383.12 619.5V706.5M384.63 619.5V706.5M386.15 619.5V706.5M387.66 619.5V706.5M389.18 619.5V706.5M390.69 619.5V706.5M392.21 619.5V706.5M393.72 619.5V706.5M395.24 619.5V706.5M396.76 619.5V706.5M398.27 619.5V706.5M399.79 619.5V706.5M401.30 619.5V706.5M402.82 619.5V706.5M404.33 619.5V706.5M405.85 619.5V706.5M407.36 619.5V706.5M408.88 619.5V706.5M410.39 619.5V706.5M411.91 619.5V706.5M413.43 619.5V706.5M414.94 619.5V706.5M416.46 619.5V706.5M417.97 619.5V706.5M419.49 619.5V706.5M421.00 619.5V706.5M422.52 619.5V706.5M424.03 619.5V706.5M425.55 619.5V706.5M427.06 619.5V706.5M428.58 619.5V706.5M430.09 619.5V706.5M431.61 619.5V706.5M433.13 619.5V706.5M434.64 619.5V706.5M436.16 619.5V706.5M437.67 619.5V706.5M439.19 619.5V706.5M440.70 619.5V706.5M442.22 619.5V706.5M443.73 619.5V706.5M445.25 619.5V706.5M446.76 619.5V706.5M448.28 619.5V706.5M449.80 619.5V706.5M451.31 619.5V706.5M452.83 619.5V706.5M454.34 619.5V706.5M455.86 619.5V706.5M457.37 619.5V706.5M458.89 619.5V706.5M460.40 619.5V706.5M461.92 619.5V706.5M463.43 619.5V706.5M464.95 619.5V706.5M466.47 619.5V706.5M467.98 619.5V706.5M469.50 619.5V706.5M471.01 619.5V706.5M472.53 619.5V706.5M474.04 619.5V706.5M475.56 619.5V706.5M477.07 619.5V706.5M478.59 619.5V706.5M480.10 619.5V706.5M481.62 619.5V706.5M483.13 619.5V706.5M484.65 619.5V706.5M486.17 619.5V706.5M487.68 619.5V706.5M489.20 619.5V706.5M490.71 619.5V706.5M492.23 619.5V706.5M493.74 619.5V706.5M495.26 619.5V706.5M496.77 619.5V706.5M498.29 619.5V706.5M499.80 619.5V706.5M501.32 619.5V706.5M502.84 619.5V706.5M504.35 619.5V706.5M505.87 619.5V706.5M507.38 619.5V706.5M508.90 619.5V706.5M510.41 619.5V706.5M511.93 619.5V706.5M513.44 619.5V706.5M514.96 619.5V706.5M516.47 619.5V706.5M517.99 619.5V706.5M519.51 619.5V706.5M521.02 619.5V706.5M522.54 619.5V706.5M524.05 619.5V706.5M525.57 619.5V706.5M527.08 619.5V706.5M528.60 619.5V706.5M530.11 619.5V706.5M531.63 619.5V706.5M533.14 619.5V706.5M534.66 619.5V706.5M536.17 619.5V706.5M537.69 619.5V706.5M539.21 619.5V706.5M540.72 619.5V706.5M542.24 619.5V706.5M543.75 619.5V706.5M545.27 619.5V706.5M546.78 619.5V706.5M548.30 619.5V706.5M549.81 619.5V706.5M551.33 619.5V706.5M552.84 619.5V706.5M554.36 619.5V706.5M555.88 619.5V706.5M557.39 619.5V706.5M558.91 619.5V706.5M560.42 619.5V706.5M561.94 619.5V706.5M563.45 619.5V706.5M564.97 619.5V706.5M566.48 619.5V706.5M568.00 619.5V706.5M569.51 619.5V706.5M571.03 619.5V706.5M572.54 619.5V706.5M574.06 619.5V706.5M575.58 619.5V706.5M577.09 619.5V706.5M578.61 619.5V706.5M580.12 619.5V706.5M581.64 619.5V706.5M583.15 619.5V706.5M584.67 619.5V706.5M586.18 619.5V706.5M587.70 619.5V706.5M589.21 619.5V706.5M590.73 619.5V706.5M592.25 619.5V706.5M593.76 619.5V706.5M595.28 619.5V706.5M596.79 619.5V706.5M598.31 619.5V706.5M599.82 619.5V706.5M601.34 619.5V706.5M602.85 619.5V706.5M604.37 619.5V706.5M605.88 619.5V706.5M607.40 619.5V706.5M608.92 619.5V706.5M610.43 619.5V706.5M611.95 619.5V706.5M613.46 619.5V706.5M614.98 619.5V706.5M616.49 619.5V706.5M618.01 619.5V706.5M619.52 619.5V706.5M621.04 619.5V706.5M622.55 619.5V706.5M624.07 619.5V706.5M625.58 619.5V706.5M627.10 619.5V706.5M628.62 619.5V706.5M630.13 619.5V706.5M631.65 619.5V706.5M633.16 619.5V706.5M634.68 619.5V706.5M636.19 619.5V706.5M637.71 619.5V706.5M639.22 619.5V706.5M640.74 619.5V706.5M642.25 619.5V706.5M643.77 619.5V706.5M645.29 619.5V706.5M646.80 619.5V706.5M648.32 619.5V706.5M649.83 619.5V706.5M651.35 619.5V706.5M652.86 619.5V706.5M654.38 619.5V706.5M655.89 619.5V706.5M657.41 619.5V706.5M658.92 619.5V706.5M660.44 619.5V706.5M661.95 619.5V706.5M663.47 619.5V706.5M664.99 619.5V706.5M666.50 619.5V706.5M668.02 619.5V706.5M669.53 619.5V706.5M671.05 619.5V706.5M672.56 619.5V706.5M674.08 619.5V706.5M675.59 619.5V706.5M677.11 619.5V706.5M678.62 619.5V706.5M680.14 619.5V706.5M681.66 619.5V706.5M683.17 619.5V706.5M684.69 619.5V706.5M686.20 619.5V706.5M687.72 619.5V706.5M689.23 619.5V706.5M690.75 619.5V706.5M692.26 619.5V706.5M693.78 619.5V706.5M695.29 619.5V706.5M696.81 619.5V706.5M698.33 619.5V706.5M699.84 619.5V706.5M701.36 619.5V706.5M702.87 619.5V706.5M704.39 619.5V706.5M705.90 619.5V706.5M707.42 619.5V706.5M708.93 619.5V706.5M710.45 619.5V706.5M711.96 619.5V706.5M713.48 619.5V706.5M714.99 619.5V706.5M716.51 619.5V706.5M718.03 619.5V706.5M719.54 619.5V706.5M721.06 619.5V706.5M722.57 619.5V706.5M724.09 619.5V706.5M725.60 619.5V706.5M727.12 619.5V706.5M728.63 619.5V706.5M730.15 619.5V706.5M731.66 619.5V706.5M733.18 619.5V706.5M734.70 619.5V706.5M736.21 619.5V706.5M737.73 619.5V706.5M739.24 619.5V706.5M740.76 619.5V706.5M742.27 619.5V706.5M743.79 619.5V706.5M745.30 619.5V706.5M746.82 619.5V706.5M748.33 619.5V706.5M749.85 619.5V706.5M751.36 619.5V706.5M752.88 619.5V706.5M754.40 619.5V706.5M755.91 619.5V706.5M757.43 619.5V706.5M758.94 619.5V706.5M760.46 619.5V706.5M761.97 619.5V706.5M763.49 619.5V706.5M765.00 619.5V706.5M766.52 619.5V706.5M768.03 619.5V706.5M769.55 619.5V706.5M771.07 619.5V706.5M772.58 619.5V706.5M774.10 619.5V706.5M775.61 619.5V706.5M777.13 619.5V706.5M778.64 619.5V706.5M780.16 619.5V706.5M781.67 619.5V706.5M783.19 619.5V706.5M784.70 619.5V706.5M786.22 619.5V706.5M787.74 619.5V706.5M789.25 619.5V706.5M790.77 619.5V706.5M792.28 619.5V706.5M793.80 619.5V706.5M795.31 619.5V706.5M796.83 619.5V706.5M798.34 619.5V706.5M799.86 619.5V706.5M801.37 619.5V706.5M802.89 619.5V706.5M804.40 619.5V706.5M805.92 619.5V706.5M807.44 619.5V706.5M808.95 619.5V706.5M810.47 619.5V706.5M811.98 619.5V706.5M813.50 619.5V706.5M815.01 619.5V706.5M816.53 619.5V706.5M818.04 619.5V706.5M819.56 619.5V706.5M821.07 619.5V706.5M822.59 619.5V706.5M824.11 619.5V706.5M825.62 619.5V706.5M827.14 619.5V706.5M828.65 619.5V706.5M830.17 619.5V706.5M831.68 619.5V706.5M833.20 619.5V706.5M834.71 619.5V706.5M836.23 619.5V706.5M837.74 619.5V706.5M839.26 619.5V706.5M840.78 619.5V706.5M842.29 619.5V706.5M843.81 619.5V706.5M845.32 619.5V706.5M846.84 619.5V706.5M848.35 619.5V706.5M849.87 619.5V706.5M851.38 619.5V706.5M852.90 619.5V706.5M854.41 619.5V706.5M855.93 619.5V706.5M857.44 619.5V706.5M858.96 619.5V706.5M860.48 619.5V706.5M861.99 619.5V706.5M863.51 619.5V706.5M865.02 619.5V706.5M866.54 619.5V706.5M868.05 619.5V706.5M869.57 619.5V706.5M871.08 619.5V706.5M872.60 619.5V706.5M874.11 619.5V706.5M875.63 619.5V706.5M877.15 619.5V706.5M878.66 619.5V706.5M880.18 619.5V706.5M881.69 619.5V706.5M883.21 619.5V706.5M884.72 619.5V706.5M886.24 619.5V706.5M887.75 619.5V706.5M889.27 619.5V706.5M890.78 619.5V706.5M892.30 619.5V706.5M893.81 619.5V706.5M895.33 619.5V706.5M896.85 619.5V706.5M898.36 619.5V706.5M899.88 619.5V706.5M901.39 619.5V706.5M902.91 619.5V706.5M904.42 619.5V706.5M905.94 619.5V706.5M907.45 619.5V706.5M908.97 619.5V706.5M910.48 619.5V706.5" stroke="#6f98d0" stroke-width="0.5" fill="none" opacity="0.7"/><path d="M53.00 619h1V707h-1ZM65.00 619h1V707h-1ZM67.70 619h1V707h-1ZM75.90 619h1V707h-1ZM81.00 619h1V707h-1ZM110.00 619h1V707h-1ZM112.90 619h1V707h-1ZM123.80 619h1V707h-1ZM127.90 619h1V707h-1ZM138.30 619h1V707h-1ZM141.20 619h1V707h-1ZM143.90 619h1V707h-1ZM163.70 619h1V707h-1ZM169.70 619h1V707h-1ZM178.20 619h1V707h-1ZM184.20 619h1V707h-1ZM192.70 619h1V707h-1ZM213.70 619h1V707h-1ZM221.00 619h1V707h-1ZM241.10 619h1V707h-1ZM253.10 619h1V707h-1ZM256.80 619h1V707h-1ZM288.90 619h1V707h-1ZM299.80 619h1V707h-1ZM322.50 619h1V707h-1ZM351.80 619h1V707h-1ZM382.50 619h1V707h-1ZM387.30 619h1V707h-1ZM393.90 619h1V707h-1ZM401.80 619h1V707h-1ZM421.20 619h1V707h-1ZM427.20 619h1V707h-1ZM450.70 619h1V707h-1ZM486.90 619h1V707h-1ZM496.10 619h1V707h-1ZM504.10 619h1V707h-1ZM507.00 619h1V707h-1ZM510.60 619h1V707h-1ZM529.90 619h1V707h-1ZM556.50 619h1V707h-1ZM564.10 619h1V707h-1ZM569.80 619h1V707h-1ZM578.30 619h1V707h-1ZM584.30 619h1V707h-1ZM587.20 619h1V707h-1ZM590.10 619h1V707h-1ZM597.60 619h1V707h-1ZM612.10 619h1V707h-1ZM620.80 619h1V707h-1ZM623.80 619h1V707h-1ZM643.60 619h1V707h-1ZM657.50 619h1V707h-1ZM660.50 619h1V707h-1ZM669.70 619h1V707h-1ZM685.90 619h1V707h-1ZM698.50 619h1V707h-1ZM708.90 619h1V707h-1ZM728.90 619h1V707h-1ZM737.40 619h1V707h-1ZM742.70 619h1V707h-1ZM753.60 619h1V707h-1ZM794.00 619h1V707h-1ZM799.50 619h1V707h-1ZM820.10 619h1V707h-1ZM822.90 619h1V707h-1ZM830.50 619h1V707h-1ZM833.90 619h1V707h-1ZM852.70 619h1V707h-1ZM878.10 619h1V707h-1ZM882.50 619h1V707h-1ZM892.60 619h1V707h-1ZM902.30 619h1V707h-1ZM908.30 619h1V707h-1Z" fill="#1b2d4a"/><path d="M155.20 619h3.40V707h-3.40ZM227.10 619h1.20V707h-1.20ZM263.30 619h1.20V707h-1.20ZM356.90 619h1.20V707h-1.20ZM514.30 619h1.20V707h-1.20ZM543.50 619h1.30V707h-1.30ZM702.00 619h1.30V707h-1.30ZM845.40 619h1.30V707h-1.30Z" fill="#0f1a2a"/><line x1="37.6" y1="676.5" x2="912" y2="676.5" stroke="#4a6790" stroke-width="1" stroke-dasharray="3 2"/><line x1="441.5" y1="612" x2="441.5" y2="706" stroke="#6b7280" stroke-width="1" stroke-dasharray="2 2"/><circle cx="441.2" cy="620" r="2.3" fill="#8AB8FF"/><circle cx="441.2" cy="707" r="2.3" fill="#73BF69"/><line x1="0" y1="721.5" x2="919" y2="721.5" stroke="#24262b" stroke-width="1"/><line x1="0" y1="737.5" x2="919" y2="737.5" stroke="#24262b" stroke-width="1"/><line x1="0" y1="753.5" x2="919" y2="753.5" stroke="#24262b" stroke-width="1"/><rect x="7" y="728.1999999999999" width="9" height="3.2" rx="0.4" fill="#84c47c"/><text x="21.5" y="729.0" font-size="8.7" text-anchor="start" fill="#c4c4cf" stroke="#c4c4cf" stroke-width="0.22" font-weight="normal" dominant-baseline="central">.</text><rect x="7" y="745.4" width="9" height="2.2" rx="0.4" fill="#eed67a"/><text x="21.5" y="745.7" font-size="8.7" text-anchor="start" fill="#c4c4cf" stroke="#c4c4cf" stroke-width="0.22" font-weight="normal" dominant-baseline="central">org.apache.dubbo.metadata.MetadataService.getMetadataInfo</text><rect x="7" y="760.6999999999999" width="9" height="2.2" rx="0.4" fill="#b4cff8"/><text x="21.5" y="761.0" font-size="8.7" text-anchor="start" fill="#c4c4cf" stroke="#c4c4cf" stroke-width="0.22" font-weight="normal" dominant-baseline="central">org.apache.dubbo.samples.metrics.prometheus.api.DemoService.sayHello</text><rect x="928.5" y="604.5" width="927" height="216" rx="1.5" fill="#181b1f" stroke="#26282d" stroke-width="1"/><text x="1392" y="618.5" font-size="9.15" font-weight="bold" text-anchor="middle" fill="#ccccdc">provider_rt_p99</text><line x1="960" y1="638.5" x2="1845" y2="638.5" stroke="#2c2e33" stroke-width="1"/><text x="957" y="637.1" font-size="8.5" text-anchor="end" fill="#c4c4cf" stroke="#c4c4cf" stroke-width="0.22" font-weight="normal" dominant-baseline="central">15 ms</text><line x1="960" y1="667.5" x2="1845" y2="667.5" stroke="#2c2e33" stroke-width="1"/><text x="957" y="666.1" font-size="8.5" text-anchor="end" fill="#c4c4cf" stroke="#c4c4cf" stroke-width="0.22" font-weight="normal" dominant-baseline="central">10 ms</text><line x1="960" y1="696.5" x2="1845" y2="696.5" stroke="#2c2e33" stroke-width="1"/><text x="957" y="695.1" font-size="8.5" text-anchor="end" fill="#c4c4cf" stroke="#c4c4cf" stroke-width="0.22" font-weight="normal" dominant-baseline="central">5 ms</text><line x1="960" y1="724.5" x2="1845" y2="724.5" stroke="#2c2e33" stroke-width="1"/><text x="957" y="723.1" font-size="8.5" text-anchor="end" fill="#c4c4cf" stroke="#c4c4cf" stroke-width="0.22" font-weight="normal" dominant-baseline="central">0 ms</text><line x1="1004.5" y1="638" x2="1004.5" y2="724" stroke="#2c2e33" stroke-width="1"/><text x="1004.3399999999999" y="733" font-size="9" text-anchor="middle" fill="#c4c4cf" stroke="#c4c4cf" stroke-width="0.22" font-weight="normal" dominant-baseline="central">04/03 20:00</text><line x1="1078.5" y1="638" x2="1078.5" y2="724" stroke="#2c2e33" stroke-width="1"/><text x="1077.9" y="733" font-size="9" text-anchor="middle" fill="#c4c4cf" stroke="#c4c4cf" stroke-width="0.22" font-weight="normal" dominant-baseline="central">04/04 00:00</text><line x1="1151.5" y1="638" x2="1151.5" y2="724" stroke="#2c2e33" stroke-width="1"/><text x="1151.46" y="733" font-size="9" text-anchor="middle" fill="#c4c4cf" stroke="#c4c4cf" stroke-width="0.22" font-weight="normal" dominant-baseline="central">04/04 04:00</text><line x1="1225.5" y1="638" x2="1225.5" y2="724" stroke="#2c2e33" stroke-width="1"/><text x="1225.02" y="733" font-size="9" text-anchor="middle" fill="#c4c4cf" stroke="#c4c4cf" stroke-width="0.22" font-weight="normal" dominant-baseline="central">04/04 08:00</text><line x1="1298.5" y1="638" x2="1298.5" y2="724" stroke="#2c2e33" stroke-width="1"/><text x="1298.58" y="733" font-size="9" text-anchor="middle" fill="#c4c4cf" stroke="#c4c4cf" stroke-width="0.22" font-weight="normal" dominant-baseline="central">04/04 12:00</text><line x1="1372.5" y1="638" x2="1372.5" y2="724" stroke="#2c2e33" stroke-width="1"/><text x="1372.1399999999999" y="733" font-size="9" text-anchor="middle" fill="#c4c4cf" stroke="#c4c4cf" stroke-width="0.22" font-weight="normal" dominant-baseline="central">04/04 16:00</text><line x1="1445.5" y1="638" x2="1445.5" y2="724" stroke="#2c2e33" stroke-width="1"/><text x="1445.7" y="733" font-size="9" text-anchor="middle" fill="#c4c4cf" stroke="#c4c4cf" stroke-width="0.22" font-weight="normal" dominant-baseline="central">04/04 20:00</text><line x1="1519.5" y1="638" x2="1519.5" y2="724" stroke="#2c2e33" stroke-width="1"/><text x="1519.26" y="733" font-size="9" text-anchor="middle" fill="#c4c4cf" stroke="#c4c4cf" stroke-width="0.22" font-weight="normal" dominant-baseline="central">04/05 00:00</text><line x1="1593.5" y1="638" x2="1593.5" y2="724" stroke="#2c2e33" stroke-width="1"/><text x="1592.82" y="733" font-size="9" text-anchor="middle" fill="#c4c4cf" stroke="#c4c4cf" stroke-width="0.22" font-weight="normal" dominant-baseline="central">04/05 04:00</text><line x1="1666.5" y1="638" x2="1666.5" y2="724" stroke="#2c2e33" stroke-width="1"/><text x="1666.38" y="733" font-size="9" text-anchor="middle" fill="#c4c4cf" stroke="#c4c4cf" stroke-width="0.22" font-weight="normal" dominant-baseline="central">04/05 08:00</text><line x1="1740.5" y1="638" x2="1740.5" y2="724" stroke="#2c2e33" stroke-width="1"/><text x="1739.94" y="733" font-size="9" text-anchor="middle" fill="#c4c4cf" stroke="#c4c4cf" stroke-width="0.22" font-weight="normal" dominant-baseline="central">04/05 12:00</text><line x1="1813.5" y1="638" x2="1813.5" y2="724" stroke="#2c2e33" stroke-width="1"/><text x="1813.5" y="733" font-size="9" text-anchor="middle" fill="#c4c4cf" stroke="#c4c4cf" stroke-width="0.22" font-weight="normal" dominant-baseline="central">04/05 16:00</text><rect x="962.5" y="719" width="882.5" height="6" fill="#E6C02A"/><path d="M964.35 719V725M966.20 719V725M968.05 719V725M969.90 719V725M971.75 719V725M973.60 719V725M975.45 719V725M977.30 719V725M979.15 719V725M981.00 719V725M982.85 719V725M984.70 719V725M986.55 719V725M988.40 719V725M990.25 719V725M992.10 719V725M993.95 719V725M995.80 719V725M997.65 719V725M999.50 719V725M1001.35 719V725M1003.20 719V725M1005.05 719V725M1006.90 719V725M1008.75 719V725M1010.60 719V725M1012.45 719V725M1014.30 719V725M1016.15 719V725M1018.00 719V725M1019.85 719V725M1021.70 719V725M1023.55 719V725M1025.40 719V725M1027.25 719V725M1029.10 719V725M1030.95 719V725M1032.80 719V725M1034.65 719V725M1036.50 719V725M1038.35 719V725M1040.20 719V725M1042.05 719V725M1043.90 719V725M1045.75 719V725M1047.60 719V725M1049.45 719V725M1051.30 719V725M1053.15 719V725M1055.00 719V725M1056.85 719V725M1058.70 719V725M1060.55 719V725M1062.40 719V725M1064.25 719V725M1066.10 719V725M1067.95 719V725M1069.80 719V725M1071.65 719V725M1073.50 719V725M1075.35 719V725M1077.20 719V725M1079.05 719V725M1080.90 719V725M1082.75 719V725M1084.60 719V725M1086.45 719V725M1088.30 719V725M1090.15 719V725M1092.00 719V725M1093.85 719V725M1095.70 719V725M1097.55 719V725M1099.40 719V725M1101.25 719V725M1103.10 719V725M1104.95 719V725M1106.80 719V725M1108.65 719V725M1110.50 719V725M1112.35 719V725M1114.20 719V725M1116.05 719V725M1117.90 719V725M1119.75 719V725M1121.60 719V725M1123.45 719V725M1125.30 719V725M1127.15 719V725M1129.00 719V725M1130.85 719V725M1132.70 719V725M1134.55 719V725M1136.40 719V725M1138.25 719V725M1140.10 719V725M1141.95 719V725M1143.80 719V725M1145.65 719V725M1147.50 719V725M1149.35 719V725M1151.20 719V725M1153.05 719V725M1154.90 719V725M1156.75 719V725M1158.60 719V725M1160.45 719V725M1162.30 719V725M1164.15 719V725M1166.00 719V725M1167.85 719V725M1169.70 719V725M1171.55 719V725M1173.40 719V725M1175.25 719V725M1177.10 719V725M1178.95 719V725M1180.80 719V725M1182.65 719V725M1184.50 719V725M1186.35 719V725M1188.20 719V725M1190.05 719V725M1191.90 719V725M1193.75 719V725M1195.60 719V725M1197.45 719V725M1199.30 719V725M1201.15 719V725M1203.00 719V725M1204.85 719V725M1206.70 719V725M1208.55 719V725M1210.40 719V725M1212.25 719V725M1214.10 719V725M1215.95 719V725M1217.80 719V725M1219.65 719V725M1221.50 719V725M1223.35 719V725M1225.20 719V725M1227.05 719V725M1228.90 719V725M1230.75 719V725M1232.60 719V725M1234.45 719V725M1236.30 719V725M1238.15 719V725M1240.00 719V725M1241.85 719V725M1243.70 719V725M1245.55 719V725M1247.40 719V725M1249.25 719V725M1251.10 719V725M1252.95 719V725M1254.80 719V725M1256.65 719V725M1258.50 719V725M1260.35 719V725M1262.20 719V725M1264.05 719V725M1265.90 719V725M1267.75 719V725M1269.60 719V725M1271.45 719V725M1273.30 719V725M1275.15 719V725M1277.00 719V725M1278.85 719V725M1280.70 719V725M1282.55 719V725M1284.40 719V725M1286.25 719V725M1288.10 719V725M1289.95 719V725M1291.80 719V725M1293.65 719V725M1295.50 719V725M1297.35 719V725M1299.20 719V725M1301.05 719V725M1302.90 719V725M1304.75 719V725M1306.60 719V725M1308.45 719V725M1310.30 719V725M1312.15 719V725M1314.00 719V725M1315.85 719V725M1317.70 719V725M1319.55 719V725M1321.40 719V725M1323.25 719V725M1325.10 719V725M1326.95 719V725M1328.80 719V725M1330.65 719V725M1332.50 719V725M1334.35 719V725M1336.20 719V725M1338.05 719V725M1339.90 719V725M1341.75 719V725M1343.60 719V725M1345.45 719V725M1347.30 719V725M1349.15 719V725M1351.00 719V725M1352.85 719V725M1354.70 719V725M1356.55 719V725M1358.40 719V725M1360.25 719V725M1362.10 719V725M1363.95 719V725M1365.80 719V725M1367.65 719V725M1369.50 719V725M1371.35 719V725M1373.20 719V725M1375.05 719V725M1376.90 719V725M1378.75 719V725M1380.60 719V725M1382.45 719V725M1384.30 719V725M1386.15 719V725M1388.00 719V725M1389.85 719V725M1391.70 719V725M1393.55 719V725M1395.40 719V725M1397.25 719V725M1399.10 719V725M1400.95 719V725M1402.80 719V725M1404.65 719V725M1406.50 719V725M1408.35 719V725M1410.20 719V725M1412.05 719V725M1413.90 719V725M1415.75 719V725M1417.60 719V725M1419.45 719V725M1421.30 719V725M1423.15 719V725M1425.00 719V725M1426.85 719V725M1428.70 719V725M1430.55 719V725M1432.40 719V725M1434.25 719V725M1436.10 719V725M1437.95 719V725M1439.80 719V725M1441.65 719V725M1443.50 719V725M1445.35 719V725M1447.20 719V725M1449.05 719V725M1450.90 719V725M1452.75 719V725M1454.60 719V725M1456.45 719V725M1458.30 719V725M1460.15 719V725M1462.00 719V725M1463.85 719V725M1465.70 719V725M1467.55 719V725M1469.40 719V725M1471.25 719V725M1473.10 719V725M1474.95 719V725M1476.80 719V725M1478.65 719V725M1480.50 719V725M1482.35 719V725M1484.20 719V725M1486.05 719V725M1487.90 719V725M1489.75 719V725M1491.60 719V725M1493.45 719V725M1495.30 719V725M1497.15 719V725M1499.00 719V725M1500.85 719V725M1502.70 719V725M1504.55 719V725M1506.40 719V725M1508.25 719V725M1510.10 719V725M1511.95 719V725M1513.80 719V725M1515.65 719V725M1517.50 719V725M1519.35 719V725M1521.20 719V725M1523.05 719V725M1524.90 719V725M1526.75 719V725M1528.60 719V725M1530.45 719V725M1532.30 719V725M1534.15 719V725M1536.00 719V725M1537.85 719V725M1539.70 719V725M1541.55 719V725M1543.40 719V725M1545.25 719V725M1547.10 719V725M1548.95 719V725M1550.80 719V725M1552.65 719V725M1554.50 719V725M1556.35 719V725M1558.20 719V725M1560.05 719V725M1561.90 719V725M1563.75 719V725M1565.60 719V725M1567.45 719V725M1569.30 719V725M1571.15 719V725M1573.00 719V725M1574.85 719V725M1576.70 719V725M1578.55 719V725M1580.40 719V725M1582.25 719V725M1584.10 719V725M1585.95 719V725M1587.80 719V725M1589.65 719V725M1591.50 719V725M1593.35 719V725M1595.20 719V725M1597.05 719V725M1598.90 719V725M1600.75 719V725M1602.60 719V725M1604.45 719V725M1606.30 719V725M1608.15 719V725M1610.00 719V725M1611.85 719V725M1613.70 719V725M1615.55 719V725M1617.40 719V725M1619.25 719V725M1621.10 719V725M1622.95 719V725M1624.80 719V725M1626.65 719V725M1628.50 719V725M1630.35 719V725M1632.20 719V725M1634.05 719V725M1635.90 719V725M1637.75 719V725M1639.60 719V725M1641.45 719V725M1643.30 719V725M1645.15 719V725M1647.00 719V725M1648.85 719V725M1650.70 719V725M1652.55 719V725M1654.40 719V725M1656.25 719V725M1658.10 719V725M1659.95 719V725M1661.80 719V725M1663.65 719V725M1665.50 719V725M1667.35 719V725M1669.20 719V725M1671.05 719V725M1672.90 719V725M1674.75 719V725M1676.60 719V725M1678.45 719V725M1680.30 719V725M1682.15 719V725M1684.00 719V725M1685.85 719V725M1687.70 719V725M1689.55 719V725M1691.40 719V725M1693.25 719V725M1695.10 719V725M1696.95 719V725M1698.80 719V725M1700.65 719V725M1702.50 719V725M1704.35 719V725M1706.20 719V725M1708.05 719V725M1709.90 719V725M1711.75 719V725M1713.60 719V725M1715.45 719V725M1717.30 719V725M1719.15 719V725M1721.00 719V725M1722.85 719V725M1724.70 719V725M1726.55 719V725M1728.40 719V725M1730.25 719V725M1732.10 719V725M1733.95 719V725M1735.80 719V725M1737.65 719V725M1739.50 719V725M1741.35 719V725M1743.20 719V725M1745.05 719V725M1746.90 719V725M1748.75 719V725M1750.60 719V725M1752.45 719V725M1754.30 719V725M1756.15 719V725M1758.00 719V725M1759.85 719V725M1761.70 719V725M1763.55 719V725M1765.40 719V725M1767.25 719V725M1769.10 719V725M1770.95 719V725M1772.80 719V725M1774.65 719V725M1776.50 719V725M1778.35 719V725M1780.20 719V725M1782.05 719V725M1783.90 719V725M1785.75 719V725M1787.60 719V725M1789.45 719V725M1791.30 719V725M1793.15 719V725M1795.00 719V725M1796.85 719V725M1798.70 719V725M1800.55 719V725M1802.40 719V725M1804.25 719V725M1806.10 719V725M1807.95 719V725M1809.80 719V725M1811.65 719V725M1813.50 719V725M1815.35 719V725M1817.20 719V725M1819.05 719V725M1820.90 719V725M1822.75 719V725M1824.60 719V725M1826.45 719V725M1828.30 719V725M1830.15 719V725M1832.00 719V725M1833.85 719V725M1835.70 719V725M1837.55 719V725M1839.40 719V725M1841.25 719V725M1843.10 719V725" stroke="#b08c18" stroke-width="0.6" fill="none"/><path d="M1053.50 718.5h1V725.5h-1ZM1069.80 718.5h1V725.5h-1ZM1080.70 718.5h1V725.5h-1ZM1105.60 718.5h1V725.5h-1ZM1132.70 718.5h1V725.5h-1ZM1140.70 718.5h1V725.5h-1ZM1154.50 718.5h1V725.5h-1ZM1241.70 718.5h1V725.5h-1ZM1253.10 718.5h1V725.5h-1ZM1271.70 718.5h1V725.5h-1ZM1316.00 718.5h1V725.5h-1ZM1355.90 718.5h1V725.5h-1ZM1381.20 718.5h1V725.5h-1ZM1600.90 718.5h1V725.5h-1ZM1685.50 718.5h1V725.5h-1ZM1759.00 718.5h1V725.5h-1ZM1777.90 718.5h1V725.5h-1ZM1815.80 718.5h1V725.5h-1Z" fill="#181b1f"/><rect x="1144.70" y="689.2" width="1.2" height="35.8" fill="#F2CC0C"/><rect x="1428.40" y="649.3" width="1.2" height="75.7" fill="#F2CC0C"/><rect x="1617.70" y="678.4" width="1.2" height="46.6" fill="#F2CC0C"/><line x1="932" y1="737.5" x2="1851" y2="737.5" stroke="#24262b" stroke-width="1"/><line x1="932" y1="753.5" x2="1851" y2="753.5" stroke="#24262b" stroke-width="1"/><rect x="940" y="744.8" width="9" height="3" rx="0.4" fill="#84c47c"/><text x="954.5" y="745.5" font-size="8.7" text-anchor="start" fill="#c4c4cf" stroke="#c4c4cf" stroke-width="0.22" font-weight="normal" dominant-baseline="central">org.apache.dubbo.metadata.MetadataService.getMetadataInfo</text><rect x="940" y="760.5" width="9" height="3" rx="0.4" fill="#f0cf48"/><text x="954.5" y="761.2" font-size="8.7" text-anchor="start" fill="#c4c4cf" stroke="#c4c4cf" stroke-width="0.22" font-weight="normal" dominant-baseline="central">org.apache.dubbo.samples.metrics.prometheus.api.DemoService.sayHello</text></svg>
</body></html>
